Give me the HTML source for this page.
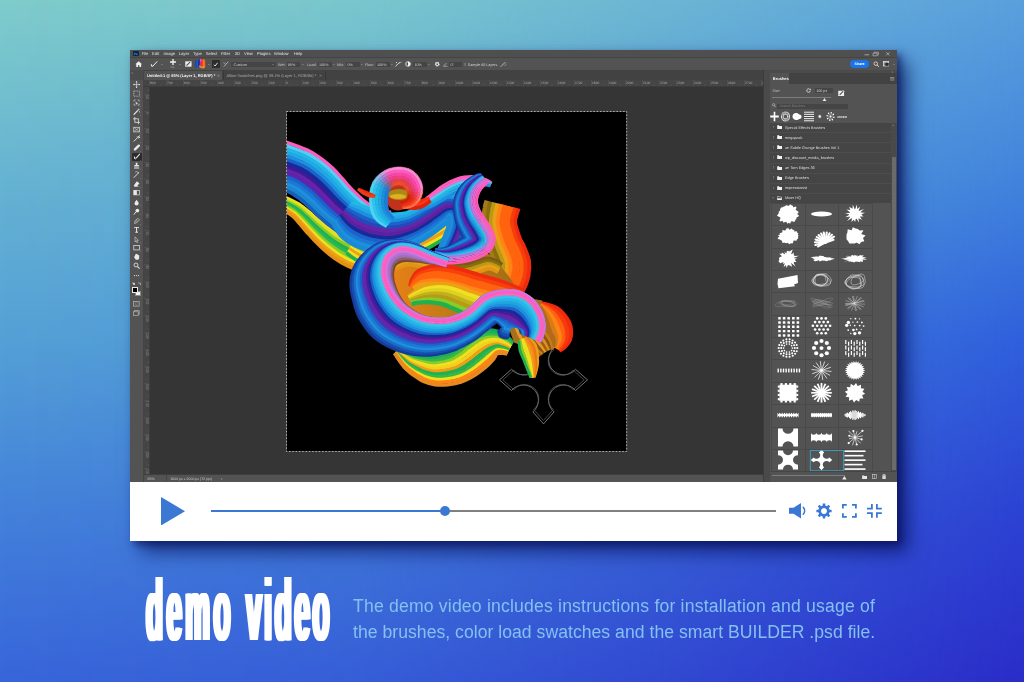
<!DOCTYPE html>
<html lang="en">
<head>
<meta charset="utf-8">
<title>demo video</title>
<style>
*{margin:0;padding:0;box-sizing:border-box}
html,body{width:1024px;height:682px;overflow:hidden;background:#3a6ad8}
body{font-family:"Liberation Sans",sans-serif;position:relative}
.a{position:absolute}
#bg{left:0;top:0;width:1024px;height:682px;
 background:linear-gradient(180deg,#7fcccb 0%,#67b4d2 25%,#54a0d6 50%,#4381da 75%,#3865da 100%);}
#bg2{left:0;top:0;width:1024px;height:682px;
 background:linear-gradient(180deg,#5a9fdc 0%,#4285dc 25%,#2f5fdc 50%,#2c42d2 75%,#2a2cc8 100%);
 -webkit-mask-image:linear-gradient(90deg,transparent 0%,rgba(0,0,0,.13) 35%,rgba(0,0,0,.5) 65%,#000 100%);mask-image:linear-gradient(90deg,transparent 0%,rgba(0,0,0,.13) 35%,rgba(0,0,0,.5) 65%,#000 100%);}
#win{left:130px;top:50px;width:767px;height:491px;background:#535353;
 box-shadow:11px 11px 18px rgba(4,10,78,.62),4px 4px 7px rgba(4,10,70,.5);}
#ps{left:0;top:0;width:767px;height:432px;background:#535353;overflow:hidden;font-size:4.6px;color:#ddd;line-height:1}
#player{left:0;top:432px;width:767px;height:59px;background:#fff}
.t{position:absolute;white-space:nowrap;line-height:1}
/* bottom text */
#title{left:146px;top:566px;font-weight:bold;font-size:88px;color:#fff;white-space:nowrap;line-height:1;
 transform-origin:0 0;transform:scaleX(.315);letter-spacing:11px;word-spacing:4px;
 text-shadow:2.8px 0 0 #fff,-2.8px 0 0 #fff,5.6px 0 0 #fff,-5.6px 0 0 #fff}
#desc{will-change:opacity;left:353px;top:593px;width:560px;font-size:17.6px;line-height:26.3px;color:#84c0f0;white-space:nowrap}
</style>
</head>
<body>
<div id="bg" class="a"></div>
<div id="bg2" class="a"></div>

<div id="win" class="a">
 <div id="ps" class="a">
<div class="a" style="left:-130px;top:-50px;width:0;height:0">
<div class="a" style="left:130px;top:50px;width:767px;height:7.5px;background:#4f4f4f;"></div>
<div class="a" style="left:130px;top:57.2px;width:767px;height:0.6px;background:#444;"></div>
<div class="a" style="left:133.2px;top:51.4px;width:5.4px;height:5px;background:#0b2747;border-radius:1px"></div>
<svg class="a" style="left:862px;top:51px;" width="30" height="6" viewBox="0 0 30 6"><path d="M2.500 3.800h4.500" stroke="#c4c4c4" stroke-width=".7"/><path d="M11 2.200h4.200v2.600H11z M12.200 2.200v-1h4.200v2.600h-1.200" fill="none" stroke="#c4c4c4" stroke-width=".6"/><path d="M24.300 1.300l3 3M27.300 1.300l-3 3" stroke="#c4c4c4" stroke-width=".7"/></svg>
<div class="a" style="left:130px;top:57.8px;width:767px;height:12.2px;background:#535353;"></div>
<svg class="a" style="left:135.4px;top:60.8px;" width="7.4" height="6.2" viewBox="0 0 14 12"><path d="M7 .5L.5 6.2h1.8V11.5h3.4V8h2.6v3.5h3.4V6.2h1.8z" fill="#f0f0f0"/></svg>
<svg class="a" style="left:149.5px;top:60.5px;" width="8" height="7" viewBox="0 0 16 14"><path d="M1.5 6.5c1.5-.6 2.6.3 3 2.2.3 1.5 1 2.3 2 2.3-1.6 1-3.6.6-4.3-1-.5-1.2-.2-2.6-.7-3.500z" fill="#f0f0f0"/><path d="M6.5 9.500L14 1.200" stroke="#f0f0f0" stroke-width="2" stroke-linecap="round"/></svg>
<svg class="a" style="left:160.5px;top:63.54px;" width="2.2" height="1.32" viewBox="0 0 10 6"><path d="M1 1L5 5L9 1" fill="none" stroke="#bdbdbd" stroke-width="2"/></svg>
<svg class="a" style="left:169.8px;top:59.2px;" width="6" height="6" viewBox="0 0 12 12"><path d="M6 0v12M0 6h12" stroke="#f4f4f4" stroke-width="2.600"/></svg>
<svg class="a" style="left:179.1px;top:63.54px;" width="2.2" height="1.32" viewBox="0 0 10 6"><path d="M1 1L5 5L9 1" fill="none" stroke="#bdbdbd" stroke-width="2"/></svg>
<svg class="a" style="left:185.4px;top:61.2px;" width="6.8" height="6" viewBox="0 0 14 12"><rect x=".5" y=".500" width="13" height="11" fill="#ededed"/><path d="M3 9.500L10.500 2" stroke="#535353" stroke-width="2.200"/></svg>
<svg class="a" style="left:195.4px;top:58.2px;" width="10.8" height="11" viewBox="0 0 22 22"><defs><linearGradient id="sw" x1="0" x2="1" y1="0" y2="0"><stop offset="0" stop-color="#0b3fa8"/><stop offset=".22" stop-color="#1a5fd8"/><stop offset=".36" stop-color="#0a1e78"/><stop offset=".5" stop-color="#d02fb0"/><stop offset=".66" stop-color="#e8281c"/><stop offset=".82" stop-color="#ff7a18"/><stop offset="1" stop-color="#e85a10"/></linearGradient></defs><path d="M1 5c2-3 5-3 6 0 1-4 5-5 7-1 2-3 6-2 7 1v13c-1 3-5 3-7 0-1 3-5 3-7 0-1 3-5 3-6 0z" fill="url(#sw)"/><path d="M8 14c3 2 6 3 12 2v4c-4 2-9 1-12-2z" fill="#e0a020" opacity=".75"/><circle cx="12" cy="4.500" r="2.200" fill="#ff4fc0"/></svg>
<svg class="a" style="left:207.5px;top:63.54px;" width="2.2" height="1.32" viewBox="0 0 10 6"><path d="M1 1L5 5L9 1" fill="none" stroke="#bdbdbd" stroke-width="2"/></svg>
<div class="a" style="left:212px;top:60.4px;width:7.5px;height:7.2px;background:#2d2d2d;border-radius:.8px"></div>
<svg class="a" style="left:213.2px;top:61.5px;" width="5.2" height="5" viewBox="0 0 10 10"><path d="M1.500 5.500L4 8l5-6.500" fill="none" stroke="#f2f2f2" stroke-width="1.800"/></svg>
<svg class="a" style="left:222.6px;top:61px;" width="6.4" height="6" viewBox="0 0 12 12"><path d="M2 10.500L9.500 2" stroke="#b5b5b5" stroke-width="1.800" stroke-linecap="round"/><path d="M1 3l3 3M4 3L1 6" stroke="#b5b5b5" stroke-width="1"/></svg>
<div class="a" style="left:231.4px;top:61.6px;width:44.4px;height:5.6px;background:#454545;border-radius:.6px"></div>
<svg class="a" style="left:271.8px;top:63.74px;" width="2.2" height="1.32" viewBox="0 0 10 6"><path d="M1 1L5 5L9 1" fill="none" stroke="#bdbdbd" stroke-width="2"/></svg>
<div class="a" style="left:286.6px;top:61.6px;width:13.6px;height:5.6px;background:#454545;border-radius:.6px"></div>
<svg class="a" style="left:301.7px;top:63.74px;" width="2.2" height="1.32" viewBox="0 0 10 6"><path d="M1 1L5 5L9 1" fill="none" stroke="#bdbdbd" stroke-width="2"/></svg>
<div class="a" style="left:317.8px;top:61.6px;width:13.8px;height:5.6px;background:#454545;border-radius:.6px"></div>
<svg class="a" style="left:332.9px;top:63.74px;" width="2.2" height="1.32" viewBox="0 0 10 6"><path d="M1 1L5 5L9 1" fill="none" stroke="#bdbdbd" stroke-width="2"/></svg>
<div class="a" style="left:346.2px;top:61.6px;width:13.4px;height:5.6px;background:#454545;border-radius:.6px"></div>
<svg class="a" style="left:360.5px;top:63.74px;" width="2.2" height="1.32" viewBox="0 0 10 6"><path d="M1 1L5 5L9 1" fill="none" stroke="#bdbdbd" stroke-width="2"/></svg>
<div class="a" style="left:375.8px;top:61.6px;width:13.8px;height:5.6px;background:#454545;border-radius:.6px"></div>
<svg class="a" style="left:390.5px;top:63.74px;" width="2.2" height="1.32" viewBox="0 0 10 6"><path d="M1 1L5 5L9 1" fill="none" stroke="#bdbdbd" stroke-width="2"/></svg>
<svg class="a" style="left:395px;top:61px;" width="7" height="6" viewBox="0 0 14 12"><path d="M1.500 10L9 3" stroke="#e6e6e6" stroke-width="1.800" stroke-linecap="round"/><path d="M9 5c2-3 4-3.500 4.500-2" fill="none" stroke="#e6e6e6" stroke-width="1"/><circle cx="3" cy="3" r="1.200" fill="#e6e6e6"/></svg>
<svg class="a" style="left:405px;top:61.2px;" width="6" height="6" viewBox="0 0 12 12"><circle cx="6" cy="6" r="4.600" fill="none" stroke="#efefef" stroke-width="1.700"/><path d="M6 1.400a4.600 4.600 0 0 1 0 9.200z" fill="#efefef"/></svg>
<div class="a" style="left:413px;top:61.6px;width:14px;height:5.6px;background:#454545;border-radius:.6px"></div>
<svg class="a" style="left:428.1px;top:63.74px;" width="2.2" height="1.32" viewBox="0 0 10 6"><path d="M1 1L5 5L9 1" fill="none" stroke="#bdbdbd" stroke-width="2"/></svg>
<svg class="a" style="left:434px;top:61px;" width="6.4" height="6.4" viewBox="0 0 12 12"><circle cx="6" cy="6" r="3.200" fill="none" stroke="#f0f0f0" stroke-width="2.400" stroke-dasharray="1.600 .9"/><circle cx="6" cy="6" r="2.600" fill="none" stroke="#f0f0f0" stroke-width="1.500"/></svg>
<svg class="a" style="left:442.6px;top:61.8px;" width="5" height="5" viewBox="0 0 10 10"><path d="M1 8.500h8M1 8.500L7 2" fill="none" stroke="#c9c9c9" stroke-width="1.200"/></svg>
<div class="a" style="left:449px;top:61.6px;width:13px;height:5.6px;background:#454545;border-radius:.6px"></div>
<div class="a" style="left:463.8px;top:62.6px;width:2.6px;height:3.2px;background:#454545;border:.4px solid #6d6d6d"></div>
<svg class="a" style="left:500.4px;top:60.8px;" width="7" height="6.4" viewBox="0 0 14 12"><path d="M2 10.500L10 2.500" stroke="#b9b9b9" stroke-width="2" stroke-linecap="round"/><path d="M8.500 8.500a3.500 3.500 0 0 0 4-4" fill="none" stroke="#b9b9b9" stroke-width="1"/></svg>
<div class="a" style="left:850px;top:59.9px;width:18.6px;height:8.200px;background:#1b74e8;border-radius:4.100px"></div>
<svg class="a" style="left:872.6px;top:61px;" width="6.6" height="6.4" viewBox="0 0 12 12"><circle cx="5" cy="5" r="3.300" fill="none" stroke="#ececec" stroke-width="1.400"/><path d="M7.500 7.500L11 11" stroke="#ececec" stroke-width="1.700"/></svg>
<svg class="a" style="left:882.8px;top:61.4px;" width="6.2" height="5.4" viewBox="0 0 12 10"><rect x=".7" y=".7" width="10.600" height="8.600" fill="none" stroke="#ececec" stroke-width="1.400"/><path d="M.7 3h10.600M4 3v6.500" stroke="#ececec" stroke-width="1.200"/><rect x="4.500" y="3.500" width="6.500" height="5.500" fill="#2a2a2a"/></svg>
<svg class="a" style="left:892.5px;top:63.74px;" width="2.2" height="1.32" viewBox="0 0 10 6"><path d="M1 1L5 5L9 1" fill="none" stroke="#bdbdbd" stroke-width="2"/></svg>
<div class="a" style="left:130px;top:70px;width:13.6px;height:10px;background:#4b4b4b;"></div>
<div class="a" style="left:143.6px;top:70px;width:619.8px;height:10px;background:#424242;"></div>
<div class="a" style="left:143.6px;top:70.6px;width:78.9px;height:9.4px;background:#535353;"></div>
<div class="a" style="left:222.5px;top:70.6px;width:0.5px;height:9.4px;background:#383838;"></div>
<div class="a" style="left:324.6px;top:70.6px;width:0.5px;height:9.4px;background:#383838;"></div>
<div class="a" style="left:143.6px;top:80px;width:619.8px;height:6.2px;background:#454545;"></div>
<div class="a" style="left:143.6px;top:86px;width:5.8px;height:388.5px;background:#454545;"></div>
<div class="a" style="left:149.4px;top:86.2px;width:614px;height:388.3px;background:#353535;"></div>
<div class="a" style="left:143.6px;top:85.8px;width:619.8px;height:0.5px;background:#3c3c3c;"></div>
<div class="a" style="left:149.2px;top:80px;width:0.5px;height:394.5px;background:#3c3c3c;"></div>
<div class="a" style="left:149.2px;top:80.4px;width:0.4px;height:5.6px;background:#4f4f4f;"></div>
<div class="a" style="left:166.2px;top:80.4px;width:0.4px;height:5.6px;background:#4f4f4f;"></div>
<div class="a" style="left:183.2px;top:80.4px;width:0.4px;height:5.6px;background:#4f4f4f;"></div>
<div class="a" style="left:200.2px;top:80.4px;width:0.4px;height:5.6px;background:#4f4f4f;"></div>
<div class="a" style="left:217.2px;top:80.4px;width:0.4px;height:5.6px;background:#4f4f4f;"></div>
<div class="a" style="left:234.2px;top:80.4px;width:0.4px;height:5.6px;background:#4f4f4f;"></div>
<div class="a" style="left:251.2px;top:80.4px;width:0.4px;height:5.6px;background:#4f4f4f;"></div>
<div class="a" style="left:268.2px;top:80.4px;width:0.4px;height:5.6px;background:#4f4f4f;"></div>
<div class="a" style="left:285.2px;top:80.4px;width:0.4px;height:5.6px;background:#4f4f4f;"></div>
<div class="a" style="left:302.2px;top:80.4px;width:0.4px;height:5.6px;background:#4f4f4f;"></div>
<div class="a" style="left:319.2px;top:80.4px;width:0.4px;height:5.6px;background:#4f4f4f;"></div>
<div class="a" style="left:336.2px;top:80.4px;width:0.4px;height:5.6px;background:#4f4f4f;"></div>
<div class="a" style="left:353.2px;top:80.4px;width:0.4px;height:5.6px;background:#4f4f4f;"></div>
<div class="a" style="left:370.2px;top:80.4px;width:0.4px;height:5.6px;background:#4f4f4f;"></div>
<div class="a" style="left:387.2px;top:80.4px;width:0.4px;height:5.6px;background:#4f4f4f;"></div>
<div class="a" style="left:404.2px;top:80.4px;width:0.4px;height:5.6px;background:#4f4f4f;"></div>
<div class="a" style="left:421.2px;top:80.4px;width:0.4px;height:5.6px;background:#4f4f4f;"></div>
<div class="a" style="left:438.2px;top:80.4px;width:0.4px;height:5.6px;background:#4f4f4f;"></div>
<div class="a" style="left:455.2px;top:80.4px;width:0.4px;height:5.6px;background:#4f4f4f;"></div>
<div class="a" style="left:472.2px;top:80.4px;width:0.4px;height:5.6px;background:#4f4f4f;"></div>
<div class="a" style="left:489.2px;top:80.4px;width:0.4px;height:5.6px;background:#4f4f4f;"></div>
<div class="a" style="left:506.2px;top:80.4px;width:0.4px;height:5.6px;background:#4f4f4f;"></div>
<div class="a" style="left:523.2px;top:80.4px;width:0.4px;height:5.6px;background:#4f4f4f;"></div>
<div class="a" style="left:540.2px;top:80.4px;width:0.4px;height:5.6px;background:#4f4f4f;"></div>
<div class="a" style="left:557.2px;top:80.4px;width:0.4px;height:5.6px;background:#4f4f4f;"></div>
<div class="a" style="left:574.2px;top:80.4px;width:0.4px;height:5.6px;background:#4f4f4f;"></div>
<div class="a" style="left:591.2px;top:80.4px;width:0.4px;height:5.6px;background:#4f4f4f;"></div>
<div class="a" style="left:608.2px;top:80.4px;width:0.4px;height:5.6px;background:#4f4f4f;"></div>
<div class="a" style="left:625.2px;top:80.4px;width:0.4px;height:5.6px;background:#4f4f4f;"></div>
<div class="a" style="left:642.2px;top:80.4px;width:0.4px;height:5.6px;background:#4f4f4f;"></div>
<div class="a" style="left:659.2px;top:80.4px;width:0.4px;height:5.6px;background:#4f4f4f;"></div>
<div class="a" style="left:676.2px;top:80.4px;width:0.4px;height:5.6px;background:#4f4f4f;"></div>
<div class="a" style="left:693.2px;top:80.4px;width:0.4px;height:5.6px;background:#4f4f4f;"></div>
<div class="a" style="left:710.2px;top:80.4px;width:0.4px;height:5.6px;background:#4f4f4f;"></div>
<div class="a" style="left:727.2px;top:80.4px;width:0.4px;height:5.6px;background:#4f4f4f;"></div>
<div class="a" style="left:744.2px;top:80.4px;width:0.4px;height:5.6px;background:#4f4f4f;"></div>
<div class="a" style="left:761.2px;top:80.4px;width:0.4px;height:5.6px;background:#4f4f4f;"></div>
<div class="a" style="left:143.8px;top:94.2px;width:5.4px;height:0.4px;background:#4f4f4f;"></div>
<span class="t" style="left:144.2px;top:95.2px;font-size:2.7px;color:#8c8c8c;writing-mode:vertical-rl;letter-spacing:-.2px">100</span>
<div class="a" style="left:143.8px;top:111.2px;width:5.4px;height:0.4px;background:#4f4f4f;"></div>
<span class="t" style="left:144.2px;top:112.2px;font-size:2.7px;color:#8c8c8c;writing-mode:vertical-rl;letter-spacing:-.2px">0</span>
<div class="a" style="left:143.8px;top:128.2px;width:5.4px;height:0.4px;background:#4f4f4f;"></div>
<span class="t" style="left:144.2px;top:129.2px;font-size:2.7px;color:#8c8c8c;writing-mode:vertical-rl;letter-spacing:-.2px">100</span>
<div class="a" style="left:143.8px;top:145.2px;width:5.4px;height:0.4px;background:#4f4f4f;"></div>
<span class="t" style="left:144.2px;top:146.2px;font-size:2.7px;color:#8c8c8c;writing-mode:vertical-rl;letter-spacing:-.2px">200</span>
<div class="a" style="left:143.8px;top:162.2px;width:5.4px;height:0.4px;background:#4f4f4f;"></div>
<span class="t" style="left:144.2px;top:163.2px;font-size:2.7px;color:#8c8c8c;writing-mode:vertical-rl;letter-spacing:-.2px">300</span>
<div class="a" style="left:143.8px;top:179.2px;width:5.4px;height:0.4px;background:#4f4f4f;"></div>
<span class="t" style="left:144.2px;top:180.2px;font-size:2.7px;color:#8c8c8c;writing-mode:vertical-rl;letter-spacing:-.2px">400</span>
<div class="a" style="left:143.8px;top:196.2px;width:5.4px;height:0.4px;background:#4f4f4f;"></div>
<span class="t" style="left:144.2px;top:197.2px;font-size:2.7px;color:#8c8c8c;writing-mode:vertical-rl;letter-spacing:-.2px">500</span>
<div class="a" style="left:143.8px;top:213.2px;width:5.4px;height:0.4px;background:#4f4f4f;"></div>
<span class="t" style="left:144.2px;top:214.2px;font-size:2.7px;color:#8c8c8c;writing-mode:vertical-rl;letter-spacing:-.2px">600</span>
<div class="a" style="left:143.8px;top:230.2px;width:5.4px;height:0.4px;background:#4f4f4f;"></div>
<span class="t" style="left:144.2px;top:231.2px;font-size:2.7px;color:#8c8c8c;writing-mode:vertical-rl;letter-spacing:-.2px">700</span>
<div class="a" style="left:143.8px;top:247.2px;width:5.4px;height:0.4px;background:#4f4f4f;"></div>
<span class="t" style="left:144.2px;top:248.2px;font-size:2.7px;color:#8c8c8c;writing-mode:vertical-rl;letter-spacing:-.2px">800</span>
<div class="a" style="left:143.8px;top:264.2px;width:5.4px;height:0.4px;background:#4f4f4f;"></div>
<span class="t" style="left:144.2px;top:265.2px;font-size:2.7px;color:#8c8c8c;writing-mode:vertical-rl;letter-spacing:-.2px">900</span>
<div class="a" style="left:143.8px;top:281.2px;width:5.4px;height:0.4px;background:#4f4f4f;"></div>
<span class="t" style="left:144.2px;top:282.2px;font-size:2.7px;color:#8c8c8c;writing-mode:vertical-rl;letter-spacing:-.2px">1000</span>
<div class="a" style="left:143.8px;top:298.2px;width:5.4px;height:0.4px;background:#4f4f4f;"></div>
<span class="t" style="left:144.2px;top:299.2px;font-size:2.7px;color:#8c8c8c;writing-mode:vertical-rl;letter-spacing:-.2px">1100</span>
<div class="a" style="left:143.8px;top:315.2px;width:5.4px;height:0.4px;background:#4f4f4f;"></div>
<span class="t" style="left:144.2px;top:316.2px;font-size:2.7px;color:#8c8c8c;writing-mode:vertical-rl;letter-spacing:-.2px">1200</span>
<div class="a" style="left:143.8px;top:332.2px;width:5.4px;height:0.4px;background:#4f4f4f;"></div>
<span class="t" style="left:144.2px;top:333.2px;font-size:2.7px;color:#8c8c8c;writing-mode:vertical-rl;letter-spacing:-.2px">1300</span>
<div class="a" style="left:143.8px;top:349.2px;width:5.4px;height:0.4px;background:#4f4f4f;"></div>
<span class="t" style="left:144.2px;top:350.2px;font-size:2.7px;color:#8c8c8c;writing-mode:vertical-rl;letter-spacing:-.2px">1400</span>
<div class="a" style="left:143.8px;top:366.2px;width:5.4px;height:0.4px;background:#4f4f4f;"></div>
<span class="t" style="left:144.2px;top:367.2px;font-size:2.7px;color:#8c8c8c;writing-mode:vertical-rl;letter-spacing:-.2px">1500</span>
<div class="a" style="left:143.8px;top:383.2px;width:5.4px;height:0.4px;background:#4f4f4f;"></div>
<span class="t" style="left:144.2px;top:384.2px;font-size:2.7px;color:#8c8c8c;writing-mode:vertical-rl;letter-spacing:-.2px">1600</span>
<div class="a" style="left:143.8px;top:400.2px;width:5.4px;height:0.4px;background:#4f4f4f;"></div>
<span class="t" style="left:144.2px;top:401.2px;font-size:2.7px;color:#8c8c8c;writing-mode:vertical-rl;letter-spacing:-.2px">1700</span>
<div class="a" style="left:143.8px;top:417.2px;width:5.4px;height:0.4px;background:#4f4f4f;"></div>
<span class="t" style="left:144.2px;top:418.2px;font-size:2.7px;color:#8c8c8c;writing-mode:vertical-rl;letter-spacing:-.2px">1800</span>
<div class="a" style="left:143.8px;top:434.2px;width:5.4px;height:0.4px;background:#4f4f4f;"></div>
<span class="t" style="left:144.2px;top:435.2px;font-size:2.7px;color:#8c8c8c;writing-mode:vertical-rl;letter-spacing:-.2px">1900</span>
<div class="a" style="left:143.8px;top:451.2px;width:5.4px;height:0.4px;background:#4f4f4f;"></div>
<span class="t" style="left:144.2px;top:452.2px;font-size:2.7px;color:#8c8c8c;writing-mode:vertical-rl;letter-spacing:-.2px">2000</span>
<div class="a" style="left:143.8px;top:468.2px;width:5.4px;height:0.4px;background:#4f4f4f;"></div>
<span class="t" style="left:144.2px;top:469.2px;font-size:2.7px;color:#8c8c8c;writing-mode:vertical-rl;letter-spacing:-.2px">2100</span>
<div class="a" style="left:149.4px;top:84.2px;width:614px;height:1.700px;background:repeating-linear-gradient(90deg,#4f4f4f 0,#4f4f4f .4px,transparent .4px,transparent 3.400px);background-position:1.400px 0"></div>
<div class="a" style="left:147.4px;top:86.2px;width:1.800px;height:388px;background:repeating-linear-gradient(180deg,#4f4f4f 0,#4f4f4f .4px,transparent .4px,transparent 3.400px);background-position:0 1.200px"></div>
<div class="a" style="left:143.6px;top:474.5px;width:619.8px;height:7.5px;background:#535353;"></div>
<div class="a" style="left:143.6px;top:474.3px;width:619.8px;height:0.5px;background:#3e3e3e;"></div>
<div class="a" style="left:166px;top:475.2px;width:0.4px;height:6.2px;background:#444;"></div>
<div class="a" style="left:130px;top:80px;width:13.6px;height:402px;background:#535353;"></div>
<div class="a" style="left:143.3px;top:70px;width:0.5px;height:412px;background:#444;"></div>
<svg class="a" style="left:130px;top:50px;will-change:opacity" width="767" height="432" viewBox="130 50 767 432" font-family="Liberation Sans, sans-serif" text-rendering="geometricPrecision"><text x="134.1" y="55" font-size="2.9" fill="#39a6ff" font-weight="bold">Ps</text><text x="141.8" y="55" font-size="4.1" fill="#e2e2e2">File</text><text x="152" y="55" font-size="4.1" fill="#e2e2e2">Edit</text><text x="163.6" y="55" font-size="4.1" fill="#e2e2e2">Image</text><text x="178.8" y="55" font-size="4.1" fill="#e2e2e2">Layer</text><text x="193" y="55" font-size="4.1" fill="#e2e2e2">Type</text><text x="205.8" y="55" font-size="4.1" fill="#e2e2e2">Select</text><text x="221" y="55" font-size="4.1" fill="#e2e2e2">Filter</text><text x="234.7" y="55" font-size="4.1" fill="#e2e2e2">3D</text><text x="244" y="55" font-size="4.1" fill="#e2e2e2">View</text><text x="257" y="55" font-size="4.1" fill="#e2e2e2">Plugins</text><text x="274" y="55" font-size="4.1" fill="#e2e2e2">Window</text><text x="293.8" y="55" font-size="4.1" fill="#e2e2e2">Help</text><text x="170.2" y="68" font-size="2.6" fill="#a8a8a8">100</text><text x="233.6" y="66" font-size="3.9" fill="#c8c8c8">Custom</text><text x="278" y="66" font-size="3.7" fill="#c4c4c4">Wet:</text><text x="287.8" y="66" font-size="3.7" fill="#d0d0d0">95%</text><text x="307.3" y="66" font-size="3.7" fill="#c4c4c4">Load:</text><text x="319" y="66" font-size="3.7" fill="#d0d0d0">100%</text><text x="337" y="66" font-size="3.7" fill="#c4c4c4">Mix:</text><text x="347.4" y="66" font-size="3.7" fill="#d0d0d0">0%</text><text x="365" y="66" font-size="3.7" fill="#c4c4c4">Flow:</text><text x="377" y="66" font-size="3.7" fill="#d0d0d0">100%</text><text x="414.4" y="66" font-size="3.7" fill="#d0d0d0">10%</text><text x="450.4" y="66" font-size="3.7" fill="#d0d0d0">0°</text><text x="467.8" y="66" font-size="3.7" fill="#d2d2d2">Sample All Layers</text><text x="854.6" y="65" font-size="3.6" fill="#fff" font-weight="bold">Share</text><text x="131.6" y="74" font-size="3.2" fill="#aaa">«</text><text x="147" y="77" font-size="4" fill="#f2f2f2" font-weight="bold" style="letter-spacing:-.02px">Untitled-1 @ 65% (Layer 1, RGB/8*) *</text><text x="217.2" y="77" font-size="4.2" fill="#c2c2c2">×</text><text x="226.4" y="77" font-size="4" fill="#a9a9a9">Allow-Swatches.png @ 39.1% (Layer 1, RGB/8#) *</text><text x="319.2" y="77" font-size="4.2" fill="#a0a0a0">×</text><text x="150" y="84" font-size="3.3" fill="#a6a6a6">800</text><text x="167" y="84" font-size="3.3" fill="#a6a6a6">700</text><text x="184" y="84" font-size="3.3" fill="#a6a6a6">600</text><text x="201" y="84" font-size="3.3" fill="#a6a6a6">500</text><text x="218" y="84" font-size="3.3" fill="#a6a6a6">400</text><text x="235" y="84" font-size="3.3" fill="#a6a6a6">300</text><text x="252" y="84" font-size="3.3" fill="#a6a6a6">200</text><text x="269" y="84" font-size="3.3" fill="#a6a6a6">100</text><text x="286" y="84" font-size="3.3" fill="#a6a6a6">0</text><text x="303" y="84" font-size="3.3" fill="#a6a6a6">100</text><text x="320" y="84" font-size="3.3" fill="#a6a6a6">200</text><text x="337" y="84" font-size="3.3" fill="#a6a6a6">300</text><text x="354" y="84" font-size="3.3" fill="#a6a6a6">400</text><text x="371" y="84" font-size="3.3" fill="#a6a6a6">500</text><text x="388" y="84" font-size="3.3" fill="#a6a6a6">600</text><text x="405" y="84" font-size="3.3" fill="#a6a6a6">700</text><text x="422" y="84" font-size="3.3" fill="#a6a6a6">800</text><text x="439" y="84" font-size="3.3" fill="#a6a6a6">900</text><text x="456" y="84" font-size="3.3" fill="#a6a6a6">1000</text><text x="473" y="84" font-size="3.3" fill="#a6a6a6">1100</text><text x="490" y="84" font-size="3.3" fill="#a6a6a6">1200</text><text x="507" y="84" font-size="3.3" fill="#a6a6a6">1300</text><text x="524" y="84" font-size="3.3" fill="#a6a6a6">1400</text><text x="541" y="84" font-size="3.3" fill="#a6a6a6">1500</text><text x="558" y="84" font-size="3.3" fill="#a6a6a6">1600</text><text x="575" y="84" font-size="3.3" fill="#a6a6a6">1700</text><text x="592" y="84" font-size="3.3" fill="#a6a6a6">1800</text><text x="609" y="84" font-size="3.3" fill="#a6a6a6">1900</text><text x="626" y="84" font-size="3.3" fill="#a6a6a6">2000</text><text x="643" y="84" font-size="3.3" fill="#a6a6a6">2100</text><text x="660" y="84" font-size="3.3" fill="#a6a6a6">2200</text><text x="677" y="84" font-size="3.3" fill="#a6a6a6">2300</text><text x="694" y="84" font-size="3.3" fill="#a6a6a6">2400</text><text x="711" y="84" font-size="3.3" fill="#a6a6a6">2500</text><text x="728" y="84" font-size="3.3" fill="#a6a6a6">2600</text><text x="745" y="84" font-size="3.3" fill="#a6a6a6">2700</text><text x="762" y="84" font-size="3.3" fill="#a6a6a6">2800</text><text x="147.6" y="480" font-size="3.6" fill="#d0d0d0">65%</text><text x="170.4" y="480" font-size="3.5" fill="#cfcfcf">2000 px x 2000 px (72 ppi)</text><text x="221" y="480" font-size="4.4" fill="#c0c0c0">›</text></svg>
<div class="a" style="left:286px;top:110.500px;width:341.200px;height:341px;background:#000"></div><svg class="a" style="left:287px;top:111.500px" width="340" height="340" viewBox="287 111.500 340 340"><defs><filter id="sm" x="-5%" y="-5%" width="110%" height="110%"><feGaussianBlur stdDeviation=".65"/></filter></defs><g transform="translate(543.500 379.400)" fill="none"><path d="M-44 0L-32-10.6A15.2 15.2 0 1 0-10.6-32L0-44 10.6-32A15.2 15.2 0 1 0 32-10.6L44 0 32 10.6A15.2 15.2 0 1 0 10.6 32L0 44-10.6 32A15.2 15.2 0 1 0-32 10.6z" stroke="#808080" stroke-width=".9"/><path d="M-44 0L-32-10.6A15.2 15.2 0 1 0-10.6-32L0-44 10.6-32A15.2 15.2 0 1 0 32-10.6L44 0 32 10.6A15.2 15.2 0 1 0 10.6 32L0 44-10.6 32A15.2 15.2 0 1 0-32 10.6z" stroke="#5a5a5a" stroke-width=".8" transform="scale(.925)"/></g><g filter="url(#sm)" fill="none" stroke-linejoin="round"><path d="M282.7 195.9c1.3 0.6 4.6 2 7.7 3.5c3.1 1.5 7.4 3.6 10.6 5.7c3.3 2.1 6 4.8 8.8 7.1c2.7 2.3 5 4.5 7.9 6.8c2.8 2.4 6 5 9.1 7.3c3.1 2.3 6 4.5 9.3 6.5c3.2 1.9 6.8 3.8 10.3 5.5c3.4 1.6 6.8 3.1 10.5 4.5c3.7 1.4 8 3 11.8 4.1c3.8 1.2 7.6 2.4 11.2 3c3.6 0.7 7 0.7 10.3 0.9c3.3 0.1 7.9 0 9.4 0" stroke="#f0e020" stroke-width="3.5"/><path d="M282 197.2c1.3 0.6 4.7 2 7.7 3.6c3 1.5 7.2 3.5 10.3 5.7c3.1 2.1 5.7 4.6 8.4 7c2.7 2.3 5 4.6 7.8 7c2.8 2.4 6 5.1 9 7.5c3.1 2.4 6.1 4.7 9.3 6.8c3.3 2.1 6.9 4.1 10.4 5.9c3.5 1.8 7 3.4 10.8 4.9c3.8 1.5 8.1 3.1 12.1 4.3c3.9 1.2 7.9 2.4 11.6 3c3.8 0.7 7.5 0.7 10.9 0.8c3.4 0.1 7.9-0.1 9.4-0.1" stroke="#d8e028" stroke-width="3.5"/><path d="M281.3 198.5c1.3 0.6 4.7 2.1 7.7 3.6c2.9 1.6 7 3.6 10 5.7c3 2.1 5.5 4.6 8.1 7c2.6 2.3 5 4.7 7.7 7.2c2.8 2.5 5.9 5.2 8.9 7.7c3 2.5 6 4.9 9.3 7.2c3.3 2.2 6.9 4.3 10.4 6.2c3.6 2 7.2 3.7 11.1 5.3c3.9 1.6 8.3 3.2 12.3 4.5c4.1 1.2 8.2 2.4 12.1 3.1c4 0.6 8 0.6 11.5 0.6c3.5 0.1 7.8-0.2 9.4-0.2" stroke="#88cc28" stroke-width="3.5"/><path d="M280.7 199.7c1.2 0.7 4.7 2.2 7.6 3.8c2.9 1.6 6.8 3.6 9.7 5.7c2.9 2 5.2 4.5 7.8 6.9c2.5 2.3 4.9 4.8 7.6 7.4c2.7 2.6 5.7 5.3 8.7 7.9c3 2.6 6.1 5.2 9.4 7.5c3.3 2.4 6.8 4.6 10.5 6.7c3.6 2 7.2 3.9 11.2 5.6c4 1.7 8.5 3.3 12.7 4.6c4.2 1.3 8.5 2.6 12.6 3.2c4.1 0.6 8.4 0.5 12 0.6c3.6 0 7.8-0.3 9.4-0.4" stroke="#22b050" stroke-width="3.5"/><path d="M280 201c1.3 0.6 4.7 2.3 7.6 3.8c2.8 1.6 6.6 3.6 9.4 5.7c2.8 2.1 4.9 4.4 7.4 6.8c2.5 2.5 4.9 5.1 7.6 7.7c2.7 2.6 5.6 5.4 8.6 8.1c3 2.7 6.1 5.4 9.4 7.9c3.3 2.5 6.8 4.8 10.5 7c3.7 2.2 7.4 4.2 11.5 6c4.1 1.8 8.7 3.5 13 4.8c4.3 1.3 8.7 2.6 13 3.2c4.3 0.6 9 0.5 12.6 0.5c3.7 0 7.8-0.4 9.4-0.5" stroke="#28b858" stroke-width="3.5"/><path d="M279.3 202.3c1.3 0.6 4.8 2.3 7.6 3.9c2.7 1.6 6.4 3.6 9.1 5.6c2.7 2.1 4.7 4.4 7.1 6.8c2.4 2.5 4.8 5.2 7.5 7.9c2.6 2.7 5.4 5.5 8.4 8.3c3 2.7 6.1 5.7 9.5 8.3c3.3 2.6 6.8 5 10.5 7.3c3.8 2.3 7.6 4.5 11.8 6.4c4.1 1.9 8.8 3.6 13.3 5c4.4 1.3 9 2.6 13.4 3.2c4.5 0.6 9.5 0.5 13.2 0.4c3.8 0 7.8-0.5 9.4-0.6" stroke="#88cc28" stroke-width="3.5"/><path d="M278.7 203.5c1.2 0.7 4.7 2.5 7.4 4.1c2.8 1.6 6.3 3.5 8.9 5.6c2.6 2.1 4.4 4.3 6.8 6.7c2.3 2.5 4.8 5.3 7.4 8.1c2.6 2.7 5.3 5.6 8.2 8.5c3 2.8 6.2 5.9 9.6 8.6c3.3 2.8 6.8 5.4 10.6 7.8c3.7 2.4 7.7 4.7 11.9 6.7c4.3 2 9.1 3.7 13.7 5.1c4.5 1.5 9.2 2.7 13.9 3.3c4.6 0.6 9.9 0.4 13.8 0.4c3.8-0.1 7.7-0.7 9.3-0.8" stroke="#f0e020" stroke-width="3.5"/><path d="M278 204.8c1.2 0.7 4.8 2.5 7.4 4.1c2.7 1.7 6.1 3.6 8.6 5.6c2.5 2.1 4.1 4.2 6.4 6.7c2.3 2.5 4.8 5.5 7.4 8.3c2.5 2.8 5.1 5.7 8.1 8.7c2.9 2.9 6.2 6.1 9.6 9c3.3 2.8 6.8 5.6 10.6 8.1c3.8 2.5 7.9 5 12.2 7.1c4.4 2.1 9.2 3.9 13.9 5.3c4.8 1.5 9.6 2.8 14.4 3.4c4.8 0.6 10.4 0.3 14.4 0.2c3.9-0.1 7.7-0.7 9.3-0.9" stroke="#eca018" stroke-width="3.5"/><path d="M277.3 206.1c1.3 0.7 4.8 2.6 7.4 4.2c2.6 1.6 5.9 3.6 8.3 5.6c2.4 2 3.9 4.1 6.1 6.6c2.2 2.5 4.7 5.6 7.2 8.5c2.6 2.9 5.1 5.8 8 8.9c2.9 3 6.3 6.4 9.6 9.3c3.4 3 6.9 5.9 10.7 8.5c3.9 2.7 8 5.3 12.5 7.5c4.4 2.2 9.4 4 14.2 5.5c4.9 1.5 9.9 2.8 14.8 3.4c5 0.6 10.9 0.3 15 0.1c4-0.1 7.7-0.8 9.3-1" stroke="#e89018" stroke-width="3.5"/><path d="M397.4 349.3c1.1 0.5 4.3 1.8 6.7 2.7c2.4 0.8 5.5 1.9 7.8 2.4c2.2 0.6 3.8 0.6 5.7 0.8c2 0.1 3.9 0.1 6 0.2c2.2 0.1 5 0.4 6.9 0.3c1.9-0.1 2.6-0.4 4.6-0.9c2-0.4 4.9-1.1 7.2-1.8c2.4-0.8 5.1-1.7 6.8-2.6c1.8-0.9 2-1.6 3.8-3c1.7-1.3 4.5-3.6 6.8-5.3c2.4-1.7 4.2-3.2 7.2-5.1c2.9-1.8 7-4.6 10.7-5.9c3.6-1.2 7.2-1.7 10.9-1.7c3.6 0.1 7.5 0.6 10.9 2c3.4 1.4 7.1 4.4 9.4 6.3c2.2 1.8 3.4 4 4.1 4.8" stroke="#18a070" stroke-width="3.6"/><path d="M397.1 349.6c1.1 0.5 4.1 2 6.5 3c2.3 1 5.3 2.3 7.6 2.9c2.2 0.7 3.8 0.9 5.7 1.2c2 0.3 3.9 0.4 6.1 0.6c2.1 0.3 4.8 0.7 6.8 0.7c2.1 0 3.1-0.1 5.3-0.5c2.1-0.4 5.2-1 7.7-1.7c2.5-0.7 5.4-1.6 7.4-2.6c2-0.9 2.6-1.7 4.5-3.2c1.9-1.4 4.5-3.5 6.9-5.3c2.4-1.7 4.3-3.4 7.2-5.2c2.9-1.8 6.7-4.5 10.1-5.8c3.4-1.2 6.8-1.7 10.2-1.8c3.3 0 6.9 0.3 10.1 1.5c3.1 1.2 6.7 3.9 8.9 5.6c2.2 1.7 3.5 3.8 4.3 4.5" stroke="#22b050" stroke-width="3.6"/><path d="M396.9 349.9c1 0.6 3.9 2.2 6.1 3.3c2.3 1.2 5.3 2.6 7.5 3.4c2.2 0.9 3.8 1.2 5.7 1.6c2 0.5 3.9 0.7 6.1 1.1c2.2 0.3 4.8 0.9 6.9 1c2.1 0.2 3.5 0.1 5.9-0.1c2.3-0.3 5.5-0.9 8.2-1.6c2.7-0.7 5.8-1.5 8-2.5c2.2-1 3.2-2 5.2-3.5c2-1.4 4.6-3.5 7-5.3c2.4-1.7 4.5-3.5 7.3-5.3c2.8-1.9 6.3-4.4 9.5-5.6c3.1-1.3 6.2-1.9 9.3-2c3.2-0.2 6.3 0 9.3 1c2.9 1 6.3 3.5 8.4 5c2.2 1.5 3.8 3.4 4.5 4.1" stroke="#30b850" stroke-width="3.6"/><path d="M396.6 350.2c1 0.6 3.7 2.4 5.9 3.7c2.2 1.2 5.1 2.9 7.3 3.8c2.1 1 3.8 1.5 5.7 2.1c2 0.6 4 0.9 6.1 1.4c2.2 0.5 4.8 1.1 7 1.4c2.2 0.3 3.9 0.4 6.4 0.2c2.6-0.2 5.9-0.7 8.8-1.3c2.9-0.7 6.1-1.6 8.5-2.6c2.4-1 3.8-2.2 6-3.7c2.2-1.5 4.6-3.4 7-5.2c2.4-1.8 4.7-3.7 7.4-5.6c2.7-1.8 6-4.2 8.9-5.4c2.9-1.3 5.8-1.9 8.6-2.2c2.9-0.2 5.7-0.2 8.4 0.7c2.8 0.8 5.9 2.9 8 4.2c2.1 1.4 3.9 3.2 4.7 3.8" stroke="#88cc28" stroke-width="3.6"/><path d="M396.4 350.5c0.9 0.7 3.5 2.6 5.6 4c2.1 1.4 4.9 3.2 7.1 4.3c2.1 1.2 3.8 1.8 5.8 2.5c1.9 0.7 3.9 1.2 6.1 1.8c2.2 0.6 4.6 1.4 6.9 1.8c2.4 0.4 4.4 0.7 7.1 0.6c2.7-0.1 6.2-0.6 9.3-1.2c3-0.6 6.5-1.5 9.1-2.6c2.6-1 4.4-2.3 6.7-3.9c2.3-1.5 4.7-3.4 7.1-5.2c2.4-1.8 4.9-3.9 7.5-5.7c2.6-1.8 5.6-4 8.3-5.3c2.7-1.3 5.2-2 7.8-2.3c2.6-0.4 5.1-0.5 7.6 0.2c2.5 0.6 5.4 2.4 7.5 3.6c2.1 1.1 4.1 2.8 4.9 3.4" stroke="#f0e020" stroke-width="3.6"/><path d="M396.1 350.8c0.9 0.8 3.4 2.8 5.4 4.3c2 1.5 4.7 3.6 6.9 4.8c2.1 1.3 3.8 2.1 5.8 3c2 0.8 3.9 1.4 6.1 2.1c2.2 0.8 4.6 1.6 7 2.2c2.5 0.5 4.8 1 7.7 1c2.9 0 6.5-0.5 9.8-1.1c3.2-0.6 6.8-1.4 9.7-2.5c2.8-1.1 5-2.6 7.4-4.2c2.4-1.5 4.7-3.4 7.2-5.2c2.4-1.9 5-4 7.5-5.8c2.6-1.9 5.3-3.9 7.7-5.2c2.5-1.3 4.8-2 7.1-2.5c2.3-0.4 4.4-0.7 6.7-0.2c2.3 0.4 5.1 1.9 7.1 2.9c2 1 4.2 2.6 5.1 3.1" stroke="#f4d020" stroke-width="3.6"/><path d="M395.9 351.2c0.8 0.7 3.1 2.9 5.1 4.5c2 1.7 4.6 3.9 6.6 5.4c2.1 1.4 3.9 2.3 5.9 3.3c2 1 4 1.7 6.2 2.6c2.2 0.8 4.4 1.8 7 2.5c2.5 0.6 5.2 1.2 8.3 1.3c3.1 0.1 6.8-0.2 10.2-0.8c3.5-0.6 7.3-1.4 10.3-2.6c3.1-1.1 5.6-2.8 8.2-4.4c2.6-1.6 4.8-3.3 7.2-5.2c2.5-1.9 5.2-4.1 7.7-6c2.5-1.8 4.8-3.7 7.1-5c2.2-1.3 4.2-2.1 6.3-2.6c2-0.6 3.8-0.9 5.9-0.7c2.1 0.3 4.6 1.4 6.6 2.2c1.9 0.9 4.4 2.3 5.2 2.8" stroke="#eca018" stroke-width="3.6"/><path d="M395.6 351.5c0.8 0.8 3 3.1 4.9 4.8c1.9 1.8 4.4 4.3 6.4 5.9c2.1 1.5 3.9 2.6 5.9 3.7c2 1.2 4 2 6.2 3c2.2 1 4.4 2.1 7.1 2.8c2.6 0.8 5.6 1.6 8.9 1.8c3.3 0.2 7.1-0.1 10.7-0.7c3.6-0.5 7.6-1.3 10.9-2.5c3.3-1.2 6.2-3 8.9-4.7c2.7-1.6 4.8-3.3 7.3-5.2c2.5-1.9 5.4-4.3 7.8-6.1c2.3-1.8 4.4-3.6 6.4-4.9c2-1.3 3.8-2.1 5.6-2.7c1.7-0.7 3.2-1.2 5-1.2c1.9 0.1 4.2 0.9 6.1 1.6c2 0.6 4.6 2 5.5 2.4" stroke="#22b050" stroke-width="3.6"/><path d="M395.4 351.8c0.7 0.8 2.8 3.2 4.6 5.2c1.8 1.9 4.2 4.5 6.2 6.3c2.1 1.7 3.9 2.9 5.9 4.2c2 1.2 4 2.2 6.3 3.3c2.2 1.1 4.2 2.3 7 3.2c2.8 0.9 6.1 1.9 9.6 2.2c3.4 0.2 7.4 0 11.2-0.5c3.8-0.6 8-1.4 11.5-2.6c3.5-1.2 6.8-3.2 9.6-4.9c2.9-1.7 4.8-3.2 7.4-5.2c2.5-1.9 5.5-4.4 7.8-6.2c2.3-1.9 4.1-3.5 5.9-4.8c1.8-1.2 3.3-2.1 4.7-2.9c1.5-0.7 2.6-1.4 4.3-1.6c1.6-0.1 3.7 0.4 5.6 0.9c1.9 0.5 4.7 1.7 5.7 2.1" stroke="#38b848" stroke-width="3.6"/><path d="M395.1 352.1c0.7 0.9 2.6 3.4 4.4 5.5c1.7 2 4.1 4.8 6 6.8c2 1.9 3.9 3.2 5.9 4.6c2 1.4 4.1 2.5 6.3 3.7c2.2 1.2 4.2 2.6 7.1 3.6c2.9 1 6.5 2.2 10.1 2.5c3.7 0.4 7.8 0.2 11.8-0.3c4-0.5 8.3-1.3 12-2.6c3.8-1.2 7.5-3.4 10.4-5.1c3-1.7 4.9-3.2 7.4-5.1c2.6-2 5.8-4.6 8-6.5c2.2-1.8 3.7-3.3 5.2-4.6c1.6-1.2 2.8-2.2 4-3c1.3-0.9 2-1.7 3.4-2c1.4-0.3 3.3-0.2 5.2 0.2c1.8 0.3 4.9 1.4 5.9 1.7" stroke="#f0e020" stroke-width="3.6"/><path d="M394.9 352.4c0.6 0.9 2.4 3.6 4 5.8c1.7 2.2 4 5.2 5.9 7.3c2 2 3.9 3.5 5.9 5c2 1.6 4.1 2.8 6.3 4.2c2.3 1.3 4.2 2.8 7.2 3.9c2.9 1.1 6.9 2.5 10.7 2.9c3.9 0.5 8.1 0.3 12.3-0.2c4.1-0.4 8.7-1.2 12.6-2.5c4-1.4 8-3.6 11.1-5.4c3.1-1.7 4.9-3.2 7.5-5.1c2.6-2 5.9-4.8 8-6.6c2.2-1.9 3.4-3.2 4.7-4.4c1.3-1.3 2.3-2.3 3.2-3.3c1-0.9 1.3-1.9 2.5-2.4c1.3-0.5 3-0.7 4.8-0.5c1.8 0.1 5 1.1 6 1.4" stroke="#ff8418" stroke-width="3.6"/><path d="M394.6 352.7c0.7 1 2.2 3.8 3.8 6.1c1.6 2.3 3.8 5.5 5.7 7.8c2 2.2 3.9 3.8 5.9 5.5c2 1.6 4.1 3 6.4 4.5c2.2 1.4 4 3 7.1 4.3c3.1 1.3 7.4 2.7 11.4 3.3c4 0.5 8.4 0.4 12.8 0c4.3-0.5 9-1.2 13.2-2.6c4.2-1.4 8.6-3.8 11.8-5.6c3.3-1.8 5-3.1 7.6-5.1c2.6-2 6.1-4.9 8.1-6.8c2-1.8 3-3 4-4.2c1.1-1.3 1.8-2.4 2.5-3.4c0.7-1.1 0.7-2.2 1.7-2.9c1-0.7 2.5-1.1 4.3-1.2c1.7 0 5.2 0.9 6.2 1.1" stroke="#e88a20" stroke-width="3.6"/><path d="M518.4 207.9c-0.4 1.3-1.8 5.5-2.4 7.7c-0.6 2.2-1.2 3.4-1.2 5.5c0.1 2.2 0.8 4.4 1.6 7.3c0.9 2.9 2.3 7.4 3.6 10.3c1.2 3 2.4 3.7 3.8 7.3c1.5 3.6 4.2 9.5 5 14.3c0.7 4.9 0.6 9.7-0.5 14.9c-1.1 5.1-3.1 11.2-6.1 15.9c-2.9 4.6-7.2 8.5-11.6 11.8c-4.4 3.3-9.5 6-14.9 7.9c-5.3 1.9-11.5 3.1-17.3 3.7c-5.7 0.7-11.6 0.9-17.1 0.3c-5.4-0.5-10.9-2-15.6-3.5c-4.7-1.5-8.4-3.3-12.5-5.4c-4-2.1-8.6-5.1-11.7-7.2c-3.2-2.1-5.9-4.5-7-5.4" stroke="#f02a10" stroke-width="4.3"/><path d="M514.9 207c-0.4 1.3-1.8 5.3-2.4 7.7c-0.6 2.4-1.3 4.2-1.2 6.6c0.1 2.5 0.9 5 1.8 8.1c0.9 3.1 2.3 7.5 3.5 10.5c1.3 3 2.6 4.2 4 7.7c1.4 3.4 3.8 8.6 4.4 13.1c0.7 4.5 0.6 9.1-0.4 13.8c-1 4.7-2.8 10.3-5.5 14.5c-2.7 4.3-6.6 8-10.7 11.1c-4.1 3-8.9 5.6-13.9 7.4c-5.1 1.8-11 3-16.5 3.6c-5.5 0.7-11.3 0.9-16.5 0.4c-5.3-0.4-10.5-1.8-15-3.2c-4.5-1.4-8.3-3-12.2-5c-4-2-8.4-4.8-11.5-6.8c-3.1-2.1-5.9-4.4-7.1-5.2" stroke="#f83c10" stroke-width="4.3"/><path d="M511.3 206.2c-0.4 1.2-1.7 5.1-2.3 7.6c-0.5 2.6-1.3 5-1.2 7.7c0.1 2.8 1 5.7 1.9 8.9c0.9 3.3 2.3 7.6 3.6 10.7c1.3 3.1 2.7 4.7 4 8.1c1.3 3.3 3.4 7.7 4 11.9c0.6 4.1 0.5 8.4-0.4 12.8c-0.9 4.3-2.5 9.2-5 13.1c-2.5 3.9-6 7.3-9.8 10.2c-3.8 2.8-8.1 5.3-12.9 7c-4.8 1.8-10.4 2.9-15.7 3.5c-5.2 0.7-10.8 0.9-15.9 0.5c-5-0.4-9.9-1.6-14.3-2.9c-4.4-1.2-8.1-2.8-12-4.7c-3.8-1.8-8.1-4.5-11.2-6.4c-3-1.9-6-4.2-7.2-5" stroke="#ff6410" stroke-width="4.3"/><path d="M507.8 205.3c-0.4 1.3-1.6 4.9-2.2 7.7c-0.6 2.7-1.5 5.6-1.3 8.7c0.1 3.1 1.1 6.3 2.1 9.8c0.9 3.4 2.3 7.5 3.6 10.7c1.3 3.3 2.8 5.3 4 8.5c1.3 3.2 3.1 7 3.6 10.7c0.5 3.8 0.3 7.9-0.5 11.8c-0.8 4-2.1 8.3-4.4 11.8c-2.2 3.5-5.4 6.7-8.8 9.3c-3.5 2.7-7.5 5-12 6.6c-4.5 1.7-9.8 2.8-14.8 3.4c-5.1 0.7-10.5 1-15.3 0.6c-4.8-0.3-9.4-1.4-13.7-2.6c-4.2-1.1-7.9-2.6-11.7-4.3c-3.8-1.7-7.9-4.2-10.9-6c-3.1-1.8-6.1-4.1-7.3-4.9" stroke="#ff6410" stroke-width="4.3"/><path d="M504.3 204.4c-0.4 1.3-1.6 4.8-2.2 7.7c-0.6 2.9-1.5 6.4-1.3 9.8c0.1 3.4 1.2 7 2.2 10.6c1 3.6 2.4 7.6 3.7 10.9c1.3 3.3 2.9 5.9 4.1 8.9c1.2 3.1 2.6 6.1 3.1 9.5c0.4 3.4 0.2 7.2-0.5 10.8c-0.7 3.5-1.9 7.3-3.8 10.4c-2 3.1-4.8 6-8 8.4c-3.1 2.5-6.8 4.7-11 6.2c-4.1 1.6-9.2 2.7-14 3.3c-4.8 0.7-10.1 1-14.7 0.7c-4.6-0.2-8.9-1.2-12.9-2.2c-4.1-1.1-7.8-2.5-11.5-4.1c-3.7-1.6-7.7-3.8-10.7-5.6c-3-1.7-6.2-3.9-7.4-4.7" stroke="#ff6410" stroke-width="4.3"/><path d="M500.7 203.6c-0.3 1.2-1.5 4.5-2.1 7.6c-0.5 3.1-1.5 7.2-1.4 10.9c0.2 3.7 1.5 7.7 2.5 11.4c1 3.8 2.3 7.7 3.6 11.1c1.3 3.4 3.1 6.4 4.2 9.3c1.1 3 2.3 5.3 2.6 8.3c0.4 3 0.2 6.6-0.4 9.7c-0.6 3.2-1.6 6.3-3.3 9.1c-1.7 2.8-4.2 5.3-7 7.6c-2.9 2.2-6.2 4.3-10 5.8c-3.9 1.5-8.7 2.5-13.3 3.2c-4.5 0.6-9.6 0.9-14 0.8c-4.4-0.2-8.4-1.1-12.3-2c-3.9-1-7.7-2.2-11.3-3.7c-3.6-1.5-7.3-3.6-10.3-5.2c-3-1.6-6.3-3.8-7.6-4.5" stroke="#ff8418" stroke-width="4.3"/><path d="M497.2 202.7c-0.3 1.3-1.4 4.3-2 7.6c-0.6 3.3-1.7 7.9-1.5 12c0.2 4 1.6 8.3 2.6 12.2c1.1 3.9 2.4 7.8 3.7 11.3c1.3 3.5 3.2 6.9 4.2 9.7c1.1 2.8 1.9 4.4 2.2 7.1c0.3 2.6 0.1 5.9-0.4 8.7c-0.5 2.7-1.3 5.3-2.7 7.7c-1.5 2.4-3.6 4.7-6.2 6.7c-2.5 2-5.4 4-9 5.4c-3.6 1.4-8.1 2.4-12.4 3.1c-4.3 0.6-9.3 1-13.5 0.9c-4.2-0.2-7.8-0.9-11.6-1.7c-3.8-0.8-7.5-2-11-3.4c-3.5-1.3-7.1-3.2-10.1-4.7c-2.9-1.6-6.4-3.7-7.7-4.4" stroke="#eca018" stroke-width="4.3"/><path d="M493.7 201.8c-0.4 1.3-1.4 4.2-2 7.6c-0.6 3.4-1.7 8.7-1.5 13.1c0.2 4.3 1.7 9 2.8 13.1c1 4 2.4 7.7 3.7 11.3c1.3 3.6 3.3 7.5 4.3 10.2c0.9 2.7 1.5 3.6 1.7 5.8c0.2 2.3 0 5.4-0.4 7.7c-0.5 2.4-1 4.3-2.2 6.4c-1.2 2-3 4-5.2 5.8c-2.2 1.8-4.8 3.7-8.1 5c-3.3 1.3-7.5 2.3-11.6 3c-4 0.6-8.9 1-12.8 1c-4-0.1-7.3-0.6-11-1.4c-3.6-0.7-7.3-1.8-10.7-3c-3.5-1.3-6.9-2.9-9.8-4.4c-3-1.4-6.5-3.5-7.8-4.2" stroke="#b89a18" stroke-width="4.3"/><path d="M490.1 201c-0.3 1.2-1.3 3.9-1.9 7.5c-0.5 3.6-1.7 9.5-1.5 14.2c0.2 4.6 1.8 9.6 2.9 13.9c1.1 4.2 2.4 7.8 3.8 11.5c1.3 3.7 3.4 8.1 4.3 10.6c0.9 2.5 1.1 2.7 1.3 4.6c0.1 1.9-0.1 4.7-0.5 6.7c-0.3 1.9-0.6 3.3-1.6 5c-0.9 1.6-2.4 3.4-4.3 4.9c-1.9 1.6-4.1 3.4-7.1 4.6c-2.9 1.2-6.9 2.2-10.7 2.9c-3.9 0.6-8.5 1-12.3 1.1c-3.7 0-6.8-0.4-10.2-1.1c-3.5-0.6-7.2-1.6-10.6-2.7c-3.3-1.1-6.6-2.6-9.5-3.9c-2.9-1.3-6.6-3.4-7.9-4.1" stroke="#8a6c10" stroke-width="4.3"/><path d="M486.6 200.1c-0.3 1.2-1.3 3.7-1.8 7.5c-0.6 3.8-1.9 10.3-1.6 15.3c0.2 5 1.9 10.3 3.1 14.7c1.1 4.4 2.4 7.9 3.7 11.7c1.4 3.7 3.5 8.6 4.4 11c0.9 2.4 0.8 1.9 0.8 3.4c0.1 1.5-0.1 4.1-0.4 5.6c-0.2 1.6-0.3 2.4-1 3.6c-0.8 1.3-1.8 2.8-3.4 4.2c-1.6 1.4-3.5 3-6.1 4.1c-2.7 1.2-6.4 2.1-10 2.8c-3.6 0.6-8.1 1.1-11.6 1.2c-3.6 0-6.3-0.2-9.6-0.7c-3.3-0.6-7.1-1.5-10.3-2.4c-3.3-1-6.4-2.3-9.3-3.5c-2.8-1.3-6.6-3.3-8-3.9" stroke="#a07c14" stroke-width="4.3"/><path d="M353.5 239.7c1.6 0.7 6.2 3.2 9.2 4.4c3 1.2 6.2 2.4 8.9 2.8c2.8 0.4 4.8 0 7.8-0.5c3-0.4 6.9-1.4 10.1-2.3c3.3-0.9 6-2 9.2-3.2c3.1-1.3 6.4-2.9 9.5-4.3c3-1.4 5.8-2.8 8.7-4.3c2.9-1.4 5.6-2.9 8.8-4.4c3.1-1.6 7.1-3.6 10.2-5.1c3-1.5 6.7-3.3 8.1-4" stroke="#18a8a0" stroke-width="3.6"/><path d="M352.4 241.8c1.5 0.8 5.8 3.3 9 4.6c3.1 1.4 6.6 3 9.7 3.6c3.1 0.5 5.6 0 8.8-0.5c3.2-0.5 7.1-1.5 10.5-2.4c3.3-1 6.3-2.1 9.5-3.4c3.1-1.3 6.5-2.9 9.6-4.3c3-1.4 5.9-2.8 8.8-4.3c3-1.5 5.7-2.9 8.8-4.5c3.2-1.7 7.1-3.7 10.2-5.2c3-1.6 6.7-3.5 8-4.2" stroke="#22b050" stroke-width="3.6"/><path d="M351.2 243.9c1.4 0.8 5.6 3.4 8.8 4.9c3.2 1.5 7.1 3.6 10.5 4.2c3.5 0.6 6.5 0 10-0.4c3.4-0.5 7.3-1.6 10.7-2.6c3.4-1 6.6-2.1 9.9-3.5c3.2-1.3 6.5-2.9 9.6-4.3c3.1-1.4 6.1-2.8 9-4.3c3-1.5 5.7-3 8.9-4.6c3.1-1.7 7.1-3.8 10.1-5.4c3-1.6 6.6-3.6 8-4.3" stroke="#88cc28" stroke-width="3.6"/><path d="M350 246c1.4 0.9 5.3 3.5 8.6 5.2c3.4 1.7 7.7 4.1 11.4 4.8c3.7 0.7 7.3 0.1 11-0.4c3.7-0.5 7.5-1.6 11-2.6c3.5-1 6.9-2.3 10.2-3.6c3.4-1.4 6.7-2.9 9.8-4.4c3.1-1.5 6.1-2.9 9.1-4.4c3-1.5 5.7-2.9 8.9-4.6c3.2-1.7 7.1-3.9 10.1-5.6c3-1.6 6.6-3.7 7.9-4.4" stroke="#f0e020" stroke-width="3.6"/><path d="M348.8 248.1c1.4 0.9 5 3.6 8.5 5.5c3.4 1.8 8.1 4.6 12.2 5.4c4 0.9 8.1 0.2 12-0.3c3.9-0.5 7.7-1.7 11.3-2.7c3.7-1.1 7.2-2.4 10.6-3.8c3.5-1.4 6.7-2.9 9.9-4.4c3.2-1.5 6.2-2.9 9.2-4.4c3.1-1.5 5.8-3 8.9-4.7c3.2-1.7 7.2-4 10.1-5.7c3-1.7 6.5-3.8 7.8-4.6" stroke="#eca018" stroke-width="3.6"/><path d="M347.6 250.2c1.4 1 4.8 3.8 8.3 5.7c3.5 2 8.6 5.2 13 6.1c4.4 1 9.1 0.3 13.2-0.2c4.1-0.6 7.8-1.8 11.5-2.9c3.8-1.1 7.6-2.5 11-3.9c3.5-1.4 6.7-2.9 9.9-4.4c3.3-1.5 6.4-2.9 9.4-4.5c3.1-1.5 5.8-2.9 9-4.7c3.2-1.7 7.1-4.1 10.1-5.9c2.9-1.8 6.4-3.9 7.7-4.7" stroke="#f0e020" stroke-width="3.6"/><path d="M346.5 252.3c1.3 1 4.4 3.9 8 6c3.7 2.1 9.2 5.7 13.9 6.8c4.6 1.1 9.9 0.3 14.2-0.3c4.4-0.5 8-1.8 11.9-2.9c3.8-1.2 7.8-2.6 11.3-4c3.6-1.5 6.8-3 10-4.5c3.3-1.5 6.4-3 9.5-4.5c3.1-1.5 5.8-2.9 9-4.8c3.2-1.8 7.1-4.2 10.1-6.1c2.9-1.8 6.3-4 7.6-4.8" stroke="#22b050" stroke-width="3.6"/><linearGradient id="cg" x1="392" x2="520" y1="0" y2="0" gradientUnits="userSpaceOnUse"><stop offset="0" stop-color="#e8801a"/><stop offset=".35" stop-color="#c87c16"/><stop offset="1" stop-color="#a06c14"/></linearGradient><path d="M386 262L398 248 412 250 428 258 445 263 467 260 487 252 498 262 512 280 520 297 500 302 470 312 450 319 425 318 402 305 389 287 385 275z" fill="url(#cg)" stroke="none"/><path d="M392.3 263.1c0.9-0.7 2.9-2.9 5.4-4.5c2.5-1.5 6.2-4.1 9.6-4.9c3.3-0.7 7.1-0.1 10.5 0.4c3.4 0.4 6.4 1.3 9.7 2.3c3.4 1 7.1 2.5 10.3 3.5c3.3 1.1 6 2.3 9.2 2.9c3.2 0.6 6.8 0.8 10.1 0.9c3.4 0.1 6.8 0.1 10-0.4c3.3-0.6 6-1.9 9.5-2.8c3.4-1 7.7-2.9 11.2-2.8c3.5 0.1 7.4 2.2 9.8 3.2c2.3 1.1 3.7 2.7 4.4 3.3" stroke="#7a5a12" stroke-width="3.4"/><path d="M393.2 264.6c0.9-0.7 3.2-2.8 5.6-4.1c2.4-1.4 5.8-3.5 8.8-4.1c3.1-0.6 6.4 0 9.6 0.5c3.2 0.4 6.3 1.3 9.6 2.3c3.2 1 6.7 2.4 10 3.5c3.3 1 6.3 2.3 9.7 2.9c3.4 0.7 7.1 0.9 10.6 1c3.5 0.1 7 0.1 10.5-0.5c3.4-0.6 6.6-2 10-3c3.4-1 7.2-2.7 10.3-2.8c3.1 0 6.3 1.8 8.5 2.7c2.2 1 3.8 2.6 4.6 3.1" stroke="#8a6c10" stroke-width="3.4"/><path d="M394 266c1-0.6 3.5-2.5 5.9-3.7c2.3-1.2 5.3-2.9 8.1-3.3c2.8-0.4 5.6 0.2 8.6 0.7c3 0.5 6.2 1.3 9.4 2.3c3.2 1 6.4 2.3 9.8 3.4c3.3 1.1 6.7 2.4 10.2 3.1c3.5 0.7 7.3 0.9 11 1c3.7 0.1 7.4 0.1 11-0.5c3.6-0.6 7.3-2.3 10.6-3.3c3.4-1 6.6-2.6 9.4-2.7c2.8-0.1 5.2 1.3 7.2 2.1c2.1 0.9 4 2.4 4.8 2.9" stroke="#b89a18" stroke-width="3.4"/><path d="M394.8 267.4c1.1-0.5 3.9-2.3 6.2-3.2c2.2-1 4.9-2.3 7.4-2.6c2.5-0.3 4.8 0.3 7.7 0.8c2.8 0.6 6 1.5 9.1 2.4c3.1 1 6.1 2.2 9.5 3.3c3.4 1.1 7.1 2.5 10.8 3.3c3.7 0.7 7.6 1 11.4 1.1c3.9 0 7.7 0.1 11.5-0.6c3.8-0.7 8-2.5 11.2-3.6c3.3-1 6.1-2.5 8.5-2.6c2.4-0.2 4.2 0.8 6 1.5c1.8 0.7 4.1 2.3 4.9 2.7" stroke="#eca018" stroke-width="3.4"/><path d="M395.7 268.9c1-0.5 4.2-2.1 6.4-2.9c2.1-0.8 4.4-1.6 6.6-1.7c2.3-0.2 4.2 0.4 6.8 0.9c2.6 0.6 5.9 1.5 9 2.4c3 0.9 5.8 2.2 9.2 3.3c3.4 1.1 7.4 2.6 11.3 3.3c3.8 0.8 7.9 1.1 11.9 1.2c3.9 0.1 8 0.1 12-0.7c3.9-0.7 8.5-2.7 11.8-3.7c3.2-1.1 5.4-2.4 7.5-2.7c2-0.3 3.1 0.4 4.7 1c1.7 0.6 4.2 2.1 5.1 2.5" stroke="#e09418" stroke-width="3.4"/><path d="M410.5 285.9c0.2-1 0.1-3.4 1.1-5.7c1.1-2.3 2.8-6.1 5.1-8.2c2.4-2.1 5.8-3.4 9-4.4c3.2-1.1 6.7-1.7 10.1-1.9c3.4-0.3 6.8-0.1 10.2 0.3c3.4 0.4 6.6 1.1 10.1 1.9c3.6 0.8 7.6 2 11.3 3.1c3.8 1.1 7.3 2.4 11.2 3.5c3.8 1.2 7.9 2.2 11.9 3.4c4 1.1 8 2.3 11.9 3.6c3.9 1.3 8.1 3.1 11.4 4.4c3.2 1.4 6.8 3 8.2 3.6" stroke="#f02a10" stroke-width="4.3"/><path d="M411.1 286.3c0.3-0.8 0.7-3.1 1.9-5.1c1.1-2 2.8-5.1 5-6.8c2.3-1.7 5.4-2.8 8.4-3.6c2.9-0.9 6.3-1.4 9.5-1.6c3.1-0.2 6.3 0.1 9.6 0.5c3.2 0.4 6.3 1 9.8 1.8c3.4 0.9 7.3 2 11 3.1c3.7 1.1 7.4 2.4 11.2 3.5c3.9 1.1 8.1 2.2 12 3.3c4 1.2 8.1 2.2 11.9 3.5c3.9 1.2 8.2 2.8 11.5 4c3.3 1.2 6.9 2.6 8.3 3.2" stroke="#f84010" stroke-width="4.3"/><path d="M411.7 286.8c0.4-0.8 1.4-2.9 2.6-4.6c1.3-1.6 2.9-4 5-5.4c2.2-1.4 5-2.2 7.7-2.9c2.8-0.6 6-1.1 9-1.2c2.9-0.1 5.8 0.2 8.9 0.6c3.1 0.4 6.1 1.1 9.5 1.9c3.4 0.8 7.1 1.9 10.8 3c3.7 1.1 7.4 2.4 11.3 3.5c3.9 1.1 8.1 2.2 12.1 3.3c4 1.1 8 2.1 11.9 3.3c3.9 1.2 8.1 2.5 11.5 3.6c3.3 1.1 7 2.3 8.4 2.8" stroke="#ff6410" stroke-width="4.3"/><path d="M412.3 287.2c0.6-0.6 2-2.6 3.4-4c1.4-1.3 3-3 5-4c2-1 4.4-1.6 7-2.1c2.6-0.5 5.6-0.8 8.3-0.8c2.8-0.1 5.4 0.2 8.3 0.6c3 0.5 6 1.1 9.3 1.9c3.3 0.8 6.8 1.9 10.5 3c3.6 1.1 7.5 2.4 11.4 3.5c3.9 1.1 8.1 2.2 12.2 3.3c4 1 7.9 2 11.8 3.1c3.9 1.1 8.2 2.3 11.5 3.2c3.4 0.9 7.2 2 8.6 2.4" stroke="#ff6410" stroke-width="4.3"/><path d="M412.9 287.7c0.7-0.6 2.6-2.5 4.1-3.5c1.5-1 3.1-1.9 5-2.6c1.9-0.7 4-1 6.4-1.3c2.4-0.3 5.2-0.5 7.7-0.5c2.6 0.1 4.9 0.3 7.7 0.8c2.7 0.4 5.7 1.1 8.9 1.9c3.2 0.8 6.6 1.8 10.2 2.9c3.7 1.1 7.6 2.4 11.6 3.5c3.9 1.1 8.2 2.2 12.2 3.2c4 1.1 7.9 2 11.9 3c3.9 1 8.2 2 11.5 2.8c3.4 0.8 7.3 1.7 8.7 2" stroke="#ff8418" stroke-width="4.3"/><path d="M413.5 288.1c0.8-0.5 3.2-2.2 4.9-2.9c1.6-0.6 3.1-0.9 4.9-1.2c1.8-0.3 3.6-0.4 5.8-0.5c2.1-0.1 4.8-0.3 7.1-0.2c2.4 0.2 4.4 0.5 7 0.9c2.6 0.5 5.6 1.1 8.7 1.9c3.1 0.8 6.3 1.8 9.9 2.9c3.6 1 7.6 2.4 11.6 3.5c4 1.1 8.3 2.2 12.4 3.2c4 1 7.9 1.9 11.8 2.8c3.9 0.9 8.2 1.7 11.6 2.4c3.4 0.7 7.4 1.4 8.8 1.6" stroke="#eca018" stroke-width="4.3"/><path d="M408.5 296.5c1-0.8 3.3-3 6-4.7c2.7-1.7 6.6-4.2 10.1-5.5c3.5-1.3 7-2 10.9-2.5c3.9-0.4 8.3-0.5 12.5 0.1c4.3 0.5 9.1 2.2 13 3.4c4 1.3 7.1 2.7 10.7 4c3.7 1.3 7.4 2.5 11 3.8c3.6 1.3 7.2 2.6 10.4 4c3.2 1.5 6.3 3.3 8.8 4.7c2.5 1.4 5.1 3.1 6.1 3.7" stroke="#eca018" stroke-width="4.3"/><path d="M409 297.6c1.1-0.6 3.6-2.6 6.3-4.1c2.6-1.4 6.4-3.5 9.8-4.6c3.3-1.1 6.7-1.7 10.5-2c3.7-0.2 7.7-0.3 11.7 0.3c4.1 0.7 8.5 2.3 12.4 3.5c3.8 1.3 7.1 2.9 10.8 4.2c3.7 1.3 7.5 2.5 11.1 3.7c3.6 1.3 7.2 2.5 10.5 3.8c3.2 1.3 6.4 2.9 9 4.1c2.5 1.2 5.2 2.6 6.3 3.1" stroke="#f0e020" stroke-width="4.3"/><path d="M409.5 298.8c1.1-0.6 3.8-2.3 6.5-3.5c2.7-1.3 6.3-3 9.5-3.9c3.3-0.8 6.6-1.2 10.1-1.4c3.5-0.1 7.3-0.1 11.1 0.6c3.8 0.7 7.8 2.2 11.6 3.5c3.7 1.4 7.2 3 10.9 4.3c3.8 1.4 7.7 2.5 11.3 3.8c3.6 1.2 7.2 2.3 10.5 3.5c3.3 1.2 6.6 2.5 9.2 3.5c2.6 1 5.4 2.2 6.5 2.6" stroke="#e0d020" stroke-width="4.3"/><path d="M410 300c1.1-0.5 4.1-2 6.8-3c2.6-1 6.1-2.4 9.2-3c3.1-0.6 6.3-0.9 9.6-0.9c3.4 0 6.9 0.2 10.4 0.9c3.5 0.7 7.2 2.2 10.9 3.6c3.6 1.3 7.4 3 11.1 4.4c3.8 1.4 7.7 2.5 11.4 3.7c3.6 1.2 7.3 2.3 10.6 3.3c3.3 1 6.7 2.1 9.4 2.9c2.6 0.9 5.5 1.8 6.6 2.1" stroke="#c0b01c" stroke-width="4.3"/><path d="M410.5 301.2c1.2-0.4 4.3-1.7 7-2.5c2.7-0.7 5.9-1.7 9-2.1c3-0.5 6-0.5 9.2-0.4c3.1 0.2 6.3 0.4 9.6 1.2c3.3 0.8 6.6 2.2 10.2 3.6c3.6 1.3 7.5 3.2 11.3 4.6c3.7 1.3 7.8 2.5 11.5 3.6c3.7 1.1 7.3 2.2 10.7 3.1c3.3 0.9 6.8 1.7 9.5 2.4c2.8 0.6 5.7 1.2 6.8 1.5" stroke="#b89a18" stroke-width="4.3"/><path d="M411 302.4c1.2-0.4 4.6-1.4 7.2-1.9c2.7-0.6 5.8-1.2 8.7-1.4c3-0.2 5.8-0.1 8.8 0.2c2.9 0.3 5.9 0.6 9 1.5c3 0.8 5.9 2.2 9.4 3.6c3.5 1.4 7.6 3.3 11.4 4.7c3.8 1.4 7.9 2.6 11.7 3.7c3.7 1 7.3 2 10.7 2.8c3.5 0.7 7 1.3 9.8 1.8c2.8 0.4 5.8 0.8 6.9 1" stroke="#88cc28" stroke-width="4.3"/><path d="M411.5 303.5c1.2-0.2 4.8-1 7.5-1.3c2.6-0.3 5.6-0.5 8.4-0.5c2.8 0 5.6 0.3 8.3 0.7c2.8 0.4 5.5 0.8 8.3 1.7c2.8 0.9 5.3 2.3 8.7 3.7c3.4 1.4 7.7 3.5 11.6 4.9c3.8 1.4 8 2.6 11.7 3.6c3.8 1 7.4 1.9 10.9 2.6c3.5 0.6 7.1 0.9 9.9 1.2c2.9 0.3 6 0.4 7.2 0.4" stroke="#22b050" stroke-width="4.3"/><path d="M285.4 141.6c1.6 0.5 5.6 1.7 9.7 3.3c4.2 1.7 10.7 4.1 15.3 6.5c4.6 2.4 8.6 5.3 12.3 8.1c3.7 2.7 6.7 5.3 10 8.4c3.2 3.1 6.7 7.2 9.4 10.2c2.7 2.9 4.4 5.3 6.6 7.7c2.3 2.5 4.7 5 6.9 7.1c2.2 2.2 4.1 4 6.4 6c2.3 1.9 5.2 4.1 7.3 5.7c2.1 1.5 3.4 2.6 5.6 3.5c2.1 1 4.5 1.6 7.2 2.3c2.7 0.6 7.4 1.4 8.9 1.7" stroke="#ff5cc0" stroke-width="3.7"/><path d="M284.4 144.7c1.6 0.6 5.6 1.8 9.7 3.4c4.1 1.5 10.3 3.8 14.8 6.1c4.4 2.4 8.3 5.2 11.9 7.8c3.6 2.7 6.6 5.3 9.8 8.3c3.1 3 6.5 6.9 9.2 9.8c2.7 3 4.5 5.4 6.8 7.9c2.3 2.5 4.8 5 7 7.1c2.3 2.2 4.4 4.1 6.7 6.1c2.4 1.9 5.2 4.1 7.5 5.7c2.3 1.6 3.8 2.8 6.1 3.8c2.3 1 5 1.6 7.8 2.3c2.7 0.6 7.4 1.4 8.9 1.7" stroke="#58ccf2" stroke-width="3.7"/><path d="M283.3 147.8c1.6 0.6 5.7 1.8 9.8 3.4c4 1.5 10 3.7 14.3 5.9c4.3 2.3 8 4.9 11.5 7.5c3.5 2.6 6.5 5.1 9.6 8.1c3.1 2.9 6.4 6.6 9 9.5c2.7 2.9 4.7 5.5 7 8c2.4 2.5 4.8 4.9 7.2 7.1c2.3 2.3 4.5 4.2 6.9 6.2c2.4 2 5.3 4.2 7.7 5.8c2.4 1.6 4.1 2.9 6.6 3.9c2.5 1.1 5.5 1.7 8.3 2.4c2.9 0.7 7.5 1.4 8.9 1.6" stroke="#20b8e8" stroke-width="3.7"/><path d="M282.2 151c1.7 0.5 5.9 1.8 9.8 3.3c4 1.5 9.8 3.5 13.9 5.7c4.2 2.2 7.7 4.7 11.1 7.2c3.4 2.5 6.3 5 9.4 7.8c3 2.9 6.2 6.4 8.9 9.3c2.6 2.9 4.7 5.5 7.1 8c2.4 2.6 4.9 5 7.3 7.2c2.4 2.3 4.7 4.3 7.2 6.3c2.5 2 5.4 4.2 7.9 5.9c2.5 1.6 4.4 3 7.1 4.1c2.7 1.1 6 1.7 8.9 2.4c3 0.7 7.4 1.3 8.9 1.6" stroke="#22a8e4" stroke-width="3.7"/><path d="M281.2 154.1c1.6 0.6 5.9 1.8 9.8 3.3c3.9 1.4 9.4 3.4 13.4 5.5c4.1 2 7.4 4.4 10.7 6.9c3.3 2.4 6.2 4.8 9.2 7.6c3 2.8 6 6.2 8.7 9c2.6 2.9 4.8 5.5 7.3 8.1c2.5 2.6 5 5 7.5 7.2c2.4 2.3 4.8 4.3 7.4 6.4c2.5 2 5.4 4.2 8.1 5.9c2.6 1.7 4.8 3.2 7.6 4.3c2.9 1.2 6.4 1.9 9.5 2.5c3.1 0.7 7.4 1.3 8.9 1.5" stroke="#1c90dc" stroke-width="3.7"/><path d="M280.1 157.2c1.7 0.6 6 1.9 9.8 3.3c3.9 1.4 9.2 3.3 13.1 5.2c3.8 2 7 4.3 10.2 6.6c3.2 2.4 6.1 4.8 9 7.5c2.9 2.7 5.8 5.9 8.5 8.7c2.7 2.8 5 5.6 7.5 8.2c2.5 2.5 5.1 5 7.6 7.2c2.5 2.3 5 4.4 7.6 6.5c2.7 2.1 5.6 4.2 8.4 6c2.7 1.7 5.1 3.3 8.2 4.5c3 1.2 6.8 1.9 10 2.5c3.1 0.7 7.4 1.3 8.9 1.5" stroke="#1a62cc" stroke-width="3.7"/><path d="M279.1 160.4c1.6 0.5 6.1 1.8 9.8 3.2c3.7 1.4 8.9 3.1 12.6 5c3.7 1.9 6.7 4 9.8 6.3c3.1 2.2 5.9 4.6 8.8 7.2c2.9 2.6 5.6 5.7 8.3 8.5c2.7 2.8 5.1 5.6 7.7 8.2c2.6 2.6 5.1 5 7.7 7.3c2.6 2.4 5.2 4.5 7.9 6.6c2.8 2.1 5.7 4.3 8.6 6.1c2.8 1.8 5.5 3.4 8.7 4.6c3.2 1.3 7.3 2 10.5 2.7c3.3 0.6 7.4 1.1 8.9 1.3" stroke="#162c98" stroke-width="3.7"/><path d="M278 163.5c1.6 0.5 6.2 1.9 9.9 3.2c3.6 1.3 8.5 3 12.1 4.8c3.6 1.8 6.4 3.8 9.4 6c3 2.1 5.8 4.5 8.6 7c2.8 2.5 5.5 5.4 8.1 8.2c2.7 2.7 5.3 5.7 7.9 8.3c2.6 2.6 5.2 5 7.9 7.3c2.6 2.4 5.3 4.6 8.1 6.7c2.8 2.1 5.8 4.3 8.8 6.1c2.9 1.9 5.8 3.6 9.2 4.9c3.4 1.3 7.8 2 11.1 2.7c3.4 0.7 7.4 1.1 8.9 1.3" stroke="#3a1a98" stroke-width="3.7"/><path d="M276.9 166.6c1.7 0.6 6.3 1.9 9.9 3.2c3.6 1.3 8.3 2.9 11.7 4.6c3.5 1.7 6.1 3.6 9 5.6c2.9 2.1 5.7 4.4 8.4 6.9c2.7 2.4 5.3 5.2 7.9 7.9c2.7 2.7 5.4 5.7 8.1 8.4c2.7 2.6 5.3 5 8 7.3c2.7 2.4 5.5 4.6 8.4 6.8c2.9 2.2 5.8 4.3 8.9 6.2c3.2 1.9 6.2 3.7 9.8 5.1c3.6 1.3 8.3 2 11.7 2.7c3.4 0.7 7.4 1 8.9 1.3" stroke="#6a22a8" stroke-width="3.7"/><path d="M275.9 169.8c1.6 0.5 6.4 1.9 9.9 3.1c3.5 1.2 7.9 2.7 11.2 4.4c3.3 1.6 5.8 3.3 8.6 5.3c2.8 2 5.5 4.3 8.2 6.6c2.7 2.4 5.1 5 7.8 7.7c2.6 2.7 5.5 5.8 8.2 8.4c2.7 2.7 5.4 5.1 8.2 7.4c2.7 2.4 5.6 4.7 8.6 6.9c2.9 2.2 5.9 4.3 9.1 6.3c3.3 1.9 6.6 3.9 10.3 5.2c3.8 1.3 8.8 2.2 12.3 2.8c3.5 0.7 7.4 1 8.8 1.2" stroke="#5a28b0" stroke-width="3.7"/><path d="M274.8 172.9c1.7 0.5 6.5 1.9 10 3.1c3.4 1.2 7.6 2.6 10.8 4.1c3.1 1.6 5.4 3.2 8.1 5.1c2.6 1.9 5.4 4.1 8 6.4c2.6 2.3 4.9 4.7 7.6 7.4c2.6 2.6 5.6 5.8 8.4 8.5c2.8 2.7 5.4 5 8.3 7.4c2.8 2.4 5.8 4.8 8.8 7c3.1 2.2 6.1 4.4 9.4 6.3c3.4 2 6.9 4.1 10.9 5.5c3.9 1.3 9.1 2.2 12.8 2.8c3.6 0.7 7.3 1 8.8 1.2" stroke="#1a62cc" stroke-width="3.7"/><path d="M273.8 176c1.6 0.5 6.5 1.9 9.9 3.1c3.4 1.2 7.4 2.5 10.4 3.9c3 1.4 5.1 2.9 7.6 4.8c2.6 1.8 5.4 4 7.9 6.2c2.6 2.2 4.7 4.4 7.4 7.1c2.7 2.6 5.7 5.9 8.6 8.6c2.8 2.6 5.5 5 8.4 7.4c3 2.5 6 4.9 9.1 7.1c3.1 2.3 6.1 4.4 9.6 6.4c3.5 2 7.3 4.2 11.4 5.6c4.1 1.4 9.6 2.3 13.3 3c3.7 0.6 7.4 0.8 8.9 1" stroke="#1c78d4" stroke-width="3.7"/><path d="M272.7 179.2c1.7 0.5 6.7 1.9 10 3c3.3 1.1 7 2.3 9.9 3.7c2.9 1.3 4.8 2.7 7.2 4.4c2.5 1.8 5.2 3.9 7.7 6c2.5 2.2 4.6 4.3 7.2 6.8c2.7 2.6 5.9 6 8.8 8.7c2.9 2.7 5.6 5.1 8.6 7.5c3 2.5 6.1 5 9.3 7.2c3.2 2.3 6.2 4.4 9.8 6.5c3.6 2 7.6 4.3 11.9 5.8c4.3 1.4 10.1 2.3 13.9 3c3.8 0.7 7.4 0.8 8.9 1" stroke="#1c90dc" stroke-width="3.7"/><path d="M271.6 182.3c1.7 0.5 6.8 1.9 10.1 3c3.2 1.1 6.7 2.2 9.4 3.5c2.7 1.2 4.4 2.4 6.8 4.1c2.4 1.7 5.1 3.7 7.5 5.8c2.4 2.1 4.4 4 7 6.5c2.7 2.6 6 6.1 9 8.8c2.9 2.7 5.7 5.1 8.7 7.5c3.1 2.5 6.3 5 9.6 7.3c3.3 2.3 6.3 4.4 10 6.5c3.7 2.1 7.9 4.5 12.4 6c4.5 1.5 10.6 2.4 14.5 3.1c3.9 0.7 7.4 0.8 8.8 0.9" stroke="#1c84d0" stroke-width="3.7"/><path d="M270.6 185.4c1.7 0.5 6.9 2 10 3c3.2 1.1 6.5 2.1 9 3.2c2.6 1.2 4.1 2.3 6.4 3.9c2.3 1.5 5 3.6 7.3 5.6c2.4 1.9 4.2 3.7 6.9 6.2c2.6 2.5 6.1 6.1 9.1 8.9c3 2.7 5.7 5 8.8 7.5c3.2 2.5 6.5 5.1 9.9 7.4c3.3 2.4 6.3 4.5 10.2 6.6c3.9 2.1 8.3 4.6 12.9 6.2c4.7 1.5 11.1 2.5 15.1 3.1c3.9 0.7 7.3 0.7 8.8 0.9" stroke="#1660b8" stroke-width="3.7"/><path d="M350.9 202.6c0.9 0.3 3.5 1.4 5.2 1.8c1.8 0.5 3.2 0.3 5.1 0.8c1.8 0.5 4.1 1.5 6 2.2c1.9 0.7 3.1 1 5.4 1.8c2.3 0.7 5.7 1.9 8.3 2.6c2.5 0.7 4.4 1.4 7 1.8c2.5 0.3 5.3 0.5 8.3 0.3c3-0.1 6.6-0.5 9.6-1.2c3-0.8 5.3-2 8.3-3.5c3-1.5 6.8-3.8 9.5-5.4c2.8-1.5 4.3-2.6 7.1-4.1c2.8-1.5 6.3-3.8 9.7-4.8c3.4-1 7.1-1.6 10.7-1c3.6 0.6 8.1 2.2 10.9 4.5c2.8 2.3 4.8 6.2 6.1 9.3c1.3 3.2 1.7 6.3 1.8 9.5c0.2 3.2-0.3 6.5-0.9 9.5c-0.6 3-1.5 5.7-2.6 8.6c-1.1 2.8-2.6 5.8-4.1 8.4c-1.5 2.6-2.9 5-4.7 7c-1.8 2.1-4.2 4-5.8 5.4c-1.7 1.3-3.5 2.2-4.2 2.7" stroke="#20b8e8" stroke-width="4.1"/><path d="M349.3 204.3c0.8 0.4 3.2 1.5 4.9 2.1c1.7 0.6 3.3 0.8 5.1 1.5c1.9 0.7 4.2 1.8 6.2 2.6c2 0.7 3.4 1.3 5.9 2.1c2.4 0.8 5.9 2 8.7 2.7c2.7 0.7 5 1.4 7.8 1.7c2.8 0.3 5.8 0.3 9 0c3.1-0.2 6.8-0.7 9.9-1.6c3.2-1 5.7-2.3 8.8-3.9c3-1.5 6.7-3.8 9.4-5.5c2.8-1.6 4.5-2.8 7.2-4.3c2.7-1.5 5.9-3.7 9.1-4.6c3.1-0.9 6.5-1.5 9.7-1c3.2 0.5 7.2 1.9 9.7 4c2.6 2.1 4.3 5.5 5.6 8.4c1.2 2.9 1.6 5.9 1.7 8.8c0.2 3-0.3 6.2-0.8 9.1c-0.6 2.9-1.4 5.5-2.5 8.3c-1.1 2.7-2.5 5.7-3.9 8.2c-1.4 2.5-2.9 4.9-4.6 7c-1.7 2-3.9 4-5.5 5.3c-1.6 1.4-3.3 2.4-3.9 2.9" stroke="#22a8e4" stroke-width="4.1"/><path d="M347.7 206c0.7 0.4 3 1.7 4.6 2.5c1.6 0.7 3.3 1.3 5.2 2.1c1.9 0.8 4.1 2 6.2 2.9c2.2 0.9 3.9 1.6 6.5 2.5c2.6 0.9 6.1 2.1 9.1 2.8c2.9 0.7 5.6 1.4 8.6 1.6c3.1 0.3 6.3 0.1 9.6-0.3c3.4-0.4 7.2-1 10.4-2c3.2-1.1 6-2.6 9.1-4.2c3.1-1.7 6.7-4 9.4-5.6c2.8-1.7 4.6-3.1 7.2-4.6c2.6-1.5 5.6-3.5 8.5-4.4c2.9-0.9 5.9-1.4 8.8-1c2.9 0.4 6.3 1.6 8.5 3.4c2.3 1.9 3.9 4.9 5 7.6c1.1 2.6 1.6 5.4 1.7 8.2c0.2 2.8-0.2 5.8-0.8 8.5c-0.5 2.8-1.3 5.4-2.3 8.1c-1 2.7-2.4 5.5-3.8 8c-1.3 2.5-2.8 4.9-4.4 6.9c-1.6 2.1-3.6 4-5.1 5.4c-1.5 1.4-3.1 2.5-3.8 3" stroke="#1c90dc" stroke-width="4.1"/><path d="M346 207.7c0.8 0.5 2.8 1.8 4.4 2.8c1.6 0.9 3.3 1.8 5.2 2.8c2 1 4.2 2.2 6.4 3.3c2.2 1 4.2 1.9 7 2.8c2.7 1 6.3 2.2 9.5 2.9c3.1 0.8 6.1 1.4 9.4 1.6c3.3 0.1 6.8-0.1 10.3-0.7c3.5-0.5 7.4-1.3 10.8-2.4c3.3-1.2 6.3-2.9 9.5-4.6c3.1-1.7 6.6-4 9.4-5.7c2.7-1.8 4.7-3.3 7.2-4.8c2.5-1.5 5.2-3.3 7.8-4.2c2.6-0.9 5.4-1.3 7.9-1c2.6 0.3 5.4 1.3 7.4 2.9c1.9 1.6 3.4 4.2 4.4 6.6c1 2.4 1.5 5 1.6 7.6c0.2 2.6-0.2 5.4-0.7 8.1c-0.5 2.6-1.3 5.2-2.2 7.8c-1 2.6-2.3 5.4-3.6 7.8c-1.3 2.5-2.7 4.8-4.2 6.8c-1.5 2.1-3.5 4-4.8 5.4c-1.4 1.4-3 2.7-3.6 3.2" stroke="#1a62cc" stroke-width="4.1"/><path d="M344.4 209.4c0.7 0.5 2.5 2 4 3.1c1.6 1.1 3.4 2.3 5.4 3.5c2 1.2 4.1 2.5 6.5 3.6c2.3 1.2 4.6 2.2 7.5 3.3c2.9 1 6.5 2.2 9.9 2.9c3.3 0.8 6.7 1.4 10.3 1.5c3.5 0.1 7.2-0.3 10.9-1c3.7-0.6 7.6-1.5 11.1-2.8c3.5-1.4 6.7-3.2 9.9-5c3.3-1.8 6.6-4 9.4-5.8c2.8-1.8 4.9-3.5 7.3-5c2.4-1.5 4.8-3.2 7.2-4c2.3-0.8 4.7-1.2 6.9-1c2.2 0.2 4.5 1 6.2 2.3c1.7 1.4 3 3.6 3.9 5.8c0.9 2.1 1.4 4.6 1.5 7c0.2 2.4-0.1 5-0.6 7.5c-0.5 2.5-1.2 5.1-2.1 7.6c-1 2.5-2.2 5.2-3.5 7.6c-1.2 2.4-2.6 4.8-4 6.8c-1.4 2-3.2 3.9-4.5 5.4c-1.3 1.4-2.8 2.8-3.3 3.3" stroke="#2848b8" stroke-width="4.1"/><path d="M342.8 211.1c0.6 0.6 2.2 2.1 3.7 3.4c1.5 1.2 3.4 2.8 5.4 4.2c2 1.3 4.2 2.7 6.7 4c2.4 1.3 4.9 2.5 8 3.6c3.1 1.1 6.7 2.3 10.3 3c3.5 0.8 7.3 1.5 11.1 1.5c3.8 0 7.7-0.6 11.6-1.4c3.8-0.7 7.8-1.8 11.5-3.2c3.6-1.5 7-3.5 10.3-5.4c3.3-1.8 6.5-4.1 9.3-5.9c2.8-1.9 5.1-3.7 7.4-5.2c2.3-1.5 4.4-3 6.5-3.8c2.1-0.8 4.2-1.1 6-1c1.9 0.2 3.6 0.7 5 1.8c1.4 1.1 2.5 3 3.3 4.8c0.8 1.9 1.4 4.2 1.5 6.4c0.2 2.3-0.1 4.7-0.5 7.1c-0.5 2.4-1.2 4.8-2 7.3c-0.9 2.5-2.1 5.1-3.3 7.4c-1.2 2.4-2.6 4.7-3.9 6.7c-1.3 2-2.9 3.9-4.1 5.4c-1.2 1.5-2.7 3-3.2 3.5" stroke="#6a22a8" stroke-width="4.1"/><path d="M341.2 212.9c0.6 0.6 1.9 2.2 3.4 3.6c1.5 1.4 3.4 3.3 5.5 4.8c2 1.6 4.2 3.1 6.7 4.4c2.6 1.4 5.4 2.8 8.6 4c3.2 1.2 6.9 2.4 10.7 3.1c3.7 0.8 7.9 1.5 11.9 1.4c4 0 8.3-0.8 12.3-1.6c4-0.9 8.1-2.2 11.8-3.8c3.8-1.5 7.4-3.7 10.8-5.6c3.3-2 6.4-4.2 9.2-6.1c2.8-1.9 5.2-3.8 7.5-5.3c2.2-1.5 4-2.9 5.8-3.7c1.8-0.8 3.6-1 5.1-1c1.5 0.1 2.8 0.4 3.9 1.2c1.1 0.9 2 2.4 2.7 4c0.7 1.6 1.3 3.7 1.5 5.8c0.1 2-0.1 4.2-0.5 6.5c-0.4 2.3-1.1 4.7-2 7.1c-0.8 2.4-2 4.9-3.1 7.2c-1.1 2.3-2.4 4.7-3.7 6.7c-1.2 2-2.6 3.8-3.8 5.3c-1.1 1.6-2.4 3.1-2.9 3.8" stroke="#5a20a0" stroke-width="4.1"/><path d="M339.6 214.6c0.5 0.6 1.6 2.3 3.1 3.9c1.4 1.6 3.5 3.8 5.5 5.5c2.1 1.7 4.2 3.3 6.9 4.8c2.7 1.5 5.7 3.1 9.1 4.3c3.4 1.3 7.1 2.5 11.1 3.2c3.9 0.8 8.5 1.5 12.7 1.4c4.3-0.1 8.8-1 13-2c4.2-1.1 8.3-2.5 12.2-4.2c3.9-1.6 7.7-4 11.1-6c3.4-2 6.4-4.2 9.2-6.2c2.8-1.9 5.4-4 7.5-5.5c2.2-1.5 3.7-2.8 5.2-3.5c1.6-0.7 3.1-0.9 4.2-1c1.2 0 1.9 0.1 2.7 0.7c0.8 0.6 1.6 1.7 2.2 3c0.6 1.4 1.2 3.4 1.4 5.2c0.1 1.9-0.1 3.9-0.5 6.1c-0.3 2.1-1 4.5-1.8 6.8c-0.8 2.3-1.9 4.7-2.9 7c-1.1 2.3-2.4 4.6-3.6 6.6c-1.1 2-2.4 3.8-3.4 5.4c-1 1.5-2.3 3.2-2.8 3.9" stroke="#162c98" stroke-width="4.1"/><path d="M338 216.3c0.4 0.7 1.3 2.5 2.8 4.2c1.4 1.8 3.5 4.3 5.6 6.2c2.1 1.9 4.2 3.5 7 5.2c2.7 1.6 6.1 3.3 9.6 4.7c3.5 1.3 7.3 2.5 11.5 3.2c4.1 0.8 9 1.5 13.6 1.3c4.5-0.2 9.2-1.2 13.6-2.3c4.3-1.2 8.5-2.7 12.5-4.6c4.1-1.8 8.1-4.3 11.6-6.4c3.4-2.1 6.3-4.3 9.1-6.3c2.8-2 5.6-4.2 7.6-5.7c2-1.5 3.3-2.6 4.6-3.3c1.3-0.7 2.4-0.8 3.2-0.9c0.8-0.2 1-0.4 1.5 0c0.5 0.4 1.2 1.1 1.7 2.2c0.5 1.1 1.1 2.9 1.3 4.6c0.1 1.7 0 3.5-0.4 5.5c-0.3 2-0.9 4.4-1.7 6.6c-0.7 2.3-1.8 4.6-2.8 6.8c-1 2.2-2.3 4.6-3.4 6.6c-1 1.9-2.1 3.8-3 5.3c-1 1.6-2.2 3.4-2.6 4.1" stroke="#1a62cc" stroke-width="4.1"/><path d="M336.3 218c0.5 0.7 1.2 2.6 2.5 4.5c1.4 2 3.6 4.8 5.7 6.9c2.2 2.1 4.3 3.8 7.1 5.5c2.9 1.8 6.5 3.7 10.2 5.1c3.7 1.4 7.5 2.6 11.8 3.3c4.4 0.8 9.7 1.5 14.5 1.3c4.8-0.3 9.7-1.5 14.2-2.7c4.6-1.3 8.9-3 13-5c4.1-1.9 8.4-4.5 11.9-6.8c3.5-2.2 6.4-4.3 9.2-6.4c2.8-2 5.7-4.4 7.6-5.9c1.9-1.5 2.9-2.4 3.9-3.1c1.1-0.7 1.9-0.7 2.3-0.9c0.5-0.3 0.1-0.7 0.4-0.5c0.2 0.1 0.6 0.4 1 1.3c0.4 0.8 1.1 2.4 1.3 3.9c0.1 1.5 0 3.1-0.3 5c-0.3 1.9-0.9 4.3-1.6 6.4c-0.7 2.2-1.7 4.4-2.6 6.6c-1 2.2-2.2 4.5-3.2 6.5c-1 2-1.9 3.8-2.8 5.4c-0.8 1.6-1.9 3.5-2.3 4.2" stroke="#1c78d4" stroke-width="4.1"/><path d="M334.7 219.7c0.4 0.8 0.9 2.8 2.2 4.9c1.3 2 3.6 5.3 5.8 7.5c2.1 2.2 4.2 4 7.2 5.9c3 1.9 6.9 3.9 10.7 5.4c3.8 1.5 7.7 2.7 12.2 3.4c4.6 0.8 10.3 1.5 15.3 1.2c5-0.3 10.2-1.6 14.9-3c4.7-1.4 9.1-3.3 13.4-5.4c4.2-2 8.7-4.8 12.3-7.1c3.5-2.3 6.3-4.4 9.1-6.5c2.8-2.2 5.8-4.7 7.7-6.2c1.8-1.5 2.5-2.3 3.2-2.9c0.8-0.6 1.4-0.6 1.4-0.9c0.1-0.4-0.8-1-0.8-1.1c-0.1-0.1 0.2-0.2 0.5 0.4c0.3 0.6 1 2 1.2 3.4c0.1 1.3 0.1 2.7-0.2 4.5c-0.3 1.8-0.8 4-1.5 6.1c-0.7 2.1-1.6 4.3-2.5 6.4c-0.9 2.1-2.1 4.5-3 6.4c-0.9 2-1.6 3.8-2.4 5.4c-0.8 1.7-1.8 3.7-2.2 4.4" stroke="#1c90dc" stroke-width="4.1"/><path d="M333.1 221.4c0.3 0.9 0.6 2.9 1.9 5.2c1.3 2.2 3.6 5.8 5.8 8.2c2.2 2.4 4.3 4.2 7.4 6.2c3.1 2 7.2 4.3 11.2 5.8c4 1.6 7.8 2.7 12.6 3.5c4.8 0.8 10.9 1.5 16.1 1.1c5.3-0.3 10.7-1.8 15.6-3.3c4.9-1.5 9.3-3.5 13.7-5.8c4.4-2.2 9.1-5.1 12.7-7.5c3.7-2.4 6.3-4.5 9.1-6.6c2.8-2.2 6-4.9 7.8-6.4c1.7-1.5 2.1-2.1 2.6-2.7c0.5-0.6 0.7-0.5 0.4-0.9c-0.2-0.4-1.6-1.3-2-1.6c-0.3-0.4-0.2-0.9 0-0.5c0.2 0.4 0.9 1.6 1.1 2.7c0.1 1.1 0.1 2.4-0.1 4c-0.3 1.7-0.8 3.9-1.4 5.9c-0.6 2-1.5 4.1-2.4 6.2c-0.8 2.1-2 4.4-2.8 6.4c-0.8 1.9-1.4 3.7-2 5.4c-0.7 1.6-1.7 3.8-2 4.5" stroke="#1c88d8" stroke-width="4.1"/><path d="M416.7 205.8c1-0.8 3.5-2.8 5.6-4.5c2.1-1.7 4.8-3.8 7-5.6c2.2-1.8 4.2-3.5 6.4-5.2c2.3-1.8 4.8-3.7 7.2-5.2c2.3-1.5 4.5-2.8 6.8-4c2.4-1.1 4.8-2.2 7.2-3c2.4-0.8 5-1.4 7.4-1.8c2.4-0.4 4.8-0.6 7.2-0.6c2.4 0.1 4.9 0.5 7.1 0.9c2.2 0.4 4.2 1 5.9 1.7c1.8 0.6 3.4 1.6 4.6 2.3c1.2 0.6 2.1 1.4 2.5 1.7" stroke="#ff5cc0" stroke-width="2.8"/><path d="M417.2 206.7c1-0.7 3.6-2.5 5.8-4.1c2.2-1.5 5-3.5 7.4-5.2c2.3-1.7 4.4-3.4 6.7-5c2.3-1.7 4.7-3.6 7-5c2.3-1.5 4.5-2.7 6.8-3.9c2.2-1.1 4.5-2.1 6.8-2.9c2.4-0.8 4.8-1.4 7.1-1.9c2.3-0.4 4.6-0.7 6.9-0.7c2.3-0.1 4.7 0.2 6.8 0.4c2.1 0.3 4.1 0.8 5.8 1.3c1.7 0.5 3.3 1.3 4.5 1.9c1.1 0.5 2.1 1.3 2.6 1.5" stroke="#f868c8" stroke-width="2.8"/><path d="M417.7 207.6c1-0.7 3.8-2.3 6.1-3.7c2.2-1.4 5.2-3.1 7.7-4.8c2.4-1.6 4.6-3.3 6.9-4.9c2.3-1.6 4.7-3.3 7-4.7c2.2-1.5 4.4-2.7 6.6-3.8c2.2-1.1 4.4-2 6.6-2.8c2.2-0.8 4.5-1.5 6.7-1.9c2.2-0.5 4.4-0.9 6.6-1c2.2-0.2 4.5-0.1 6.5 0.1c2.1 0.1 4 0.4 5.7 0.8c1.7 0.4 3.2 1 4.3 1.5c1.2 0.4 2.3 1.1 2.7 1.3" stroke="#58c8ec" stroke-width="2.8"/><path d="M418.3 208.4c1-0.5 3.8-1.9 6.2-3.1c2.4-1.3 5.5-2.9 8-4.4c2.6-1.6 4.9-3.3 7.2-4.8c2.4-1.6 4.7-3.2 6.9-4.6c2.3-1.3 4.4-2.5 6.5-3.6c2.2-1 4.2-2 6.3-2.8c2.1-0.8 4.3-1.4 6.4-1.9c2.1-0.5 4.2-0.9 6.3-1.2c2.1-0.2 4.3-0.3 6.2-0.3c2 0 4 0.2 5.6 0.4c1.6 0.2 3 0.7 4.2 1.1c1.1 0.4 2.3 0.9 2.8 1.1" stroke="#20b8e8" stroke-width="2.8"/><path d="M418.8 209.3c1-0.4 4-1.6 6.4-2.7c2.5-1.2 5.8-2.6 8.4-4c2.7-1.5 5.1-3.1 7.5-4.6c2.3-1.5 4.6-3.1 6.8-4.4c2.2-1.3 4.3-2.4 6.4-3.4c2-1.1 3.9-2 6-2.8c2-0.8 4-1.4 6-2c2-0.6 4-1 6-1.4c2-0.3 4-0.5 5.9-0.6c1.9-0.2 3.9-0.2 5.5-0.1c1.6 0.1 2.9 0.4 4 0.7c1.2 0.3 2.5 0.7 2.9 0.9" stroke="#22a8e4" stroke-width="2.8"/><path d="M419.3 210.2c1.1-0.3 4.1-1.3 6.7-2.3c2.5-1 6-2.3 8.7-3.6c2.7-1.3 5.3-3 7.7-4.5c2.4-1.4 4.6-2.9 6.7-4.1c2.2-1.2 4.3-2.3 6.3-3.3c2-1 3.8-1.9 5.7-2.7c1.9-0.8 3.8-1.5 5.7-2.1c1.9-0.6 3.8-1.1 5.7-1.5c1.9-0.5 3.8-0.8 5.7-1.1c1.8-0.2 3.7-0.4 5.3-0.5c1.5 0 2.7 0.2 3.9 0.3c1.2 0.2 2.5 0.6 3 0.7" stroke="#1c90dc" stroke-width="2.8"/><ellipse cx="398" cy="197" rx="12" ry="13" fill="#c0301c"/><ellipse cx="399" cy="194" rx="11" ry="5.500" fill="#a88a14"/><ellipse cx="398" cy="196" rx="8" ry="2.500" fill="#e0b020"/><path d="M402.5 200.8c0.8 0.1 2.9 0.6 4.5 0.9c1.6 0.2 3.4 0.5 5 0.5c1.6 0 3-0.3 4.5-0.7c1.5-0.3 3.1-0.7 4.6-1.1c1.5-0.4 3.2-0.9 4.6-1.3c1.3-0.4 3.1-1 3.7-1.2" stroke="#f02a10" stroke-width="3.5"/><path d="M402 203c0.7 0.2 2.7 0.8 4.4 1.1c1.6 0.4 3.8 0.9 5.6 0.9c1.8 0 3.5-0.3 5.1-0.6c1.7-0.4 3.3-0.8 4.9-1.4c1.6-0.6 3.3-1.5 4.6-2.1c1.4-0.7 2.8-1.6 3.4-1.9" stroke="#f83818" stroke-width="3.5"/><path d="M401.5 205.2c0.7 0.2 2.5 1 4.3 1.4c1.7 0.4 4.2 1.1 6.2 1.2c2 0.1 3.9-0.2 5.7-0.6c1.9-0.4 3.6-0.8 5.2-1.6c1.7-0.7 3.4-2 4.7-2.9c1.3-1 2.5-2.2 3-2.6" stroke="#e02010" stroke-width="3.5"/><path d="M385.7 226.9L384.6 226.2L382.9 225.3L384.4 223.5L386.1 224.5L387.1 225.3z" fill="#50d4f2" stroke="#50d4f2" stroke-width=".6"/><path d="M387.1 225.3L386.1 224.5L384.4 223.5L385.9 221.7L387.5 222.8L388.6 223.6z" fill="#30c4ec" stroke="#30c4ec" stroke-width=".6"/><path d="M388.6 223.6L387.5 222.8L385.9 221.7L387.4 219.9L388.9 221.1L390 222z" fill="#20b8e8" stroke="#20b8e8" stroke-width=".6"/><path d="M390 222L388.9 221.1L387.4 219.9L388.9 218L390.4 219.4L391.4 220.4z" fill="#20a8e4" stroke="#20a8e4" stroke-width=".6"/><path d="M391.4 220.4L390.4 219.4L388.9 218L390.4 216.2L391.8 217.6L392.9 218.7z" fill="#1c90dc" stroke="#1c90dc" stroke-width=".6"/><path d="M392.9 218.7L391.8 217.6L390.4 216.2L391.9 214.4L393.3 215.9L394.3 217.1z" fill="#1c7cd8" stroke="#1c7cd8" stroke-width=".6"/><path d="M382.9 225.3L380.7 224L378.3 222.2L380.1 220.4L382.4 222.1L384.4 223.5z" fill="#50d4f2" stroke="#50d4f2" stroke-width=".6"/><path d="M384.4 223.5L382.4 222.1L380.1 220.4L382 218.5L384 220.2L385.9 221.7z" fill="#30c4ec" stroke="#30c4ec" stroke-width=".6"/><path d="M385.9 221.7L384 220.2L382 218.5L383.9 216.7L385.7 218.4L387.4 219.9z" fill="#20b8e8" stroke="#20b8e8" stroke-width=".6"/><path d="M387.4 219.9L385.7 218.4L383.9 216.7L385.7 214.9L387.3 216.5L388.9 218z" fill="#20a8e4" stroke="#20a8e4" stroke-width=".6"/><path d="M388.9 218L387.3 216.5L385.7 214.9L387.6 213L388.9 214.6L390.4 216.2z" fill="#1c90dc" stroke="#1c90dc" stroke-width=".6"/><path d="M390.4 216.2L388.9 214.6L387.6 213L389.4 211.2L390.6 212.8L391.9 214.4z" fill="#1c7cd8" stroke="#1c7cd8" stroke-width=".6"/><path d="M378.3 222.2L375.7 219.9L373.5 217L376 215.6L377.9 218.2L380.1 220.4z" fill="#50d4f2" stroke="#50d4f2" stroke-width=".6"/><path d="M380.1 220.4L377.9 218.2L376 215.6L378.5 214.3L380.1 216.6L382 218.5z" fill="#30c4ec" stroke="#30c4ec" stroke-width=".6"/><path d="M382 218.5L380.1 216.6L378.5 214.3L381 213L382.2 214.9L383.9 216.7z" fill="#20b8e8" stroke="#20b8e8" stroke-width=".6"/><path d="M383.9 216.7L382.2 214.9L381 213L383.5 211.7L384.4 213.2L385.7 214.9z" fill="#20a8e4" stroke="#20a8e4" stroke-width=".6"/><path d="M385.7 214.9L384.4 213.2L383.5 211.7L386 210.4L386.6 211.6L387.6 213z" fill="#1c90dc" stroke="#1c90dc" stroke-width=".6"/><path d="M387.6 213L386.6 211.6L386 210.4L388.5 209L388.7 209.9L389.4 211.2z" fill="#1c7cd8" stroke="#1c7cd8" stroke-width=".6"/><path d="M373.5 217L371.9 213.8L370.9 210.7L373.7 210L374.7 212.8L376 215.6z" fill="#50d4f2" stroke="#50d4f2" stroke-width=".6"/><path d="M376 215.6L374.7 212.8L373.7 210L376.6 209.4L377.4 211.9L378.5 214.3z" fill="#30c4ec" stroke="#30c4ec" stroke-width=".6"/><path d="M378.5 214.3L377.4 211.9L376.6 209.4L379.5 208.7L380.1 210.9L381 213z" fill="#20b8e8" stroke="#20b8e8" stroke-width=".6"/><path d="M381 213L380.1 210.9L379.5 208.7L382.4 208L382.9 210L383.5 211.7z" fill="#20a8e4" stroke="#20a8e4" stroke-width=".6"/><path d="M383.5 211.7L382.9 210L382.4 208L385.3 207.3L385.6 209L386 210.4z" fill="#1c90dc" stroke="#1c90dc" stroke-width=".6"/><path d="M386 210.4L385.6 209L385.3 207.3L388.1 206.6L388.4 208.1L388.5 209z" fill="#1c7cd8" stroke="#1c7cd8" stroke-width=".6"/><path d="M370.9 210.7L370.1 207.7L369.7 204.7L372.7 204.4L373.1 207.2L373.7 210z" fill="#50d4f2" stroke="#50d4f2" stroke-width=".6"/><path d="M373.7 210L373.1 207.2L372.7 204.4L375.7 204.1L376.1 206.7L376.6 209.4z" fill="#30c4ec" stroke="#30c4ec" stroke-width=".6"/><path d="M376.6 209.4L376.1 206.7L375.7 204.1L378.7 203.8L379 206.2L379.5 208.7z" fill="#20b8e8" stroke="#20b8e8" stroke-width=".6"/><path d="M379.5 208.7L379 206.2L378.7 203.8L381.7 203.5L382 205.8L382.4 208z" fill="#20a8e4" stroke="#20a8e4" stroke-width=".6"/><path d="M382.4 208L382 205.8L381.7 203.5L384.8 203.2L385 205.3L385.3 207.3z" fill="#1c90dc" stroke="#1c90dc" stroke-width=".6"/><path d="M385.3 207.3L385 205.3L384.8 203.2L387.8 202.9L387.9 204.8L388.1 206.6z" fill="#1c7cd8" stroke="#1c7cd8" stroke-width=".6"/><path d="M369.7 204.7L369.4 201.8L369.3 199L372.3 199L372.4 201.6L372.7 204.4z" fill="#50d4f2" stroke="#50d4f2" stroke-width=".6"/><path d="M372.7 204.4L372.4 201.6L372.3 199L375.4 199L375.5 201.5L375.7 204.1z" fill="#30c4ec" stroke="#30c4ec" stroke-width=".6"/><path d="M375.7 204.1L375.5 201.5L375.4 199L378.5 199L378.6 201.3L378.7 203.8z" fill="#20b8e8" stroke="#20b8e8" stroke-width=".6"/><path d="M378.7 203.8L378.6 201.3L378.5 199L381.6 199L381.6 201.2L381.7 203.5z" fill="#20a8e4" stroke="#20a8e4" stroke-width=".6"/><path d="M381.7 203.5L381.6 201.2L381.6 199L384.7 199L384.7 201L384.8 203.2z" fill="#1c90dc" stroke="#1c90dc" stroke-width=".6"/><path d="M384.8 203.2L384.7 201L384.7 199L387.7 199L387.7 200.9L387.8 202.9z" fill="#1c7cd8" stroke="#1c7cd8" stroke-width=".6"/><path d="M369.3 199L369.3 196.2L369.5 193.3L372.6 193.7L372.4 196.4L372.3 199z" fill="#50d4f2" stroke="#50d4f2" stroke-width=".6"/><path d="M372.3 199L372.4 196.4L372.6 193.7L375.7 194.1L375.5 196.5L375.4 199z" fill="#30c4ec" stroke="#30c4ec" stroke-width=".6"/><path d="M375.4 199L375.5 196.5L375.7 194.1L378.8 194.4L378.6 196.7L378.5 199z" fill="#20b8e8" stroke="#20b8e8" stroke-width=".6"/><path d="M378.5 199L378.6 196.7L378.8 194.4L381.8 194.8L381.7 196.9L381.6 199z" fill="#20a8e4" stroke="#20a8e4" stroke-width=".6"/><path d="M381.6 199L381.7 196.9L381.8 194.8L384.9 195.1L384.8 197.1L384.7 199z" fill="#1c90dc" stroke="#1c90dc" stroke-width=".6"/><path d="M384.7 199L384.8 197.1L384.9 195.1L388 195.5L387.8 197.2L387.7 199z" fill="#1c7cd8" stroke="#1c7cd8" stroke-width=".6"/><path d="M369.5 193.3L369.9 190.5L370.6 187.6L373.6 188.4L373 191L372.6 193.7z" fill="#50d4f2" stroke="#50d4f2" stroke-width=".6"/><path d="M372.6 193.7L373 191L373.6 188.4L376.6 189.1L376 191.6L375.7 194.1z" fill="#30c4ec" stroke="#30c4ec" stroke-width=".6"/><path d="M375.7 194.1L376 191.6L376.6 189.1L379.6 189.9L379.1 192.1L378.8 194.4z" fill="#20b8e8" stroke="#20b8e8" stroke-width=".6"/><path d="M378.8 194.4L379.1 192.1L379.6 189.9L382.6 190.7L382.1 192.7L381.8 194.8z" fill="#20a8e4" stroke="#20a8e4" stroke-width=".6"/><path d="M381.8 194.8L382.1 192.7L382.6 190.7L385.6 191.5L385.2 193.2L384.9 195.1z" fill="#1c90dc" stroke="#1c90dc" stroke-width=".6"/><path d="M384.9 195.1L385.2 193.2L385.6 191.5L388.6 192.3L388.3 193.8L388 195.5z" fill="#1c7cd8" stroke="#1c7cd8" stroke-width=".6"/><path d="M370.6 187.6L371.5 184.7L372.7 181.8L375.5 183.2L374.4 185.8L373.6 188.4z" fill="#50d4f2" stroke="#50d4f2" stroke-width=".6"/><path d="M373.6 188.4L374.4 185.8L375.5 183.2L378.2 184.6L377.3 186.8L376.6 189.1z" fill="#30c4ec" stroke="#30c4ec" stroke-width=".6"/><path d="M376.6 189.1L377.3 186.8L378.2 184.6L381 186L380.2 187.9L379.6 189.9z" fill="#20b8e8" stroke="#20b8e8" stroke-width=".6"/><path d="M379.6 189.9L380.2 187.9L381 186L383.8 187.4L383.1 188.9L382.6 190.7z" fill="#20a8e4" stroke="#20a8e4" stroke-width=".6"/><path d="M382.6 190.7L383.1 188.9L383.8 187.4L386.5 188.8L386 190L385.6 191.5z" fill="#1c90dc" stroke="#1c90dc" stroke-width=".6"/><path d="M385.6 191.5L386 190L386.5 188.8L389.3 190.2L388.9 191L388.6 192.3z" fill="#1c7cd8" stroke="#1c7cd8" stroke-width=".6"/><path d="M372.7 181.8L374.3 179.2L376.2 176.8L378.5 178.8L376.9 180.9L375.5 183.2z" fill="#68caee" stroke="#68caee" stroke-width=".6"/><path d="M375.5 183.2L376.9 180.9L378.5 178.8L380.9 180.8L379.4 182.6L378.2 184.6z" fill="#4db6e6" stroke="#4db6e6" stroke-width=".6"/><path d="M378.2 184.6L379.4 182.6L380.9 180.8L383.2 182.8L382 184.3L381 186z" fill="#3ea8df" stroke="#3ea8df" stroke-width=".6"/><path d="M381 186L382 184.3L383.2 182.8L385.5 184.7L384.5 186L383.8 187.4z" fill="#3d9ad7" stroke="#3d9ad7" stroke-width=".6"/><path d="M383.8 187.4L384.5 186L385.5 184.7L387.8 186.7L387.1 187.8L386.5 188.8z" fill="#3985c9" stroke="#3985c9" stroke-width=".6"/><path d="M386.5 188.8L387.1 187.8L387.8 186.7L390.2 188.7L389.6 189.5L389.3 190.2z" fill="#3976c1" stroke="#3976c1" stroke-width=".6"/><path d="M376.2 176.8L378.2 174.8L380.3 173L382.2 175.4L380.3 177L378.5 178.8z" fill="#99b5e6" stroke="#99b5e6" stroke-width=".6"/><path d="M378.5 178.8L380.3 177L382.2 175.4L384.1 177.7L382.4 179.1L380.9 180.8z" fill="#8699da" stroke="#8699da" stroke-width=".6"/><path d="M380.9 180.8L382.4 179.1L384.1 177.7L386 180.1L384.5 181.3L383.2 182.8z" fill="#7a89cd" stroke="#7a89cd" stroke-width=".6"/><path d="M383.2 182.8L384.5 181.3L386 180.1L387.9 182.4L386.6 183.5L385.5 184.7z" fill="#777dbe" stroke="#777dbe" stroke-width=".6"/><path d="M385.5 184.7L386.6 183.5L387.9 182.4L389.8 184.8L388.7 185.7L387.8 186.7z" fill="#736fa2" stroke="#736fa2" stroke-width=".6"/><path d="M387.8 186.7L388.7 185.7L389.8 184.8L391.7 187.1L390.9 187.9L390.2 188.7z" fill="#746a92" stroke="#746a92" stroke-width=".6"/><path d="M380.3 173L382.4 171.5L384.5 170.2L386 172.8L384.1 174L382.2 175.4z" fill="#caa1dd" stroke="#caa1dd" stroke-width=".6"/><path d="M382.2 175.4L384.1 174L386 172.8L387.5 175.4L385.8 176.5L384.1 177.7z" fill="#c07ccd" stroke="#c07ccd" stroke-width=".6"/><path d="M384.1 177.7L385.8 176.5L387.5 175.4L389 178L387.5 179L386 180.1z" fill="#b66abc" stroke="#b66abc" stroke-width=".6"/><path d="M386 180.1L387.5 179L389 178L390.5 180.6L389.2 181.4L387.9 182.4z" fill="#b060a4" stroke="#b060a4" stroke-width=".6"/><path d="M387.9 182.4L389.2 181.4L390.5 180.6L392 183.2L390.9 183.9L389.8 184.8z" fill="#ac587b" stroke="#ac587b" stroke-width=".6"/><path d="M389.8 184.8L390.9 183.9L392 183.2L393.5 185.8L392.6 186.4L391.7 187.1z" fill="#af5d63" stroke="#af5d63" stroke-width=".6"/><path d="M384.5 170.2L386.9 169L389.4 168L390.3 170.9L388.1 171.7L386 172.8z" fill="#fa8cd5" stroke="#fa8cd5" stroke-width=".6"/><path d="M386 172.8L388.1 171.7L390.3 170.9L391.3 173.7L389.4 174.5L387.5 175.4z" fill="#f95fc1" stroke="#f95fc1" stroke-width=".6"/><path d="M387.5 175.4L389.4 174.5L391.3 173.7L392.2 176.6L390.6 177.2L389 178z" fill="#f24baa" stroke="#f24baa" stroke-width=".6"/><path d="M389 178L390.6 177.2L392.2 176.6L393.2 179.4L391.8 179.9L390.5 180.6z" fill="#ea438b" stroke="#ea438b" stroke-width=".6"/><path d="M390.5 180.6L391.8 179.9L393.2 179.4L394.1 182.3L393 182.7L392 183.2z" fill="#e64254" stroke="#e64254" stroke-width=".6"/><path d="M392 183.2L393 182.7L394.1 182.3L395 185.1L394.2 185.4L393.5 185.8z" fill="#ea5135" stroke="#ea5135" stroke-width=".6"/><path d="M389.4 168L391.9 167.4L394.3 166.9L394.8 169.8L392.6 170.3L390.3 170.9z" fill="#ff8ad4" stroke="#ff8ad4" stroke-width=".6"/><path d="M390.3 170.9L392.6 170.3L394.8 169.8L395.2 172.8L393.2 173.2L391.3 173.7z" fill="#ff5cc0" stroke="#ff5cc0" stroke-width=".6"/><path d="M391.3 173.7L393.2 173.2L395.2 172.8L395.7 175.8L393.9 176.1L392.2 176.6z" fill="#f848a8" stroke="#f848a8" stroke-width=".6"/><path d="M392.2 176.6L393.9 176.1L395.7 175.8L396.1 178.7L394.6 179L393.2 179.4z" fill="#f04088" stroke="#f04088" stroke-width=".6"/><path d="M393.2 179.4L394.6 179L396.1 178.7L396.6 181.7L395.3 181.9L394.1 182.3z" fill="#ec4050" stroke="#ec4050" stroke-width=".6"/><path d="M394.1 182.3L395.3 181.9L396.6 181.7L397 184.6L396 184.8L395 185.1z" fill="#f05030" stroke="#f05030" stroke-width=".6"/><path d="M394.3 166.9L396.7 166.6L399 166.5L399 169.5L396.9 169.6L394.8 169.8z" fill="#ff8ad4" stroke="#ff8ad4" stroke-width=".6"/><path d="M394.8 169.8L396.9 169.6L399 169.5L399 172.5L397.1 172.6L395.2 172.8z" fill="#ff5cc0" stroke="#ff5cc0" stroke-width=".6"/><path d="M395.2 172.8L397.1 172.6L399 172.5L399 175.5L397.4 175.6L395.7 175.8z" fill="#f848a8" stroke="#f848a8" stroke-width=".6"/><path d="M395.7 175.8L397.4 175.6L399 175.5L399 178.5L397.6 178.6L396.1 178.7z" fill="#f04088" stroke="#f04088" stroke-width=".6"/><path d="M396.1 178.7L397.6 178.6L399 178.5L399 181.5L397.8 181.5L396.6 181.7z" fill="#ec4050" stroke="#ec4050" stroke-width=".6"/><path d="M396.6 181.7L397.8 181.5L399 181.5L399 184.5L398.1 184.5L397 184.6z" fill="#f05030" stroke="#f05030" stroke-width=".6"/><path d="M399 166.5L401.3 166.6L403.7 166.9L403.2 169.8L401.1 169.6L399 169.5z" fill="#ff8ad4" stroke="#ff8ad4" stroke-width=".6"/><path d="M399 169.5L401.1 169.6L403.2 169.8L402.7 172.8L400.8 172.6L399 172.5z" fill="#ff5cc0" stroke="#ff5cc0" stroke-width=".6"/><path d="M399 172.5L400.8 172.6L402.7 172.8L402.2 175.8L400.6 175.6L399 175.5z" fill="#f848a8" stroke="#f848a8" stroke-width=".6"/><path d="M399 175.5L400.6 175.6L402.2 175.8L401.7 178.7L400.3 178.6L399 178.5z" fill="#f04088" stroke="#f04088" stroke-width=".6"/><path d="M399 178.5L400.3 178.6L401.7 178.7L401.2 181.7L400.1 181.5L399 181.5z" fill="#ec4050" stroke="#ec4050" stroke-width=".6"/><path d="M399 181.5L400.1 181.5L401.2 181.7L400.7 184.7L399.9 184.5L399 184.5z" fill="#f05030" stroke="#f05030" stroke-width=".6"/><path d="M403.7 166.9L406.1 167.4L408.5 168.1L407.4 170.9L405.3 170.3L403.2 169.8z" fill="#ff8ad4" stroke="#ff8ad4" stroke-width=".6"/><path d="M403.2 169.8L405.3 170.3L407.4 170.9L406.3 173.8L404.5 173.2L402.7 172.8z" fill="#ff5cc0" stroke="#ff5cc0" stroke-width=".6"/><path d="M402.7 172.8L404.5 173.2L406.3 173.8L405.3 176.6L403.8 176.1L402.2 175.8z" fill="#f848a8" stroke="#f848a8" stroke-width=".6"/><path d="M402.2 175.8L403.8 176.1L405.3 176.6L404.2 179.4L403 179L401.7 178.7z" fill="#f04088" stroke="#f04088" stroke-width=".6"/><path d="M401.7 178.7L403 179L404.2 179.4L403.1 182.2L402.2 181.9L401.2 181.7z" fill="#ec4050" stroke="#ec4050" stroke-width=".6"/><path d="M401.2 181.7L402.2 181.9L403.1 182.2L402.1 185L401.4 184.8L400.7 184.7z" fill="#f05030" stroke="#f05030" stroke-width=".6"/><path d="M408.5 168.1L410.9 169.2L413.2 170.6L411.5 173.1L409.5 171.9L407.4 170.9z" fill="#ff8ad4" stroke="#ff8ad4" stroke-width=".6"/><path d="M407.4 170.9L409.5 171.9L411.5 173.1L409.7 175.5L408.1 174.5L406.3 173.8z" fill="#ff5cc0" stroke="#ff5cc0" stroke-width=".6"/><path d="M406.3 173.8L408.1 174.5L409.7 175.5L408 178L406.7 177.2L405.3 176.6z" fill="#f848a8" stroke="#f848a8" stroke-width=".6"/><path d="M405.3 176.6L406.7 177.2L408 178L406.3 180.5L405.3 179.9L404.2 179.4z" fill="#f04088" stroke="#f04088" stroke-width=".6"/><path d="M404.2 179.4L405.3 179.9L406.3 180.5L404.5 182.9L403.9 182.5L403.1 182.2z" fill="#ec4050" stroke="#ec4050" stroke-width=".6"/><path d="M403.1 182.2L403.9 182.5L404.5 182.9L402.8 185.4L402.5 185.2L402.1 185z" fill="#f05030" stroke="#f05030" stroke-width=".6"/><path d="M413.2 170.6L415.3 172.4L417.1 174.3L414.9 176.3L413.3 174.6L411.5 173.1z" fill="#ff8ad4" stroke="#ff8ad4" stroke-width=".6"/><path d="M411.5 173.1L413.3 174.6L414.9 176.3L412.6 178.3L411.3 176.8L409.7 175.5z" fill="#ff5cc0" stroke="#ff5cc0" stroke-width=".6"/><path d="M409.7 175.5L411.3 176.8L412.6 178.3L410.4 180.2L409.2 179L408 178z" fill="#f848a8" stroke="#f848a8" stroke-width=".6"/><path d="M408 178L409.2 179L410.4 180.2L408.2 182.2L407.2 181.2L406.3 180.5z" fill="#f04088" stroke="#f04088" stroke-width=".6"/><path d="M406.3 180.5L407.2 181.2L408.2 182.2L406 184.2L405.2 183.4L404.5 182.9z" fill="#ec4050" stroke="#ec4050" stroke-width=".6"/><path d="M404.5 182.9L405.2 183.4L406 184.2L403.8 186.1L403.2 185.6L402.8 185.4z" fill="#f05030" stroke="#f05030" stroke-width=".6"/><path d="M417.1 174.3L418.6 176.3L420 178.5L417.5 180L416.3 178.1L414.9 176.3z" fill="#ff8ad4" stroke="#ff8ad4" stroke-width=".6"/><path d="M414.9 176.3L416.3 178.1L417.5 180L415 181.5L413.9 179.8L412.6 178.3z" fill="#ff5cc0" stroke="#ff5cc0" stroke-width=".6"/><path d="M412.6 178.3L413.9 179.8L415 181.5L412.5 183.1L411.5 181.6L410.4 180.2z" fill="#f848a8" stroke="#f848a8" stroke-width=".6"/><path d="M410.4 180.2L411.5 181.6L412.5 183.1L410 184.6L409.2 183.3L408.2 182.2z" fill="#f04088" stroke="#f04088" stroke-width=".6"/><path d="M408.2 182.2L409.2 183.3L410 184.6L407.5 186.1L406.8 185.1L406 184.2z" fill="#ec4050" stroke="#ec4050" stroke-width=".6"/><path d="M406 184.2L406.8 185.1L407.5 186.1L405.1 187.7L404.4 186.8L403.8 186.1z" fill="#f05030" stroke="#f05030" stroke-width=".6"/><path d="M420 178.5L421.1 180.7L421.9 183L419.3 184L418.5 182L417.5 180z" fill="#ff8ad4" stroke="#ff8ad4" stroke-width=".6"/><path d="M417.5 180L418.5 182L419.3 184L416.6 185L415.9 183.2L415 181.5z" fill="#ff5cc0" stroke="#ff5cc0" stroke-width=".6"/><path d="M415 181.5L415.9 183.2L416.6 185L414 186L413.4 184.5L412.5 183.1z" fill="#f848a8" stroke="#f848a8" stroke-width=".6"/><path d="M412.5 183.1L413.4 184.5L414 186L411.4 187L410.8 185.8L410 184.6z" fill="#f04088" stroke="#f04088" stroke-width=".6"/><path d="M410 184.6L410.8 185.8L411.4 187L408.7 188L408.2 187.1L407.5 186.1z" fill="#ec4050" stroke="#ec4050" stroke-width=".6"/><path d="M407.5 186.1L408.2 187.1L408.7 188L406.1 189L405.6 188.4L405.1 187.7z" fill="#f05030" stroke="#f05030" stroke-width=".6"/><path d="M421.9 183L422.5 185.4L422.8 187.8L420.1 188.2L419.8 186.1L419.3 184z" fill="#ff8ad4" stroke="#ff8ad4" stroke-width=".6"/><path d="M419.3 184L419.8 186.1L420.1 188.2L417.4 188.6L417.1 186.8L416.6 185z" fill="#ff5cc0" stroke="#ff5cc0" stroke-width=".6"/><path d="M416.6 185L417.1 186.8L417.4 188.6L414.8 189L414.5 187.5L414 186z" fill="#f848a8" stroke="#f848a8" stroke-width=".6"/><path d="M414 186L414.5 187.5L414.8 189L412.1 189.4L411.8 188.1L411.4 187z" fill="#f04088" stroke="#f04088" stroke-width=".6"/><path d="M411.4 187L411.8 188.1L412.1 189.4L409.4 189.8L409.1 188.8L408.7 188z" fill="#ec4050" stroke="#ec4050" stroke-width=".6"/><path d="M408.7 188L409.1 188.8L409.4 189.8L406.7 190.2L406.4 189.5L406.1 189z" fill="#f05030" stroke="#f05030" stroke-width=".6"/><path d="M422.8 187.8L422.7 190.2L422.5 192.5L420 192.3L420.1 190.3L420.1 188.2z" fill="#ff87b8" stroke="#ff87b8" stroke-width=".6"/><path d="M420.1 188.2L420.1 190.3L420 192.3L417.4 192.2L417.5 190.4L417.4 188.6z" fill="#fe59a1" stroke="#fe59a1" stroke-width=".6"/><path d="M417.4 188.6L417.5 190.4L417.4 192.2L414.9 192.1L414.9 190.6L414.8 189z" fill="#f64589" stroke="#f64589" stroke-width=".6"/><path d="M414.8 189L414.9 190.6L414.9 192.1L412.4 192L412.3 190.7L412.1 189.4z" fill="#ee3d6e" stroke="#ee3d6e" stroke-width=".6"/><path d="M412.1 189.4L412.3 190.7L412.4 192L409.9 191.9L409.7 190.8L409.4 189.8z" fill="#e93b42" stroke="#e93b42" stroke-width=".6"/><path d="M409.4 189.8L409.7 190.8L409.9 191.9L407.3 191.8L407.1 190.9L406.7 190.2z" fill="#e74627" stroke="#e74627" stroke-width=".6"/><path d="M422.5 192.5L422 194.6L421.3 196.7L419 196.1L419.6 194.3L420 192.3z" fill="#ff8398" stroke="#ff8398" stroke-width=".6"/><path d="M420 192.3L419.6 194.3L419 196.1L416.8 195.6L417.2 193.9L417.4 192.2z" fill="#fc577f" stroke="#fc577f" stroke-width=".6"/><path d="M417.4 192.2L417.2 193.9L416.8 195.6L414.5 195L414.8 193.6L414.9 192.1z" fill="#f44167" stroke="#f44167" stroke-width=".6"/><path d="M414.9 192.1L414.8 193.6L414.5 195L412.2 194.4L412.4 193.3L412.4 192z" fill="#ec3952" stroke="#ec3952" stroke-width=".6"/><path d="M412.4 192L412.4 193.3L412.2 194.4L410 193.9L410 192.9L409.9 191.9z" fill="#e73533" stroke="#e73533" stroke-width=".6"/><path d="M409.9 191.9L410 192.9L410 193.9L407.7 193.3L407.6 192.6L407.3 191.8z" fill="#de3a1e" stroke="#de3a1e" stroke-width=".6"/><path d="M421.3 196.7L420.3 198.7L419.2 200.5L417.3 199.6L418.2 197.9L419 196.1z" fill="#ff7f79" stroke="#ff7f79" stroke-width=".6"/><path d="M419 196.1L418.2 197.9L417.3 199.6L415.4 198.6L416.2 197.1L416.8 195.6z" fill="#fa545d" stroke="#fa545d" stroke-width=".6"/><path d="M416.8 195.6L416.2 197.1L415.4 198.6L413.5 197.6L414.1 196.3L414.5 195z" fill="#f23d45" stroke="#f23d45" stroke-width=".6"/><path d="M414.5 195L414.1 196.3L413.5 197.6L411.6 196.7L412 195.5L412.2 194.4z" fill="#ea3535" stroke="#ea3535" stroke-width=".6"/><path d="M412.2 194.4L412 195.5L411.6 196.7L409.7 195.7L409.9 194.7L410 193.9z" fill="#e42f24" stroke="#e42f24" stroke-width=".6"/><path d="M410 193.9L409.9 194.7L409.7 195.7L407.8 194.7L407.8 194L407.7 193.3z" fill="#d42f14" stroke="#d42f14" stroke-width=".6"/><path d="M419.2 200.5L417.8 202.1L416.4 203.6L414.9 202.4L416.1 201L417.3 199.6z" fill="#ff7b59" stroke="#ff7b59" stroke-width=".6"/><path d="M417.3 199.6L416.1 201L414.9 202.4L413.4 201.2L414.5 200L415.4 198.6z" fill="#f8513a" stroke="#f8513a" stroke-width=".6"/><path d="M415.4 198.6L414.5 200L413.4 201.2L411.9 200L412.8 198.9L413.5 197.6z" fill="#f13922" stroke="#f13922" stroke-width=".6"/><path d="M413.5 197.6L412.8 198.9L411.9 200L410.5 198.9L411.1 197.8L411.6 196.7z" fill="#e93119" stroke="#e93119" stroke-width=".6"/><path d="M411.6 196.7L411.1 197.8L410.5 198.9L409 197.7L409.4 196.7L409.7 195.7z" fill="#e12a15" stroke="#e12a15" stroke-width=".6"/><path d="M409.7 195.7L409.4 196.7L409 197.7L407.5 196.5L407.7 195.6L407.8 194.7z" fill="#cb230b" stroke="#cb230b" stroke-width=".6"/><path d="M416.4 203.6L414.8 204.8L413 206L412 204.7L413.5 203.6L414.9 202.4z" fill="#ff7a50" stroke="#ff7a50" stroke-width=".6"/><path d="M414.9 202.4L413.5 203.6L412 204.7L411 203.3L412.3 202.3L413.4 201.2z" fill="#f85030" stroke="#f85030" stroke-width=".6"/><path d="M413.4 201.2L412.3 202.3L411 203.3L410 202L411 201.1L411.9 200z" fill="#f03818" stroke="#f03818" stroke-width=".6"/><path d="M411.9 200L411 201.1L410 202L409 200.7L409.8 199.8L410.5 198.9z" fill="#e83010" stroke="#e83010" stroke-width=".6"/><path d="M410.5 198.9L409.8 199.8L409 200.7L408 199.3L408.5 198.6L409 197.7z" fill="#e02810" stroke="#e02810" stroke-width=".6"/><path d="M409 197.7L408.5 198.6L408 199.3L407 198L407.2 197.4L407.5 196.5z" fill="#c82008" stroke="#c82008" stroke-width=".6"/><path d="M413 206L410.9 206.9L408.9 207.5L408.3 206.2L410.2 205.5L412 204.7z" fill="#ff7a50" stroke="#ff7a50" stroke-width=".6"/><path d="M412 204.7L410.2 205.5L408.3 206.2L407.8 204.8L409.5 204.2L411 203.3z" fill="#f85030" stroke="#f85030" stroke-width=".6"/><path d="M411 203.3L409.5 204.2L407.8 204.8L407.3 203.4L408.8 202.8L410 202z" fill="#f03818" stroke="#f03818" stroke-width=".6"/><path d="M410 202L408.8 202.8L407.3 203.4L406.8 202L408.1 201.4L409 200.7z" fill="#e83010" stroke="#e83010" stroke-width=".6"/><path d="M409 200.7L408.1 201.4L406.8 202L406.2 200.7L407.3 200L408 199.3z" fill="#e02810" stroke="#e02810" stroke-width=".6"/><path d="M408 199.3L407.3 200L406.2 200.7L405.7 199.3L406.6 198.6L407 198z" fill="#c82008" stroke="#c82008" stroke-width=".6"/><path d="M408.9 207.5L406.9 207.9L405.2 208.1L404.9 206.9L406.5 206.6L408.3 206.2z" fill="#ff7a50" stroke="#ff7a50" stroke-width=".6"/><path d="M408.3 206.2L406.5 206.6L404.9 206.9L404.6 205.6L406.1 205.3L407.8 204.8z" fill="#f85030" stroke="#f85030" stroke-width=".6"/><path d="M407.8 204.8L406.1 205.3L404.6 205.6L404.2 204.4L405.7 203.9L407.3 203.4z" fill="#f03818" stroke="#f03818" stroke-width=".6"/><path d="M407.3 203.4L405.7 203.9L404.2 204.4L403.9 203.1L405.3 202.6L406.8 202z" fill="#e83010" stroke="#e83010" stroke-width=".6"/><path d="M406.8 202L405.3 202.6L403.9 203.1L403.5 201.9L404.9 201.3L406.2 200.7z" fill="#e02810" stroke="#e02810" stroke-width=".6"/><path d="M406.2 200.7L404.9 201.3L403.5 201.9L403.2 200.6L404.5 200L405.7 199.3z" fill="#c82008" stroke="#c82008" stroke-width=".6"/><path d="M405.2 208.1L403.9 208.2L403 208.3L402.7 207.2L403.6 207.1L404.9 206.9z" fill="#ff7a50" stroke="#ff7a50" stroke-width=".6"/><path d="M404.9 206.9L403.6 207.1L402.7 207.2L402.3 206.1L403.2 205.9L404.6 205.6z" fill="#f85030" stroke="#f85030" stroke-width=".6"/><path d="M404.6 205.6L403.2 205.9L402.3 206.1L402 205L402.9 204.7L404.2 204.4z" fill="#f03818" stroke="#f03818" stroke-width=".6"/><path d="M404.2 204.4L402.9 204.7L402 205L401.7 203.9L402.6 203.5L403.9 203.1z" fill="#e83010" stroke="#e83010" stroke-width=".6"/><path d="M403.9 203.1L402.6 203.5L401.7 203.9L401.3 202.8L402.2 202.4L403.5 201.9z" fill="#e02810" stroke="#e02810" stroke-width=".6"/><path d="M403.5 201.9L402.2 202.4L401.3 202.8L401 201.7L401.9 201.2L403.2 200.6z" fill="#c82008" stroke="#c82008" stroke-width=".6"/><path d="M506 320L520 296 542 300 557 322 554 349 541 351 529 348 514 342z" fill="#a8701a"/><path d="M358 188.5c0.5 0.2 1.8 0.7 2.9 1.1c1.1 0.5 2.5 1 3.6 1.5c1.1 0.4 2 0.8 3 1.2c1 0.4 1.9 0.8 2.8 1.2c1 0.5 1.9 1 2.7 1.4c0.8 0.4 1.7 0.9 2 1.1" stroke="#f02a10" stroke-width="2.9"/><path d="M358 188.5c0.4 0.4 1.4 1.3 2.4 2c0.9 0.8 2.1 1.8 3.1 2.4c1.1 0.7 2.1 1.1 3.1 1.5c1 0.5 2 0.8 3.1 1.1c1 0.2 2.1 0.3 3 0.4c0.9 0.1 1.9 0.1 2.3 0.1" stroke="#e84018" stroke-width="2.9"/><path d="M540.9 303.7c1.1 0.1 3.9 0.1 6.5 0.8c2.6 0.7 6.4 1.7 9.2 3.4c2.7 1.6 5.1 4 7.1 6.4c2.1 2.3 3.9 5.1 5.1 7.8c1.2 2.6 1.8 5.5 1.9 8.4c0.1 2.8-0.1 6.1-1.2 8.9c-1.2 2.7-4 5.6-5.7 7.4c-1.8 1.7-3.9 2.5-4.7 3" stroke="#f02a10" stroke-width="4.9"/><path d="M540.5 304.2c1 0.3 3.6 0.8 6 1.8c2.3 0.9 5.5 2.2 7.8 3.9c2.4 1.7 4.4 4.1 6.2 6.4c1.7 2.2 3.3 4.8 4.4 7.3c1 2.5 1.7 5 1.9 7.5c0.2 2.6 0.1 5.3-0.7 7.7c-0.9 2.4-3 5-4.4 6.8c-1.4 1.7-3.2 2.9-3.8 3.5" stroke="#f83810" stroke-width="4.9"/><path d="M540.2 304.7c0.9 0.5 3.3 1.6 5.3 2.8c2 1.2 4.7 2.7 6.6 4.5c2 1.8 3.6 4 5.1 6.3c1.5 2.2 2.8 4.6 3.8 6.9c0.9 2.3 1.5 4.5 1.8 6.6c0.3 2.2 0.4 4.4-0.1 6.5c-0.5 2.1-2 4.4-3 6.1c-1.1 1.6-2.6 3.3-3.1 4" stroke="#ff6410" stroke-width="4.9"/><path d="M539.8 305.3c0.8 0.6 3 2.2 4.7 3.6c1.7 1.5 3.8 3.2 5.4 5.1c1.6 1.9 2.8 4.1 4 6.2c1.2 2.2 2.3 4.5 3.1 6.6c0.9 2 1.4 3.9 1.8 5.7c0.4 1.9 0.7 3.5 0.5 5.2c-0.2 1.8-1 3.8-1.7 5.4c-0.7 1.7-1.9 3.8-2.2 4.5" stroke="#ff8418" stroke-width="4.9"/><path d="M539.5 305.8c0.7 0.8 2.7 2.9 4 4.6c1.4 1.7 3 3.7 4.2 5.7c1.2 2 2 4.1 3 6.1c0.9 2.1 1.7 4.3 2.4 6.2c0.7 1.8 1.3 3.4 1.8 4.8c0.4 1.5 0.9 2.5 1 4c0.1 1.4-0.1 3.1-0.4 4.7c-0.3 1.7-1.1 4.2-1.4 5" stroke="#d87a18" stroke-width="4.9"/><path d="M539.1 306.3c0.6 0.9 2.4 3.6 3.5 5.5c1 2 2 4.3 2.8 6.3c0.8 2.1 1.4 4.2 2 6.1c0.6 2 1.2 4.1 1.8 5.7c0.6 1.7 1.1 2.9 1.7 4c0.5 1.1 1.2 1.6 1.6 2.7c0.5 1.2 0.9 2.5 1 4.1c0.1 1.6-0.5 4.6-0.6 5.5" stroke="#b06a1c" stroke-width="4.9"/><path d="M531.8 316.8c0.8 0.8 2.8 2.9 4.4 4.7c1.5 1.8 3.5 3.9 5.1 5.9c1.6 2 3 4.1 4.3 6.2c1.4 2.1 2.9 4.4 3.8 6.3c0.9 1.9 1.3 3.7 1.6 5.1c0.3 1.3 0.2 2.5 0.2 3" stroke="#c87c18" stroke-width="3.2"/><path d="M529.9 318.1c0.7 0.8 2.6 3 4.1 4.8c1.5 1.9 3.4 4.1 5 6.2c1.5 2 3 4.1 4.4 6.2c1.4 2 3 4.3 3.9 6.1c1 1.8 1.4 3.5 1.8 4.8c0.4 1.2 0.5 2.3 0.5 2.8" stroke="#8a5414" stroke-width="3.2"/><path d="M527.9 319.4c0.7 0.8 2.4 3.1 3.9 5c1.5 1.9 3.3 4.2 4.8 6.3c1.6 2.1 3.2 4.2 4.6 6.3c1.4 2 3 4.2 4 6c1 1.7 1.6 3.2 2.1 4.4c0.4 1.1 0.7 2.1 0.8 2.6" stroke="#e09020" stroke-width="3.2"/><path d="M526 320.7c0.6 0.9 2.2 3.2 3.6 5.1c1.4 2 3.2 4.4 4.7 6.6c1.6 2.1 3.2 4.3 4.7 6.3c1.4 2 3 4.1 4.1 5.8c1.1 1.6 1.7 3 2.3 4.1c0.6 1 1 2 1.1 2.4" stroke="#9a6018" stroke-width="3.2"/><path d="M524 322c0.6 0.9 2.1 3.2 3.4 5.2c1.4 2.1 3 4.6 4.6 6.8c1.6 2.2 3.2 4.4 4.8 6.4c1.5 2 3.1 4 4.2 5.6c1.1 1.6 1.9 2.8 2.6 3.8c0.6 0.9 1.2 1.8 1.4 2.2" stroke="#e8981c" stroke-width="3.2"/><path d="M522 323.3c0.6 0.9 2 3.3 3.3 5.4c1.2 2 2.8 4.7 4.4 6.9c1.5 2.3 3.3 4.5 4.8 6.5c1.6 2 3.2 3.9 4.4 5.4c1.2 1.5 2.1 2.5 2.8 3.4c0.8 1 1.5 1.8 1.8 2.1" stroke="#8a5414" stroke-width="3.2"/><path d="M520.1 324.6c0.5 0.9 1.8 3.4 3 5.5c1.2 2.1 2.7 4.9 4.3 7.2c1.5 2.3 3.3 4.5 4.9 6.5c1.6 1.9 3.2 3.8 4.5 5.2c1.3 1.4 2.2 2.3 3.1 3.1c0.8 0.9 1.7 1.6 2 1.9" stroke="#d08018" stroke-width="3.2"/><path d="M518.1 325.9c0.5 0.9 1.6 3.5 2.8 5.7c1.1 2.1 2.6 5 4.1 7.3c1.6 2.4 3.5 4.6 5.1 6.6c1.6 1.9 3.3 3.8 4.6 5.1c1.3 1.3 2.4 2 3.3 2.7c1 0.8 2 1.4 2.4 1.7" stroke="#a86818" stroke-width="3.2"/><path d="M516.2 327.2c0.4 0.9 1.4 3.6 2.5 5.8c1.1 2.2 2.5 5.2 4 7.6c1.5 2.3 3.5 4.7 5.2 6.6c1.6 1.9 3.3 3.7 4.7 4.9c1.4 1.2 2.5 1.8 3.6 2.4c1 0.7 2.2 1.3 2.6 1.5" stroke="#e89a20" stroke-width="3.2"/><path d="M527.1 335.8c0.7 0.5 2.4 1.7 3.7 3.1c1.3 1.3 3.3 3.3 4.3 5.1c1 1.8 1.4 3.7 1.8 5.7c0.4 1.9 0.5 3.8 0.6 5.7c0.1 1.9 0.2 3.9 0.2 5.7c-0.1 1.8-0.2 3.5-0.6 5.4c-0.3 1.9-1 4.3-1.5 6c-0.5 1.7-1.2 3.7-1.4 4.4" stroke="#eca018" stroke-width="2.7"/><path d="M526 336.5c0.5 0.5 2 1.8 3.2 3.2c1.1 1.4 2.8 3.4 3.7 5.1c0.9 1.8 1.3 3.7 1.8 5.5c0.4 1.9 0.6 3.7 0.8 5.6c0.2 1.8 0.3 3.7 0.4 5.5c0 1.7 0 3.4-0.2 5.3c-0.2 1.8-0.7 4.1-1 5.8c-0.3 1.7-0.8 3.7-1 4.5" stroke="#e87818" stroke-width="2.7"/><path d="M524.8 337.1c0.4 0.6 1.7 2 2.7 3.5c1 1.4 2.4 3.4 3.2 5.1c0.9 1.7 1.3 3.5 1.8 5.3c0.4 1.7 0.7 3.6 1 5.3c0.3 1.8 0.5 3.6 0.6 5.3c0.1 1.8 0.2 3.4 0.1 5.2c0 1.8-0.3 4.1-0.4 5.8c-0.2 1.7-0.5 3.6-0.6 4.4" stroke="#ff8418" stroke-width="2.7"/><path d="M523.6 337.7c0.4 0.6 1.5 2.3 2.3 3.7c0.8 1.5 1.9 3.5 2.7 5.2c0.7 1.7 1.2 3.3 1.7 5c0.5 1.7 0.9 3.5 1.2 5.2c0.3 1.7 0.6 3.4 0.8 5.1c0.2 1.7 0.3 3.2 0.4 5c0.1 1.8 0.1 4 0.1 5.7c0 1.7 0 3.7-0.1 4.4" stroke="#eca018" stroke-width="2.7"/><path d="M522.4 338.3c0.3 0.7 1.2 2.5 1.8 4c0.7 1.5 1.6 3.5 2.2 5.1c0.7 1.7 1.2 3.2 1.7 4.9c0.5 1.6 1 3.3 1.4 4.9c0.4 1.7 0.7 3.3 1 4.9c0.3 1.7 0.5 3.2 0.8 5c0.2 1.7 0.4 3.9 0.6 5.5c0.1 1.7 0.3 3.7 0.4 4.4" stroke="#f0e020" stroke-width="2.7"/><path d="M521.2 338.9c0.3 0.7 0.9 2.7 1.4 4.3c0.5 1.5 1.1 3.5 1.7 5.1c0.5 1.6 1.1 3.1 1.6 4.6c0.5 1.6 1.1 3.2 1.6 4.8c0.5 1.5 0.8 3.1 1.2 4.7c0.4 1.6 0.7 3.1 1.1 4.8c0.4 1.7 0.8 3.8 1.1 5.5c0.4 1.6 0.7 3.6 0.9 4.3" stroke="#f0e020" stroke-width="2.7"/><path d="M520 339.5c0.2 0.8 0.6 2.9 1 4.5c0.3 1.6 0.6 3.6 1.1 5.2c0.4 1.6 1 2.9 1.6 4.4c0.6 1.5 1.3 3 1.8 4.5c0.5 1.5 1 3 1.4 4.5c0.5 1.6 0.9 3.1 1.4 4.7c0.5 1.7 1.2 3.8 1.7 5.4c0.5 1.6 1.1 3.6 1.3 4.3" stroke="#88cc28" stroke-width="2.7"/><path d="M518.9 340.2c0 0.7 0.2 3 0.4 4.7c0.2 1.6 0.3 3.6 0.6 5.1c0.4 1.6 1 2.8 1.6 4.2c0.6 1.4 1.4 2.9 2 4.4c0.6 1.4 1.1 2.8 1.6 4.3c0.6 1.5 1.1 2.9 1.8 4.6c0.6 1.6 1.5 3.7 2.2 5.3c0.6 1.6 1.4 3.5 1.7 4.3" stroke="#22b050" stroke-width="2.7"/><path d="M480.8 173.6c-0.9 0.1-2.7-0.1-5.2 1c-2.4 1.1-6.7 3.5-9.5 5.8c-2.7 2.3-5.1 4.5-7.2 8c-2 3.5-4.3 8.5-5 13.1c-0.7 4.7 0.4 10.9 0.9 14.8c0.6 4 1.3 6 2.5 9.2c1.2 3.1 3.7 7.3 4.9 9.6c1.1 2.3 1.2 2.7 1.8 4.2c0.7 1.5 1.9 4.5 2 4.7c0.1 0.2-1.1-2.4-1.3-3.8c-0.3-1.3-0.5-2.6-0.2-4.1c0.4-1.5 1.4-3.8 2.3-4.9c0.9-1.1 2.5-1.7 2.9-1.6c0.4 0.1 0.1 1.5-0.5 2.4c-0.6 0.9-1.7 2-3.2 3.1c-1.5 1.2-3.7 2.5-5.7 3.8c-2 1.2-4.4 2.6-6.3 3.8c-2 1.2-3.6 2.4-5.4 3.3c-1.9 0.8-3.7 1.6-5.8 2c-2.2 0.4-6.1 0.3-7.3 0.4" stroke="#123a98" stroke-width="1.8"/><path d="M481 173.8c-0.8 0.2-2.7 0-5.1 1.1c-2.4 1.2-6.5 3.6-9.2 5.9c-2.7 2.2-5 4.4-6.9 7.9c-2 3.4-4.2 8.3-4.8 12.8c-0.7 4.6 0.4 10.5 1 14.4c0.6 3.9 1.3 5.9 2.5 8.9c1.2 3.1 3.7 7.2 4.8 9.5c1.2 2.3 1.3 2.7 2 4.2c0.7 1.5 2 4.6 2.1 4.8c0.1 0.3-1-2.1-1.2-3.3c-0.2-1.1-0.5-2.3-0.2-3.6c0.4-1.3 1.4-3.4 2.1-4.4c0.8-0.9 2.3-1.4 2.5-1.2c0.3 0.1-0.1 1.5-0.8 2.4c-0.7 0.9-1.9 2-3.4 3.1c-1.6 1.1-3.9 2.4-5.9 3.6c-2.1 1.2-4.5 2.6-6.5 3.7c-2 1.1-3.6 2.2-5.5 3c-1.9 0.8-3.7 1.5-5.9 1.9c-2.2 0.3-6 0.1-7.2 0.2" stroke="#1650b0" stroke-width="1.8"/><path d="M481.2 174c-0.8 0.2-2.7 0.1-5 1.3c-2.3 1.2-6.3 3.5-8.9 5.8c-2.6 2.3-4.8 4.5-6.7 7.9c-1.9 3.4-4 8.1-4.5 12.5c-0.6 4.4 0.4 10.1 1 13.9c0.6 3.8 1.4 5.8 2.6 8.8c1.2 3 3.6 7 4.8 9.2c1.1 2.3 1.4 2.8 2.1 4.4c0.7 1.5 2 4.5 2.2 4.8c0.1 0.4-0.9-1.8-1.1-2.8c-0.2-1-0.4-1.9-0.1-3.1c0.3-1.1 1.2-3 1.8-3.8c0.7-0.8 2-1.3 2.2-1c0.1 0.2-0.4 1.5-1.2 2.5c-0.8 0.9-2 2-3.6 3.1c-1.7 1.1-4 2.3-6.1 3.5c-2.1 1.1-4.5 2.4-6.6 3.5c-2 1-3.7 2.1-5.7 2.8c-1.9 0.7-3.7 1.3-5.9 1.6c-2.2 0.3-5.9 0-7.1 0" stroke="#1a6cc8" stroke-width="1.8"/><path d="M481.4 174.2c-0.8 0.2-2.6 0.2-4.9 1.4c-2.2 1.2-6.1 3.6-8.6 5.9c-2.5 2.3-4.6 4.4-6.4 7.8c-1.8 3.3-3.8 7.9-4.4 12.2c-0.5 4.3 0.5 9.8 1.2 13.5c0.6 3.6 1.3 5.6 2.6 8.5c1.2 3 3.6 6.8 4.7 9.1c1.2 2.2 1.5 2.9 2.3 4.4c0.7 1.6 2 4.5 2.2 4.9c0.2 0.5-0.7-1.5-0.8-2.3c-0.2-0.8-0.4-1.6-0.2-2.6c0.3-1 1.1-2.6 1.6-3.3c0.6-0.7 1.7-1 1.8-0.7c0 0.4-0.6 1.6-1.5 2.6c-0.9 0.9-2.2 2-3.9 3.1c-1.7 1-4 2.2-6.2 3.3c-2.2 1.2-4.6 2.4-6.7 3.3c-2.1 1-3.8 2-5.8 2.7c-2 0.7-3.9 1.1-6 1.3c-2.2 0.2-5.9-0.1-7.1-0.1" stroke="#1c90dc" stroke-width="1.8"/><path d="M481.6 174.4c-0.8 0.3-2.6 0.3-4.8 1.6c-2.2 1.2-5.9 3.6-8.3 5.8c-2.5 2.3-4.5 4.5-6.2 7.7c-1.7 3.3-3.6 7.8-4.1 11.9c-0.5 4.2 0.6 9.5 1.2 13.1c0.7 3.6 1.4 5.5 2.7 8.4c1.2 2.9 3.5 6.6 4.7 8.9c1.2 2.2 1.6 2.9 2.4 4.5c0.7 1.5 2 4.4 2.3 4.9c0.2 0.6-0.6-1.1-0.7-1.8c-0.1-0.7-0.3-1.3-0.1-2.1c0.2-0.8 0.9-2.2 1.3-2.8c0.5-0.5 1.5-0.7 1.4-0.3c-0.1 0.4-0.8 1.6-1.8 2.6c-0.9 0.9-2.4 2-4.1 3c-1.8 1.1-4.2 2.2-6.4 3.3c-2.2 1.1-4.7 2.2-6.8 3.1c-2.2 1-4 1.9-6 2.5c-2 0.6-3.9 0.9-6.1 1.1c-2.2 0.1-5.8-0.3-7-0.3" stroke="#1c78d4" stroke-width="1.8"/><path d="M481.8 174.6c-0.8 0.3-2.5 0.4-4.7 1.7c-2.1 1.3-5.7 3.7-8.1 5.9c-2.3 2.3-4.2 4.4-5.9 7.6c-1.6 3.2-3.4 7.6-3.8 11.6c-0.4 4.1 0.6 9.2 1.3 12.6c0.6 3.5 1.4 5.4 2.6 8.2c1.3 2.9 3.5 6.5 4.7 8.7c1.2 2.2 1.7 3 2.5 4.6c0.8 1.6 2.1 4.4 2.4 5c0.3 0.7-0.3-0.8-0.5-1.3c-0.1-0.5-0.3-0.9-0.1-1.6c0.2-0.6 0.8-1.8 1.1-2.2c0.4-0.4 1.2-0.5 1-0.1c-0.2 0.5-1 1.7-2 2.7c-1.1 0.9-2.6 2-4.4 3c-1.9 1-4.3 2.1-6.6 3.2c-2.2 1-4.8 2.1-6.9 2.9c-2.2 0.9-4.1 1.7-6.1 2.2c-2.1 0.6-4 0.8-6.2 0.9c-2.2 0.1-5.8-0.4-7-0.4" stroke="#1a62cc" stroke-width="1.8"/><path d="M482 174.8c-0.8 0.3-2.5 0.6-4.6 1.8c-2 1.3-5.6 3.7-7.8 6c-2.2 2.2-4.1 4.4-5.6 7.5c-1.5 3.2-3.2 7.4-3.6 11.3c-0.4 3.9 0.6 8.8 1.3 12.2c0.7 3.3 1.5 5.2 2.7 8c1.3 2.7 3.5 6.3 4.7 8.5c1.2 2.2 1.8 3 2.6 4.7c0.9 1.6 2.1 4.3 2.5 5c0.3 0.7-0.2-0.5-0.3-0.8c-0.1-0.3-0.3-0.6-0.2-1.1c0.2-0.4 0.7-1.4 0.9-1.7c0.3-0.2 0.9-0.2 0.6 0.3c-0.3 0.5-1.2 1.7-2.3 2.7c-1.2 0.9-2.8 2-4.7 3c-1.9 1-4.4 2-6.7 3c-2.3 1-4.8 2-7.1 2.8c-2.2 0.8-4.1 1.6-6.2 2c-2.1 0.5-4.1 0.6-6.3 0.6c-2.2 0-5.7-0.5-6.9-0.6" stroke="#5030b0" stroke-width="1.8"/><path d="M482.2 175c-0.8 0.3-2.5 0.7-4.5 2c-1.9 1.3-5.4 3.7-7.5 5.9c-2.2 2.3-3.9 4.4-5.4 7.5c-1.4 3.1-3 7.2-3.3 11c-0.4 3.8 0.6 8.4 1.3 11.7c0.7 3.3 1.6 5.2 2.8 7.8c1.2 2.7 3.4 6.2 4.7 8.4c1.2 2.1 1.8 3.1 2.7 4.7c0.9 1.7 2.1 4.4 2.5 5.1c0.4 0.8 0-0.2-0.1-0.3c0-0.2-0.2-0.3-0.1-0.6c0-0.3 0.5-1.1 0.6-1.2c0.2-0.1 0.6 0.1 0.2 0.6c-0.4 0.6-1.4 1.8-2.6 2.8c-1.3 0.9-2.9 2-4.9 2.9c-2 1-4.5 2.1-6.8 3c-2.4 0.9-5 1.9-7.3 2.6c-2.2 0.7-4.2 1.4-6.3 1.8c-2.2 0.4-4.2 0.4-6.4 0.4c-2.2-0.1-5.7-0.7-6.8-0.8" stroke="#6a22a8" stroke-width="1.8"/><path d="M482.3 175.2c-0.7 0.4-2.3 0.8-4.2 2.1c-2 1.4-5.3 3.8-7.3 6c-2.1 2.2-3.8 4.4-5.1 7.4c-1.4 3-2.9 7-3.2 10.6c-0.2 3.7 0.8 8.2 1.5 11.3c0.7 3.2 1.6 5.1 2.8 7.7c1.2 2.6 3.4 6 4.6 8.1c1.3 2.2 2 3.2 2.9 4.9c0.9 1.6 2.1 4.3 2.6 5.2c0.4 0.8 0.1 0 0 0.1c0 0-0.2 0-0.1-0.1c0-0.1 0.4-0.7 0.4-0.6c0.1 0 0.4 0.2-0.1 0.9c-0.6 0.6-1.7 1.8-3 2.8c-1.3 0.9-3.1 1.9-5.1 2.9c-2.1 1-4.6 2-7 2.8c-2.4 0.9-5.1 1.8-7.4 2.5c-2.3 0.7-4.4 1.3-6.5 1.6c-2.2 0.3-4.2 0.2-6.4 0.1c-2.2-0.1-5.7-0.8-6.8-0.9" stroke="#4a1c9c" stroke-width="1.8"/><path d="M482.5 175.4c-0.7 0.4-2.3 0.9-4.1 2.3c-1.9 1.3-5.1 3.7-7.1 6c-1.9 2.2-3.5 4.3-4.8 7.3c-1.3 2.9-2.6 6.8-2.9 10.3c-0.2 3.6 0.8 7.8 1.5 10.9c0.7 3 1.6 4.9 2.9 7.5c1.2 2.5 3.3 5.7 4.6 7.9c1.2 2.1 2 3.2 2.9 4.9c1 1.7 2.3 4.3 2.8 5.3c0.4 0.9 0.2 0.4 0.2 0.5c0 0.2-0.2 0.5-0.2 0.5c0 0.1 0.3-0.3 0.2-0.1c0 0.2 0.1 0.5-0.5 1.2c-0.7 0.7-1.8 1.9-3.3 2.9c-1.4 0.9-3.3 1.9-5.4 2.9c-2 0.9-4.7 1.9-7.1 2.7c-2.5 0.8-5.2 1.7-7.5 2.3c-2.4 0.6-4.5 1.2-6.7 1.4c-2.2 0.2-4.3 0.1-6.5-0.2c-2.2-0.2-5.6-0.9-6.7-1.1" stroke="#162c98" stroke-width="1.8"/><path d="M482.7 175.6c-0.7 0.4-2.2 1-4 2.4c-1.8 1.4-4.9 3.8-6.8 6c-1.9 2.2-3.3 4.4-4.5 7.3c-1.2 2.9-2.5 6.6-2.7 10c-0.2 3.4 0.8 7.5 1.6 10.4c0.7 3 1.6 4.8 2.9 7.3c1.2 2.5 3.3 5.6 4.5 7.7c1.3 2.2 2.1 3.3 3.1 5.1c1 1.7 2.3 4.2 2.8 5.3c0.5 1 0.4 0.7 0.4 1c0.1 0.4-0.1 0.8-0.1 1c-0.1 0.3 0.1 0.1 0 0.5c-0.2 0.3-0.3 0.7-1 1.4c-0.8 0.8-2 2-3.6 3c-1.5 0.9-3.4 1.9-5.6 2.8c-2.1 1-4.8 1.9-7.3 2.7c-2.5 0.7-5.2 1.5-7.6 2.1c-2.4 0.5-4.6 1-6.8 1.1c-2.3 0.2-4.4 0-6.6-0.3c-2.2-0.3-5.6-1.1-6.7-1.3" stroke="#1a62cc" stroke-width="1.8"/><path d="M482.9 175.9c-0.6 0.4-2.2 1-3.9 2.4c-1.8 1.5-4.7 3.9-6.5 6.1c-1.8 2.2-3.2 4.4-4.3 7.2c-1.1 2.8-2.3 6.4-2.4 9.7c-0.1 3.3 0.8 7.1 1.6 9.9c0.8 2.9 1.7 4.7 2.9 7.2c1.3 2.4 3.3 5.4 4.6 7.5c1.3 2.1 2.2 3.4 3.2 5.1c1 1.8 2.3 4.2 2.9 5.4c0.5 1.1 0.5 1 0.6 1.5c0 0.5-0.1 1.1-0.2 1.5c-0.1 0.5 0 0.5-0.2 1c-0.3 0.4-0.5 1-1.4 1.8c-0.9 0.8-2.2 2-3.9 3c-1.6 1-3.6 1.9-5.8 2.8c-2.2 0.9-5 1.8-7.5 2.5c-2.5 0.8-5.3 1.5-7.8 1.9c-2.4 0.5-4.6 1-6.9 1c-2.2 0.1-4.4-0.2-6.6-0.6c-2.3-0.3-5.6-1.2-6.7-1.4" stroke="#1c90dc" stroke-width="1.8"/><path d="M483.1 176.1c-0.6 0.4-2.2 1.1-3.8 2.6c-1.7 1.4-4.5 3.8-6.2 6c-1.7 2.2-3 4.4-4.1 7.2c-1 2.7-2 6.2-2.1 9.4c-0.1 3.1 0.9 6.7 1.6 9.5c0.8 2.7 1.8 4.5 3 6.9c1.3 2.4 3.2 5.3 4.5 7.4c1.4 2.1 2.3 3.4 3.4 5.2c1 1.7 2.3 4.1 2.9 5.4c0.6 1.2 0.7 1.3 0.8 2c0.1 0.7-0.1 1.5-0.2 2c-0.1 0.6-0.1 0.9-0.4 1.5c-0.4 0.6-0.8 1.3-1.8 2.1c-1 0.9-2.4 2.1-4.1 3.1c-1.8 1-3.9 1.9-6.1 2.8c-2.3 0.9-5.1 1.7-7.7 2.4c-2.6 0.7-5.4 1.3-7.9 1.7c-2.5 0.5-4.7 0.8-7 0.8c-2.3 0-4.6-0.4-6.8-0.8c-2.2-0.5-5.5-1.4-6.6-1.7" stroke="#22a4e2" stroke-width="1.8"/><path d="M483.3 176.3c-0.6 0.4-2.1 1.3-3.7 2.7c-1.6 1.5-4.3 3.9-5.9 6.1c-1.7 2.2-2.9 4.4-3.8 7c-1 2.7-1.9 6.1-1.9 9.1c-0.1 3.1 0.9 6.5 1.7 9.1c0.8 2.7 1.8 4.4 3 6.8c1.3 2.3 3.2 5.1 4.5 7.1c1.3 2.1 2.4 3.5 3.5 5.3c1 1.8 2.3 4.1 3 5.5c0.6 1.3 0.8 1.7 0.9 2.5c0.2 0.8 0 1.8-0.1 2.6c-0.2 0.7-0.3 1.2-0.7 2c-0.5 0.7-1.1 1.5-2.2 2.4c-1.1 0.9-2.6 2.1-4.4 3.1c-1.8 1-4 1.9-6.4 2.8c-2.3 0.8-5.1 1.6-7.8 2.2c-2.6 0.7-5.5 1.3-8 1.6c-2.5 0.4-4.9 0.7-7.2 0.6c-2.3-0.1-4.6-0.6-6.8-1.1c-2.2-0.5-5.5-1.5-6.5-1.8" stroke="#20b8e8" stroke-width="1.8"/><path d="M483.5 176.5c-0.6 0.5-2.1 1.4-3.6 2.9c-1.6 1.5-4.1 3.9-5.7 6.1c-1.5 2.1-2.6 4.3-3.5 6.9c-0.8 2.7-1.7 5.9-1.7 8.8c0.1 2.9 1 6.1 1.8 8.7c0.8 2.5 1.8 4.3 3.1 6.5c1.2 2.3 3.1 4.9 4.5 7c1.3 2 2.4 3.5 3.5 5.4c1.1 1.8 2.4 4.1 3.1 5.5c0.7 1.4 1 2 1.2 3c0.1 1 0 2.1-0.2 3.1c-0.2 0.9-0.4 1.6-0.9 2.5c-0.6 0.9-1.3 1.7-2.5 2.7c-1.3 1-2.9 2.2-4.8 3.2c-1.9 1-4.2 1.9-6.6 2.7c-2.4 0.9-5.3 1.6-8 2.2c-2.6 0.6-5.5 1.1-8.1 1.4c-2.6 0.3-5 0.5-7.4 0.4c-2.3-0.2-4.6-0.8-6.8-1.4c-2.3-0.5-5.4-1.6-6.5-1.9" stroke="#40c0e8" stroke-width="1.8"/><path d="M483.7 176.7c-0.6 0.5-2 1.5-3.5 3c-1.5 1.5-3.9 4-5.4 6.1c-1.4 2.2-2.4 4.4-3.2 6.9c-0.8 2.6-1.5 5.7-1.5 8.5c0.1 2.8 1 5.8 1.9 8.2c0.8 2.4 1.8 4.2 3.1 6.4c1.2 2.2 3.1 4.7 4.4 6.8c1.4 2 2.6 3.6 3.7 5.4c1.2 1.8 2.4 4.1 3.2 5.6c0.7 1.5 1.1 2.3 1.3 3.5c0.2 1.2 0.1 2.4-0.2 3.6c-0.2 1.1-0.5 2-1.1 3c-0.7 1.1-1.6 2-2.9 3.1c-1.4 1-3.1 2.2-5.1 3.2c-2 1-4.3 1.9-6.8 2.7c-2.5 0.8-5.4 1.5-8.1 2.1c-2.8 0.5-5.7 1-8.3 1.2c-2.7 0.2-5.1 0.4-7.5 0.1c-2.4-0.2-4.7-0.9-7-1.5c-2.2-0.6-5.3-1.8-6.4-2.1" stroke="#70a0e4" stroke-width="1.8"/><path d="M485.5 178.7c-0.7 0.3-2.7 0.8-4.5 1.9c-1.8 1.2-4.8 3.1-6.4 5.1c-1.6 2-2.7 4.3-3.4 6.9c-0.8 2.6-1.4 5.8-1.3 8.6c0.1 2.8 1 5.8 1.8 8.3c0.9 2.4 1.9 4.2 3.2 6.4c1.2 2.2 3.1 4.8 4.4 6.8c1.4 2 2.5 3.6 3.7 5.4c1.1 1.9 2.4 4.1 3.2 5.6c0.7 1.5 1 2.3 1.2 3.4c0.2 1.2 0.1 2.4-0.1 3.5c-0.2 1.1-0.5 2-1.2 3c-0.6 1-1.5 1.9-2.8 3c-1.3 1-3 2.2-5 3.2c-2 0.9-4.3 1.9-6.8 2.7c-2.5 0.7-5.4 1.5-8.1 2c-2.7 0.5-5.7 0.8-8.3 1c-2.6 0.3-4.9 0.4-7.4 0.4c-2.5 0-5 0-7.3-0.1c-2.4-0.2-5.8-0.6-6.9-0.7" stroke="#b070e0" stroke-width="1.7"/><path d="M486.1 179.3c-0.7 0.4-2.6 1-4.3 2.2c-1.7 1.2-4.4 3-6 5c-1.5 1.9-2.5 4.1-3.2 6.6c-0.8 2.4-1.4 5.4-1.3 8.1c0.1 2.6 1 5.4 1.8 7.7c0.8 2.4 1.8 4.2 3 6.3c1.3 2.2 3 4.6 4.4 6.7c1.3 2 2.6 3.6 3.7 5.5c1.2 1.9 2.5 4.1 3.3 5.6c0.7 1.6 1.2 2.6 1.4 3.9c0.2 1.3 0.1 2.7-0.2 4c-0.2 1.2-0.6 2.4-1.3 3.5c-0.8 1.1-1.8 2.2-3.2 3.3c-1.4 1.1-3.2 2.3-5.2 3.3c-2.1 1.1-4.5 2-7.1 2.8c-2.5 0.9-5.4 1.6-8.2 2.1c-2.8 0.6-5.8 0.9-8.4 1.1c-2.7 0.3-5.2 0.4-7.7 0.3c-2.6 0-5.2-0.2-7.6-0.4c-2.4-0.3-5.6-0.8-6.8-1" stroke="#c078dc" stroke-width="1.7"/><path d="M486.7 180c-0.7 0.4-2.5 1.1-4.1 2.3c-1.6 1.3-4.1 3.1-5.5 4.9c-1.5 1.9-2.4 4-3.1 6.3c-0.7 2.4-1.3 5.1-1.2 7.6c0 2.5 0.9 5.1 1.6 7.3c0.8 2.2 1.8 4 3 6.1c1.2 2.1 2.9 4.5 4.3 6.5c1.3 2 2.6 3.8 3.8 5.7c1.2 1.8 2.4 4 3.3 5.7c0.8 1.7 1.3 2.8 1.5 4.3c0.3 1.5 0.1 3.1-0.1 4.5c-0.3 1.4-0.8 2.7-1.6 4c-0.8 1.3-2 2.4-3.5 3.6c-1.5 1.2-3.4 2.5-5.5 3.5c-2.1 1.1-4.6 2.1-7.2 2.9c-2.6 0.9-5.6 1.6-8.4 2.2c-2.9 0.5-5.9 0.9-8.6 1.1c-2.8 0.3-5.3 0.4-7.9 0.3c-2.7-0.1-5.4-0.5-7.8-0.8c-2.4-0.4-5.6-1.1-6.7-1.3" stroke="#e070d4" stroke-width="1.7"/><path d="M487.3 180.6c-0.7 0.4-2.5 1.4-4 2.6c-1.4 1.2-3.7 3-5 4.8c-1.3 1.8-2.2 3.9-2.9 6c-0.7 2.2-1.2 4.8-1.2 7.1c0.1 2.3 0.8 4.6 1.6 6.8c0.7 2.1 1.7 3.9 2.9 5.9c1.2 2.1 2.8 4.3 4.2 6.3c1.3 2.1 2.6 3.9 3.8 5.8c1.2 1.9 2.5 4.1 3.3 5.8c0.9 1.8 1.5 3.2 1.8 4.8c0.2 1.6 0.1 3.4-0.2 5c-0.3 1.5-0.9 3-1.8 4.5c-0.9 1.4-2.2 2.7-3.8 4c-1.5 1.2-3.5 2.5-5.7 3.6c-2.2 1.2-4.8 2.2-7.5 3c-2.7 0.9-5.7 1.6-8.5 2.2c-2.9 0.6-6 1-8.8 1.2c-2.8 0.3-5.5 0.4-8.2 0.2c-2.7-0.1-5.6-0.7-8-1.1c-2.4-0.5-5.5-1.3-6.6-1.6" stroke="#fa64c8" stroke-width="1.7"/><path d="M487.8 181.2c-0.6 0.5-2.3 1.6-3.7 2.9c-1.4 1.2-3.3 2.9-4.6 4.7c-1.2 1.7-2.1 3.7-2.7 5.7c-0.6 2.1-1.2 4.4-1.1 6.6c0 2.1 0.7 4.2 1.4 6.2c0.7 2 1.7 3.8 2.9 5.8c1.1 2 2.7 4.2 4 6.2c1.4 2 2.8 3.9 4 5.9c1.2 1.9 2.5 4 3.3 5.9c0.9 1.8 1.6 3.4 1.9 5.2c0.3 1.8 0.2 3.7-0.2 5.4c-0.3 1.8-0.9 3.5-1.9 5c-1.1 1.6-2.5 3-4.1 4.4c-1.7 1.4-3.8 2.7-6.1 3.8c-2.2 1.2-4.9 2.2-7.7 3.1c-2.7 0.9-5.7 1.6-8.7 2.2c-2.9 0.6-5.9 1.1-8.8 1.3c-2.9 0.2-5.7 0.4-8.5 0.2c-2.8-0.2-5.8-1-8.2-1.5c-2.5-0.6-5.4-1.5-6.5-1.8" stroke="#ff5cc0" stroke-width="1.7"/><path d="M488.4 181.9c-0.6 0.5-2.2 1.7-3.5 3c-1.3 1.3-3 3-4.1 4.6c-1.1 1.7-2 3.6-2.6 5.5c-0.6 1.9-1.1 4.1-1.1 6c0.1 2 0.7 3.9 1.4 5.8c0.7 1.9 1.6 3.7 2.7 5.6c1.2 2 2.7 4 4 6c1.3 2 2.8 4 4.1 6c1.2 2 2.4 4 3.3 6c0.9 1.9 1.8 3.8 2.1 5.7c0.3 2 0.1 4-0.3 5.9c-0.4 1.9-1 3.8-2.1 5.5c-1.1 1.7-2.7 3.3-4.4 4.7c-1.8 1.5-3.9 2.8-6.3 4c-2.4 1.2-5.1 2.3-7.9 3.2c-2.8 0.9-5.9 1.7-8.9 2.3c-2.9 0.6-6 1-9 1.3c-3 0.2-5.9 0.4-8.7 0.1c-2.9-0.2-6-1.2-8.5-1.8c-2.4-0.7-5.3-1.8-6.4-2.1" stroke="#ff5cc0" stroke-width="1.7"/><path d="M446.5 265.4c-1.3-0.3-4.6-1.3-7.7-1.9c-3-0.5-7-0.8-10.4-1.3c-3.5-0.4-7-1.1-10-1.4c-3-0.4-5.7-0.5-8.1-0.6c-2.3-0.1-4.7-0.1-6.2 0c-1.4 0.1-1.6 0.3-2.4 0.5c-0.8 0.3-1.6 0.6-2.5 1c-0.8 0.3-1.8 0.8-2.6 1.4c-0.8 0.6-1.4 1.1-2 2.3c-0.6 1.1-1.2 2.8-1.6 4.6c-0.3 1.8-0.5 3.9-0.3 6.1c0.1 2.2 0.4 4.4 1.2 7.2c0.9 2.8 2 6.5 3.6 9.7c1.6 3.1 3.3 6.4 5.9 9.4c2.5 2.9 6 5.8 9.5 8.1c3.5 2.4 7.5 4.7 11.5 6c4.1 1.3 8.6 1.7 12.8 1.9c4.2 0.2 8.7-0.1 12.5-0.8c3.9-0.8 7.2-2.1 10.5-3.6c3.2-1.5 6.4-3.3 9-5.2c2.6-1.9 4.3-4 6.5-6c2.1-2 4.1-4.4 6.5-6c2.4-1.7 5.1-2.9 7.9-3.9c2.8-1.1 5.6-1.9 8.7-2.3c3.1-0.5 6.7-0.7 9.9-0.6c3.3 0 6.8 0.4 9.7 1.1c2.8 0.7 5.3 1.9 7.5 3.3c2.3 1.3 4.3 2.8 6.1 4.5c1.8 1.7 3.4 3.6 4.8 5.5c1.4 2 2.5 4 3.5 5.9c1 2 1.8 3.9 2.4 5.8c0.6 1.9 1 3.9 1.2 5.7c0.3 1.8 0.4 3.6 0.3 5.4c-0.1 1.8-0.3 3.4-0.8 5.2c-0.5 1.7-1.4 3.8-2.1 5.4c-0.7 1.5-1.7 3.2-2 3.8" stroke="#7a4a30" stroke-width="2.9"/><path d="M446.5 265.4c-1.2-0.4-4.6-1.4-7.6-2c-3-0.7-6.9-1.2-10.3-1.9c-3.3-0.6-6.7-1.5-9.6-2c-3-0.6-5.7-1-8.1-1.3c-2.4-0.2-4.8-0.4-6.4-0.4c-1.7 0-2.3 0.2-3.4 0.5c-1.1 0.3-2.2 0.7-3.3 1.3c-1 0.6-2.2 1.3-3 2.2c-0.9 0.8-1.5 1.7-2.1 3.1c-0.6 1.3-1.2 3.2-1.4 5.1c-0.3 2-0.4 4.1-0.1 6.4c0.2 2.3 0.7 4.6 1.6 7.4c0.9 2.8 2.3 6.5 4 9.6c1.7 3.2 3.6 6.5 6.2 9.4c2.7 2.8 6.2 5.6 9.8 7.9c3.5 2.3 7.5 4.6 11.6 5.8c4.1 1.3 8.6 1.7 12.8 1.9c4.2 0.2 8.7-0.1 12.5-0.8c3.9-0.8 7.2-2.1 10.5-3.6c3.2-1.5 6.4-3.3 9-5.2c2.6-1.9 4.3-4 6.5-6c2.1-2 4.1-4.4 6.5-6c2.4-1.7 5.1-2.9 7.9-3.9c2.8-1.1 5.6-1.9 8.7-2.3c3.1-0.5 6.7-0.7 9.9-0.6c3.3 0 6.8 0.4 9.7 1.1c2.8 0.7 5.3 1.9 7.5 3.3c2.3 1.3 4.3 2.8 6.1 4.5c1.8 1.7 3.4 3.6 4.8 5.5c1.4 2 2.5 4 3.5 5.9c1 2 1.8 3.9 2.4 5.8c0.6 1.9 1 3.9 1.2 5.7c0.3 1.8 0.4 3.6 0.3 5.4c-0.1 1.8-0.3 3.4-0.8 5.2c-0.5 1.7-1.4 3.8-2.1 5.4c-0.7 1.5-1.7 3.2-2 3.8" stroke="#8c5c70" stroke-width="2.9"/><path d="M446.5 265.4c-1.2-0.4-4.6-1.5-7.5-2.2c-3-0.8-6.9-1.6-10.1-2.4c-3.2-0.8-6.4-1.9-9.3-2.6c-3-0.8-5.7-1.5-8.1-1.9c-2.5-0.5-4.9-0.7-6.7-0.8c-1.8-0.1-2.9 0-4.3 0.3c-1.4 0.4-2.8 1-4 1.8c-1.3 0.8-2.6 1.7-3.6 2.9c-1 1.1-1.6 2.3-2.2 3.9c-0.6 1.5-1 3.6-1.2 5.6c-0.2 2.1-0.2 4.3 0.2 6.7c0.3 2.4 0.9 4.8 1.9 7.6c1.1 2.9 2.6 6.5 4.4 9.6c1.9 3.2 3.9 6.4 6.7 9.2c2.7 2.9 6.3 5.6 10 7.8c3.6 2.3 7.6 4.4 11.7 5.7c4.1 1.2 8.6 1.7 12.8 1.8c4.2 0.2 8.7-0.1 12.5-0.8c3.9-0.8 7.2-2.1 10.5-3.6c3.2-1.5 6.4-3.3 9-5.2c2.6-1.9 4.3-4 6.5-6c2.1-2 4.1-4.4 6.5-6c2.4-1.7 5.1-2.9 7.9-3.9c2.8-1.1 5.6-1.9 8.7-2.3c3.1-0.5 6.7-0.7 9.9-0.6c3.3 0 6.8 0.4 9.7 1.1c2.8 0.7 5.3 1.9 7.5 3.3c2.3 1.3 4.3 2.8 6.1 4.5c1.8 1.7 3.4 3.6 4.8 5.5c1.4 2 2.5 4 3.5 5.9c1 2 1.8 3.9 2.4 5.8c0.6 1.9 1 3.9 1.2 5.7c0.3 1.8 0.4 3.6 0.3 5.4c-0.1 1.8-0.3 3.4-0.8 5.2c-0.5 1.7-1.4 3.8-2.1 5.4c-0.7 1.5-1.7 3.2-2 3.8" stroke="#a070b0" stroke-width="2.9"/><path d="M446.5 265.4c-1.2-0.4-4.6-1.5-7.5-2.4c-2.9-0.9-6.7-1.9-9.8-2.9c-3.2-1-6.2-2.3-9.1-3.2c-2.8-1-5.6-1.9-8.1-2.6c-2.5-0.6-4.9-1-6.9-1.2c-2-0.1-3.5-0.1-5.2 0.3c-1.7 0.4-3.4 1.2-4.8 2.2c-1.5 0.9-3 2.2-4.1 3.6c-1 1.3-1.7 2.8-2.3 4.6c-0.5 1.9-0.9 4-1 6.2c-0.1 2.2 0 4.6 0.5 7c0.4 2.5 1.1 5 2.3 7.9c1.2 2.9 2.8 6.4 4.8 9.5c1.9 3.1 4.1 6.3 7 9.1c2.9 2.8 6.6 5.5 10.2 7.7c3.7 2.1 7.8 4.2 11.9 5.4c4.1 1.2 8.6 1.7 12.8 1.8c4.3 0.2 8.7-0.1 12.5-0.8c3.9-0.8 7.2-2.1 10.5-3.6c3.2-1.5 6.4-3.3 9-5.2c2.6-1.9 4.3-4 6.5-6c2.1-2 4.1-4.4 6.5-6c2.4-1.7 5.1-2.9 7.9-3.9c2.8-1.1 5.6-1.9 8.7-2.3c3.1-0.5 6.7-0.7 9.9-0.6c3.3 0 6.8 0.4 9.7 1.1c2.8 0.7 5.3 1.9 7.5 3.3c2.3 1.3 4.3 2.8 6.1 4.5c1.8 1.7 3.4 3.6 4.8 5.5c1.4 2 2.5 4 3.5 5.9c1 2 1.8 3.9 2.4 5.8c0.6 1.9 1 3.9 1.2 5.7c0.3 1.8 0.4 3.6 0.3 5.4c-0.1 1.8-0.3 3.4-0.8 5.2c-0.5 1.7-1.4 3.8-2.1 5.4c-0.7 1.5-1.7 3.2-2 3.8" stroke="#b070e0" stroke-width="2.9"/><path d="M446.5 265.4c-1.2-0.5-4.6-1.6-7.4-2.6c-2.9-1-6.6-2.2-9.6-3.4c-3.1-1.3-6-2.7-8.8-3.9c-2.8-1.1-5.6-2.3-8.1-3.1c-2.6-0.8-5-1.4-7.2-1.6c-2.2-0.3-4.1-0.3-6.1 0.1c-1.9 0.5-3.9 1.5-5.6 2.6c-1.7 1.2-3.4 2.7-4.5 4.3c-1.2 1.7-1.9 3.5-2.4 5.5c-0.6 2.1-0.8 4.4-0.8 6.7c-0.1 2.3 0.1 4.8 0.6 7.3c0.6 2.6 1.4 5.2 2.7 8.1c1.3 2.9 3.1 6.4 5.2 9.5c2.1 3.1 4.5 6.3 7.5 9c3 2.8 6.7 5.3 10.4 7.5c3.8 2.1 7.9 4 12 5.2c4.1 1.2 8.6 1.7 12.8 1.8c4.3 0.2 8.7-0.1 12.5-0.8c3.9-0.8 7.2-2.1 10.5-3.6c3.2-1.5 6.4-3.3 9-5.2c2.6-1.9 4.3-4 6.5-6c2.1-2 4.1-4.4 6.5-6c2.4-1.7 5.1-2.9 7.9-3.9c2.8-1.1 5.6-1.9 8.7-2.3c3.1-0.5 6.7-0.7 9.9-0.6c3.3 0 6.8 0.4 9.7 1.1c2.8 0.7 5.3 1.9 7.5 3.3c2.3 1.3 4.3 2.8 6.1 4.5c1.8 1.7 3.4 3.6 4.8 5.5c1.4 2 2.5 4 3.5 5.9c1 2 1.8 3.9 2.4 5.8c0.6 1.9 1 3.9 1.2 5.7c0.3 1.8 0.4 3.6 0.3 5.4c-0.1 1.8-0.3 3.4-0.8 5.2c-0.5 1.7-1.4 3.8-2.1 5.4c-0.7 1.5-1.7 3.2-2 3.8" stroke="#d078d8" stroke-width="2.9"/><path d="M448.7 259c-1.2-0.5-4.5-1.8-7.3-3c-2.7-1.1-6.2-2.5-9.1-3.9c-2.9-1.3-5.4-2.7-8.2-4c-2.9-1.4-6.2-3-9.1-4.1c-2.9-1.1-5.3-1.8-8.3-2.4c-3.1-0.6-6.3-1.1-9.8-1.1c-3.6-0.1-7.5 0-11.5 1c-3.9 1-8.3 2.4-12.3 4.9c-4.1 2.6-8.6 6.4-11.9 10.3c-3.4 3.9-6.3 8.6-8 13.2c-1.7 4.6-2.3 9.3-2.2 14.6c0.2 5.3 1.7 11.6 3.1 17.1c1.5 5.5 2.4 10.1 5.6 15.7c3.2 5.7 8.3 13.4 13.6 18.4c5.4 4.9 11.7 8.5 18.4 11.6c6.8 3 14.7 5.5 22.1 6.6c7.4 1 15.5 0.7 22.4-0.2c7-0.8 13.2-2.6 19.2-4.9c6.1-2.3 12.5-6.2 17.3-9.1c4.8-3 7.5-5.7 11.4-8.7c3.9-3 9.7-8.1 12.1-9.5c2.5-1.4 1.7 0.2 2.8 1.1c1.1 0.8 2.9 2.5 3.9 4c1 1.6 1.5 3.8 2.3 5.2c0.8 1.5 2.3 2.6 2.5 3.6c0.3 0.9 0.2 2-1 2c-1.2 0-4.9-1.3-6.1-1.8c-1.1-0.5-0.3-0.4-0.6-1.2c-0.3-0.8-1.3-2.9-1.1-3.6c0.3-0.7 1.7 0 2.5-0.4c0.8-0.5 1.2-1.6 2.1-2.1c0.9-0.6 1.9-0.8 3.1-1.3c1.1-0.5 2.3-1.4 3.6-1.7c1.4-0.3 2.8-0.6 4.4-0.3c1.5 0.3 3.7 0.7 4.9 2.1c1.2 1.3 1.7 4.9 2 5.9" stroke="#123a98" stroke-width="3.4"/><path d="M448.7 259c-1.2-0.5-4.5-1.8-7.3-2.9c-2.7-1.1-6.3-2.5-9.2-3.9c-2.9-1.3-5.3-2.7-8.2-4c-2.9-1.3-6.1-3-9-4c-2.9-1.1-5.3-1.8-8.4-2.4c-3-0.5-6.2-1.1-9.7-1c-3.5 0-7.3 0.2-11.1 1.2c-3.9 1.1-8.1 2.5-11.9 5c-3.9 2.5-8.2 6.3-11.3 10.1c-3.2 3.8-5.9 8.3-7.5 12.8c-1.6 4.5-2.1 9-1.9 14.2c0.1 5.1 1.6 11.2 3 16.5c1.5 5.3 2.5 9.9 5.7 15.4c3.1 5.5 8 12.9 13.2 17.7c5.2 4.9 11.4 8.4 17.9 11.4c6.6 3 14.2 5.4 21.4 6.5c7.2 1.1 15.1 0.8 21.9 0c6.8-0.7 12.9-2.4 18.8-4.6c6-2.2 12.2-5.9 16.9-8.8c4.7-2.8 7.5-5.5 11.3-8.4c3.9-3 9.3-7.9 11.8-9.4c2.4-1.4 1.7 0 2.9 0.7c1.2 0.7 3 2.2 4.1 3.5c1.2 1.4 1.8 3.4 2.7 4.7c1 1.3 2.6 2.4 3 3.3c0.4 0.8 0.6 1.8-0.4 1.9c-0.9 0.1-4.3-1.1-5.2-1.5c-0.9-0.4-0.1-0.2-0.2-0.8c-0.2-0.7-1-2.5-0.7-3c0.3-0.5 1.7 0.2 2.5-0.1c0.7-0.3 1.2-1.2 2.1-1.6c0.8-0.4 1.8-0.4 2.9-0.8c1-0.3 2.2-1.1 3.4-1.3c1.2-0.2 2.6-0.3 4 0c1.4 0.4 3.4 0.9 4.5 2.2c1 1.4 1.4 4.9 1.7 5.9" stroke="#1650b0" stroke-width="3.4"/><path d="M448.7 259.1c-1.2-0.5-4.6-1.8-7.3-2.9c-2.8-1.2-6.3-2.6-9.2-3.9c-2.9-1.3-5.4-2.6-8.3-4c-2.8-1.3-6.1-2.9-9-4c-2.9-1-5.3-1.7-8.3-2.2c-3-0.6-6.2-1.1-9.6-1c-3.4 0.1-7.2 0.3-10.9 1.4c-3.7 1.1-7.8 2.6-11.5 5.1c-3.6 2.4-7.7 6.1-10.6 9.8c-3 3.8-5.5 8.1-7 12.5c-1.4 4.4-2 8.8-1.7 13.7c0.2 5 1.6 10.9 3 16c1.5 5.2 2.6 9.7 5.7 15c3 5.4 7.8 12.5 12.8 17.2c5.1 4.7 11.1 8.2 17.5 11.1c6.3 3 13.7 5.4 20.8 6.5c7 1.1 14.6 0.9 21.2 0.2c6.7-0.7 12.7-2.3 18.5-4.4c5.8-2.1 11.9-5.6 16.5-8.4c4.6-2.8 7.4-5.4 11.2-8.3c3.8-2.9 9-7.6 11.5-9.1c2.4-1.5 1.8-0.3 3.1 0.2c1.2 0.5 3.1 1.8 4.3 3c1.2 1.2 2 3 3 4.2c1.1 1.2 2.8 2.2 3.4 3c0.7 0.8 1 1.7 0.4 1.8c-0.7 0.1-3.7-0.9-4.4-1.2c-0.7-0.2 0.2 0 0.2-0.4c-0.1-0.5-0.8-2.1-0.4-2.5c0.4-0.3 1.8 0.5 2.6 0.4c0.7-0.1 1.2-0.9 2.1-1.1c0.8-0.3 1.7-0.2 2.7-0.4c1-0.2 2.1-0.8 3.2-0.9c1.1-0.1 2.4-0.1 3.6 0.4c1.3 0.4 3.1 1 4 2.3c0.9 1.4 1.2 4.7 1.5 5.7" stroke="#1a6cc8" stroke-width="3.4"/><path d="M448.7 259.1c-1.2-0.5-4.6-1.8-7.3-2.9c-2.8-1.1-6.3-2.5-9.2-3.8c-3-1.2-5.4-2.6-8.3-3.9c-2.9-1.4-6.1-2.9-9-4c-2.9-1-5.3-1.7-8.3-2.2c-3-0.5-6.2-1-9.5-0.9c-3.4 0.1-7 0.5-10.7 1.6c-3.6 1.1-7.4 2.7-11 5.1c-3.5 2.5-7.3 6.1-10 9.7c-2.8 3.6-5.2 7.9-6.5 12.1c-1.3 4.2-1.8 8.5-1.5 13.3c0.2 4.8 1.6 10.5 3.1 15.5c1.4 5 2.6 9.3 5.6 14.5c3 5.2 7.6 12.1 12.5 16.6c4.9 4.6 10.7 8 16.9 10.9c6.2 2.9 13.4 5.3 20.2 6.5c6.8 1.1 14.2 0.9 20.7 0.3c6.5-0.6 12.4-2.1 18.1-4.1c5.7-2 11.6-5.4 16.1-8c4.5-2.7 7.4-5.2 11.1-8.1c3.7-2.8 8.7-7.4 11.1-8.9c2.4-1.6 2-0.6 3.3-0.3c1.3 0.4 3.2 1.5 4.5 2.5c1.4 1.1 2.2 2.6 3.5 3.7c1.2 1 3 1.9 3.8 2.7c0.8 0.7 1.4 1.6 1 1.8c-0.4 0.1-3-0.8-3.5-0.9c-0.5-0.2 0.5 0.2 0.6-0.2c0-0.3-0.5-1.6 0-1.8c0.4-0.2 1.8 0.7 2.6 0.8c0.7 0 1.3-0.6 2-0.7c0.8 0 1.7 0.2 2.7 0.1c0.9-0.1 1.8-0.5 2.9-0.5c1 0.1 2.1 0.2 3.3 0.7c1.1 0.5 2.7 1.1 3.5 2.5c0.8 1.3 1 4.6 1.2 5.5" stroke="#1c90dc" stroke-width="3.4"/><path d="M448.7 259.2c-1.2-0.5-4.6-1.8-7.4-2.9c-2.7-1.1-6.3-2.5-9.2-3.7c-2.9-1.3-5.4-2.7-8.3-4c-2.9-1.3-6.1-2.9-9-3.9c-2.8-1-5.3-1.7-8.2-2.2c-3-0.5-6.2-0.9-9.4-0.8c-3.3 0.2-6.9 0.7-10.4 1.8c-3.5 1.2-7.2 2.7-10.6 5.2c-3.3 2.4-6.9 5.9-9.4 9.5c-2.6 3.5-4.8 7.6-6 11.7c-1.2 4.1-1.6 8.3-1.3 12.9c0.3 4.6 1.6 10.1 3.1 14.9c1.4 4.8 2.6 9.1 5.6 14.2c3 5 7.4 11.5 12.1 16c4.8 4.4 10.5 7.8 16.5 10.6c6 2.9 12.9 5.3 19.5 6.4c6.6 1.2 13.9 1 20.2 0.5c6.3-0.6 12.1-1.9 17.6-3.8c5.6-1.9 11.3-5.1 15.8-7.7c4.4-2.6 7.3-5 10.9-7.8c3.7-2.8 8.5-7.2 10.9-8.8c2.4-1.5 2.1-0.9 3.4-0.6c1.4 0.2 3.4 1.1 4.8 1.9c1.4 0.9 2.4 2.2 3.8 3.2c1.3 0.9 3.3 1.7 4.3 2.4c1 0.6 1.8 1.5 1.6 1.7c-0.2 0.2-2.4-0.5-2.7-0.6c-0.2-0.1 0.8 0.4 1 0.2c0.3-0.1-0.1-1.2 0.4-1.2c0.5 0 1.9 1 2.6 1.1c0.8 0.2 1.4-0.1 2.1-0.1c0.8 0.1 1.6 0.4 2.5 0.5c0.9 0.1 1.7-0.2 2.7 0c0.9 0.1 1.9 0.3 2.9 0.9c1 0.6 2.4 1.3 3 2.7c0.7 1.3 0.8 4.4 0.9 5.3" stroke="#1c78d4" stroke-width="3.4"/><path d="M448.7 259.2c-1.3-0.5-4.6-1.7-7.4-2.8c-2.7-1.1-6.3-2.5-9.2-3.7c-3-1.3-5.5-2.7-8.3-4c-2.9-1.3-6.2-2.8-9-3.8c-2.9-1-5.3-1.7-8.3-2.2c-2.9-0.5-6-0.9-9.3-0.6c-3.2 0.2-6.7 0.7-10.1 1.9c-3.3 1.2-6.9 2.8-10.1 5.2c-3.1 2.5-6.4 5.9-8.8 9.3c-2.4 3.5-4.4 7.4-5.5 11.4c-1.1 4-1.4 8-1.1 12.5c0.3 4.4 1.6 9.6 3.1 14.3c1.4 4.7 2.7 8.9 5.6 13.8c2.9 4.9 7.2 11.1 11.8 15.5c4.6 4.3 10.1 7.6 15.9 10.4c5.8 2.7 12.6 5.1 19 6.3c6.4 1.1 13.4 1.1 19.5 0.6c6.2-0.5 11.9-1.7 17.3-3.5c5.4-1.8 11-4.8 15.4-7.3c4.4-2.5 7.3-4.9 10.8-7.6c3.6-2.7 8.2-7 10.5-8.6c2.4-1.6 2.3-1.2 3.7-1.1c1.4 0 3.4 0.8 4.9 1.4c1.5 0.7 2.7 1.9 4.2 2.7c1.5 0.7 3.6 1.4 4.7 2.1c1.2 0.6 2.2 1.4 2.3 1.6c0.1 0.2-1.7-0.3-1.8-0.3c0 0.1 1.1 0.7 1.4 0.6c0.4 0 0.2-0.8 0.7-0.7c0.6 0.2 1.9 1.3 2.7 1.6c0.8 0.3 1.4 0.2 2.1 0.4c0.7 0.2 1.5 0.7 2.3 0.9c0.8 0.2 1.6 0.1 2.5 0.4c0.8 0.2 1.7 0.5 2.5 1.2c0.9 0.7 2.1 1.5 2.6 2.8c0.5 1.4 0.5 4.4 0.6 5.2" stroke="#1a62cc" stroke-width="3.4"/><path d="M448.7 259.2c-1.3-0.4-4.6-1.7-7.4-2.8c-2.8-1-6.3-2.4-9.3-3.6c-2.9-1.3-5.4-2.6-8.3-3.9c-2.9-1.3-6.1-2.9-9-3.8c-2.8-1-5.3-1.7-8.2-2.2c-2.9-0.4-6-0.8-9.2-0.5c-3.2 0.2-6.6 0.9-9.8 2.1c-3.3 1.2-6.7 2.9-9.7 5.3c-3 2.4-6 5.7-8.2 9.1c-2.2 3.3-4 7.2-5 11c-1 3.9-1.3 7.7-0.9 12c0.4 4.3 1.7 9.3 3.1 13.9c1.5 4.5 2.8 8.6 5.6 13.3c2.9 4.8 7 10.7 11.4 14.9c4.5 4.2 9.9 7.4 15.5 10.2c5.6 2.7 12.1 5.1 18.3 6.2c6.2 1.2 13 1.2 19 0.8c6-0.4 11.6-1.5 16.9-3.2c5.3-1.7 10.7-4.6 15-7c4.3-2.3 7.2-4.7 10.7-7.3c3.5-2.7 7.8-6.8 10.2-8.4c2.3-1.7 2.3-1.5 3.8-1.6c1.5-0.1 3.5 0.4 5.2 0.9c1.6 0.5 2.8 1.5 4.5 2.1c1.6 0.7 3.8 1.3 5.2 1.8c1.4 0.6 2.6 1.3 3 1.6c0.3 0.3-1.1-0.1-1 0.1c0.1 0.1 1.3 0.8 1.8 0.9c0.5 0.2 0.5-0.4 1.1-0.1c0.6 0.3 1.9 1.5 2.7 2c0.8 0.5 1.4 0.5 2.1 0.8c0.7 0.4 1.4 1 2.2 1.4c0.7 0.3 1.4 0.4 2.1 0.8c0.8 0.4 1.6 0.8 2.3 1.5c0.7 0.8 1.7 1.7 2.1 3c0.4 1.3 0.2 4.2 0.3 5.1" stroke="#5030b0" stroke-width="3.4"/><path d="M448.6 259.3c-1.2-0.5-4.6-1.7-7.3-2.8c-2.8-1.1-6.4-2.4-9.3-3.6c-2.9-1.3-5.5-2.6-8.4-3.9c-2.8-1.3-6.1-2.8-8.9-3.8c-2.9-0.9-5.3-1.6-8.2-2c-2.9-0.5-6-0.8-9.1-0.5c-3.1 0.3-6.5 1-9.6 2.3c-3.1 1.3-6.4 3-9.2 5.4c-2.8 2.3-5.6 5.6-7.6 8.8c-2 3.3-3.6 7-4.5 10.7c-0.9 3.7-1.1 7.5-0.7 11.6c0.4 4.2 1.7 8.9 3.1 13.3c1.5 4.4 2.9 8.4 5.6 13c2.8 4.5 6.8 10.2 11.1 14.3c4.3 4 9.5 7.2 14.9 9.9c5.5 2.7 11.7 5 17.7 6.2c6.1 1.2 12.6 1.3 18.4 0.9c5.9-0.3 11.3-1.3 16.5-2.9c5.2-1.6 10.5-4.3 14.7-6.6c4.2-2.3 7.2-4.6 10.6-7.2c3.4-2.5 7.5-6.5 9.8-8.2c2.4-1.7 2.5-1.7 4.1-2c1.5-0.2 3.6 0.1 5.3 0.4c1.7 0.4 3.1 1.1 4.9 1.6c1.7 0.5 4.1 1 5.7 1.5c1.5 0.5 3 1.2 3.6 1.5c0.6 0.3-0.5 0.1-0.1 0.4c0.3 0.3 1.6 1 2.2 1.3c0.6 0.3 0.7 0 1.4 0.5c0.7 0.5 2 1.7 2.8 2.4c0.8 0.6 1.4 0.8 2 1.3c0.7 0.5 1.4 1.2 2.1 1.7c0.7 0.5 1.3 0.8 1.9 1.3c0.7 0.5 1.3 1 1.9 1.8c0.6 0.9 1.4 1.8 1.6 3.2c0.3 1.3 0 4.1 0 4.9" stroke="#6a22a8" stroke-width="3.4"/><path d="M448.6 259.3c-1.2-0.4-4.6-1.7-7.4-2.7c-2.7-1.1-6.3-2.4-9.3-3.6c-2.9-1.3-5.4-2.6-8.3-3.9c-2.9-1.2-6.1-2.7-9-3.7c-2.8-0.9-5.3-1.6-8.2-2c-2.8-0.4-5.9-0.7-8.9-0.4c-3.1 0.4-6.3 1.2-9.4 2.5c-3 1.3-6.1 3.1-8.7 5.4c-2.6 2.4-5.2 5.5-7 8.7c-1.9 3.2-3.3 6.8-4 10.3c-0.7 3.6-0.9 7.2-0.5 11.2c0.5 4 1.7 8.5 3.1 12.7c1.5 4.2 2.9 8.2 5.6 12.6c2.8 4.4 6.5 9.8 10.7 13.7c4.2 3.9 9.2 7.1 14.5 9.7c5.3 2.6 11.3 4.9 17.1 6.2c5.8 1.2 12.1 1.3 17.8 1.1c5.7-0.3 11-1.2 16.1-2.7c5.1-1.5 10.2-4 14.3-6.2c4.1-2.2 7.1-4.5 10.5-7c3.3-2.5 7.2-6.3 9.5-8c2.3-1.8 2.6-2 4.2-2.4c1.6-0.5 3.7-0.3 5.5-0.2c1.8 0.2 3.4 0.7 5.3 1.1c1.9 0.4 4.4 0.8 6.1 1.2c1.7 0.5 3.5 1.1 4.3 1.4c0.8 0.4 0.2 0.3 0.8 0.7c0.5 0.4 1.9 1.3 2.6 1.7c0.7 0.5 1 0.4 1.8 1.1c0.7 0.6 2 2 2.8 2.7c0.8 0.8 1.4 1.2 2 1.9c0.7 0.6 1.3 1.5 1.9 2.1c0.6 0.7 1.2 1.1 1.7 1.7c0.5 0.6 1.1 1.2 1.5 2.2c0.5 0.9 1 1.9 1.2 3.2c0.1 1.4-0.2 4-0.3 4.8" stroke="#4a1c9c" stroke-width="3.4"/><path d="M448.6 259.4c-1.2-0.5-4.6-1.7-7.4-2.8c-2.8-1-6.3-2.3-9.3-3.5c-2.9-1.2-5.5-2.6-8.4-3.8c-2.9-1.3-6.1-2.8-8.9-3.7c-2.9-1-5.4-1.6-8.2-2c-2.8-0.4-5.9-0.7-8.9-0.3c-3 0.4-6.1 1.3-9 2.7c-2.9 1.3-5.9 3.2-8.3 5.5c-2.5 2.3-4.8 5.4-6.4 8.5c-1.7 3.1-2.9 6.5-3.5 9.9c-0.6 3.5-0.7 7-0.3 10.8c0.5 3.8 1.7 8.1 3.2 12.1c1.4 4.1 2.9 8 5.6 12.3c2.6 4.2 6.2 9.3 10.3 13.1c4 3.8 8.9 6.8 14 9.4c5 2.6 10.8 4.9 16.4 6.1c5.6 1.2 11.8 1.5 17.3 1.3c5.5-0.2 10.7-1 15.7-2.4c4.9-1.4 9.8-3.8 13.9-5.9c4-2.1 7.1-4.3 10.3-6.7c3.3-2.4 7-6.1 9.3-7.9c2.2-1.7 2.7-2.2 4.4-2.8c1.6-0.6 3.8-0.7 5.7-0.7c1.9 0 3.6 0.4 5.6 0.6c2 0.3 4.7 0.6 6.6 0.9c1.9 0.4 3.8 1 4.9 1.4c1.1 0.4 0.9 0.4 1.6 1c0.8 0.5 2.2 1.4 3.1 2c0.9 0.6 1.3 0.8 2.1 1.6c0.8 0.8 2.1 2.3 2.9 3.2c0.8 0.9 1.4 1.5 2 2.3c0.6 0.9 1.2 1.8 1.8 2.6c0.5 0.8 1 1.3 1.4 2.1c0.4 0.8 0.9 1.5 1.2 2.5c0.3 1 0.6 2.1 0.6 3.4c0.1 1.3-0.4 3.9-0.5 4.6" stroke="#162c98" stroke-width="3.4"/><path d="M448.6 259.4c-1.2-0.4-4.6-1.7-7.4-2.7c-2.8-1-6.4-2.3-9.3-3.5c-3-1.2-5.5-2.6-8.4-3.8c-2.9-1.2-6.1-2.7-9-3.6c-2.8-1-5.3-1.6-8.1-2c-2.8-0.3-5.9-0.6-8.8-0.2c-2.9 0.5-6 1.5-8.8 2.9c-2.7 1.4-5.5 3.2-7.8 5.5c-2.3 2.4-4.4 5.4-5.8 8.3c-1.5 3-2.5 6.3-3 9.7c-0.5 3.3-0.6 6.6 0 10.2c0.5 3.7 1.6 7.8 3.1 11.7c1.4 3.9 3 7.7 5.6 11.8c2.6 4.1 6 8.9 9.9 12.6c3.9 3.6 8.6 6.6 13.5 9.1c4.9 2.6 10.4 4.8 15.9 6.1c5.4 1.2 11.3 1.5 16.6 1.4c5.4-0.1 10.5-0.8 15.4-2.1c4.8-1.2 9.5-3.5 13.5-5.5c3.9-2 7-4.2 10.2-6.5c3.2-2.4 6.7-5.9 8.9-7.7c2.3-1.8 2.8-2.5 4.6-3.3c1.8-0.7 3.9-1 5.9-1.2c2-0.2 3.8 0 6 0.1c2.2 0.1 4.9 0.3 7 0.6c2.1 0.3 4.3 0.9 5.7 1.3c1.3 0.4 1.4 0.7 2.4 1.3c1 0.6 2.5 1.6 3.5 2.4c1 0.8 1.6 1.2 2.5 2.2c0.9 1 2 2.5 2.9 3.6c0.8 1 1.4 1.8 2 2.8c0.6 1 1.1 2.1 1.6 3c0.5 0.9 0.8 1.6 1.2 2.5c0.3 0.9 0.6 1.7 0.8 2.8c0.2 1 0.3 2.2 0.2 3.6c-0.1 1.3-0.7 3.7-0.8 4.5" stroke="#1a62cc" stroke-width="3.4"/><path d="M448.6 259.4c-1.2-0.4-4.6-1.6-7.4-2.6c-2.8-1-6.4-2.3-9.4-3.5c-2.9-1.2-5.5-2.5-8.4-3.8c-2.9-1.2-6.1-2.6-8.9-3.6c-2.9-0.9-5.4-1.5-8.1-1.9c-2.8-0.3-5.9-0.5-8.7 0c-2.9 0.5-5.9 1.5-8.5 3c-2.7 1.4-5.3 3.3-7.4 5.6c-2.1 2.3-3.9 5.2-5.2 8.1c-1.3 2.9-2.1 6.1-2.5 9.3c-0.4 3.1-0.4 6.3 0.2 9.8c0.5 3.5 1.6 7.3 3.1 11.1c1.4 3.7 3.1 7.5 5.6 11.4c2.5 3.9 5.8 8.5 9.6 12c3.8 3.5 8.3 6.5 13 9c4.7 2.4 10 4.7 15.2 5.9c5.2 1.3 10.9 1.7 16.1 1.6c5.1 0 10.2-0.6 14.9-1.8c4.7-1.1 9.3-3.2 13.2-5.1c3.9-2 7-4 10.1-6.3c3.1-2.3 6.3-5.7 8.6-7.5c2.2-1.9 2.9-2.8 4.7-3.7c1.9-1 4.1-1.4 6.2-1.8c2-0.3 4-0.4 6.3-0.4c2.3 0 5.2 0.1 7.5 0.3c2.3 0.3 4.7 0.7 6.3 1.2c1.6 0.5 2.1 0.9 3.3 1.6c1.2 0.7 2.8 1.9 3.9 2.8c1.1 0.9 1.8 1.6 2.8 2.8c1 1.1 2.1 2.7 3 3.9c0.8 1.3 1.4 2.2 2 3.4c0.5 1.1 1 2.3 1.4 3.4c0.4 1.1 0.7 1.9 1 2.9c0.2 1 0.4 2 0.4 3.1c0.1 1.1 0 2.4-0.2 3.7c-0.3 1.4-1 3.7-1.2 4.4" stroke="#1c90dc" stroke-width="3.4"/><path d="M448.6 259.5c-1.3-0.5-4.7-1.6-7.4-2.6c-2.8-1.1-6.4-2.3-9.4-3.5c-3-1.2-5.6-2.5-8.4-3.7c-2.9-1.3-6.1-2.7-9-3.6c-2.8-0.9-5.3-1.5-8.1-1.9c-2.8-0.3-5.7-0.5-8.5 0.1c-2.8 0.5-5.8 1.7-8.3 3.2c-2.5 1.5-5 3.4-6.9 5.7c-1.9 2.2-3.5 5.1-4.6 7.9c-1.1 2.8-1.7 5.8-2 8.9c-0.3 3-0.2 6.1 0.4 9.4c0.6 3.3 1.6 6.9 3.1 10.5c1.5 3.6 3.1 7.3 5.6 11.1c2.5 3.7 5.6 8 9.2 11.4c3.7 3.3 8 6.2 12.5 8.7c4.5 2.4 9.6 4.6 14.6 5.9c5.1 1.3 10.5 1.7 15.5 1.7c5 0.1 10-0.4 14.6-1.5c4.6-1 9-3 12.8-4.8c3.8-1.8 6.9-3.8 10-6.1c3-2.2 6-5.3 8.2-7.3c2.2-1.9 3.1-3 5-4.1c1.9-1.1 4.1-1.7 6.3-2.3c2.2-0.5 4.3-0.8 6.7-0.9c2.5-0.2 5.5-0.2 8 0c2.4 0.2 5.1 0.6 6.9 1.1c1.9 0.5 2.8 1.1 4.2 1.9c1.4 0.9 3 2.1 4.3 3.2c1.2 1.1 2.1 2 3.1 3.3c1.1 1.3 2.2 3 3 4.4c0.9 1.4 1.5 2.5 2 3.8c0.6 1.3 1 2.7 1.4 3.9c0.3 1.2 0.5 2.2 0.7 3.3c0.1 1.2 0.2 2.2 0.1 3.4c-0.1 1.2-0.4 2.6-0.8 3.9c-0.3 1.4-1.1 3.5-1.4 4.2" stroke="#22a4e2" stroke-width="3.4"/><path d="M448.6 259.5c-1.3-0.4-4.7-1.6-7.5-2.6c-2.8-1-6.4-2.2-9.4-3.4c-2.9-1.2-5.5-2.5-8.4-3.7c-2.9-1.2-6.1-2.6-8.9-3.5c-2.9-0.9-5.4-1.6-8.1-1.8c-2.8-0.3-5.7-0.5-8.5 0.1c-2.7 0.6-5.5 1.9-8 3.4c-2.4 1.5-4.7 3.5-6.4 5.7c-1.8 2.3-3.1 5-4 7.7c-0.9 2.7-1.4 5.7-1.5 8.6c-0.2 2.9 0 5.8 0.6 9c0.6 3.1 1.7 6.5 3.1 9.9c1.5 3.5 3.2 7.1 5.6 10.7c2.4 3.6 5.4 7.6 8.9 10.8c3.5 3.2 7.7 6.1 12 8.5c4.3 2.4 9.2 4.6 14 5.9c4.8 1.3 10 1.7 14.9 1.9c4.8 0.1 9.7-0.3 14.2-1.3c4.4-0.9 8.7-2.7 12.4-4.4c3.7-1.7 6.9-3.7 9.8-5.9c3-2.1 5.8-5.1 8-7.1c2.2-1.9 3.2-3.4 5.1-4.6c2-1.2 4.3-2.1 6.5-2.8c2.3-0.7 4.5-1.2 7.1-1.4c2.6-0.3 5.8-0.4 8.4-0.3c2.7 0.1 5.5 0.5 7.6 1c2.1 0.6 3.4 1.3 5 2.3c1.7 0.9 3.4 2.3 4.8 3.5c1.3 1.2 2.4 2.5 3.5 3.9c1.1 1.4 2.2 3.3 3 4.8c0.9 1.5 1.5 2.9 2 4.3c0.5 1.4 0.9 2.9 1.2 4.3c0.3 1.3 0.4 2.5 0.4 3.8c0.1 1.2 0 2.3-0.2 3.6c-0.2 1.3-0.7 2.7-1.2 4.1c-0.5 1.3-1.4 3.4-1.7 4" stroke="#20b8e8" stroke-width="3.4"/><path d="M448.5 259.6c-1.2-0.5-4.6-1.6-7.4-2.6c-2.8-1-6.4-2.2-9.4-3.4c-3-1.2-5.6-2.5-8.5-3.7c-2.9-1.2-6.1-2.5-8.9-3.4c-2.8-0.9-5.3-1.6-8-1.8c-2.8-0.3-5.7-0.4-8.4 0.2c-2.7 0.7-5.4 2-7.7 3.6c-2.3 1.5-4.5 3.6-6 5.8c-1.6 2.2-2.7 4.9-3.4 7.5c-0.7 2.6-1 5.4-1 8.2c0 2.8 0.2 5.6 0.8 8.5c0.7 3 1.7 6.2 3.1 9.5c1.5 3.2 3.3 6.8 5.6 10.2c2.4 3.5 5.2 7.2 8.5 10.3c3.4 3.1 7.4 5.9 11.5 8.2c4.2 2.3 8.8 4.5 13.4 5.8c4.6 1.3 9.7 1.9 14.4 2.1c4.6 0.2 9.4-0.1 13.7-1c4.3-0.8 8.4-2.4 12.1-4.1c3.6-1.6 6.8-3.5 9.7-5.6c2.9-2.1 5.5-4.9 7.6-6.9c2.2-2 3.4-3.7 5.4-5.1c2-1.4 4.3-2.4 6.7-3.3c2.4-0.9 4.7-1.5 7.4-2c2.7-0.4 6-0.6 8.9-0.5c2.8 0.1 5.9 0.4 8.3 1c2.3 0.5 4 1.4 5.8 2.5c1.9 1.1 3.6 2.5 5.1 3.9c1.5 1.4 2.8 2.9 3.9 4.5c1.2 1.6 2.3 3.5 3.1 5.2c0.9 1.6 1.5 3.2 2 4.8c0.5 1.5 0.8 3.2 1 4.7c0.2 1.4 0.3 2.8 0.2 4.2c0 1.3-0.2 2.6-0.6 3.9c-0.3 1.4-1 2.9-1.7 4.3c-0.6 1.3-1.6 3.2-1.9 3.9" stroke="#40c0e8" stroke-width="3.4"/><path d="M447.7 261.9c-1.2-0.4-4.6-1.6-7.4-2.6c-2.8-1-6.5-2.2-9.5-3.4c-3-1.2-5.7-2.5-8.6-3.7c-2.8-1.2-5.9-2.5-8.6-3.4c-2.7-0.8-5.1-1.4-7.7-1.7c-2.5-0.2-5-0.3-7.4 0.2c-2.4 0.6-4.9 1.8-6.9 3.2c-2.1 1.4-4 3.2-5.4 5.2c-1.4 2-2.4 4.3-3 6.7c-0.7 2.4-0.9 5-0.9 7.6c-0.1 2.6 0.1 5.2 0.7 8.1c0.6 2.8 1.6 5.7 3 8.8c1.4 3.2 3.1 6.7 5.4 10c2.3 3.3 4.9 6.8 8.1 9.8c3.2 2.9 7.1 5.6 11.1 7.9c4 2.2 8.4 4.3 12.8 5.6c4.4 1.2 9.2 1.7 13.7 1.9c4.5 0.2 9.2-0.1 13.3-0.9c4.1-0.8 7.9-2.3 11.4-3.9c3.5-1.5 6.7-3.4 9.5-5.4c2.7-2 4.9-4.6 7.1-6.6c2.2-2 3.7-3.9 5.8-5.4c2.2-1.5 4.7-2.6 7.2-3.6c2.5-0.9 5.1-1.6 7.9-2.1c2.9-0.4 6.3-0.6 9.3-0.6c3.1 0.1 6.3 0.4 8.9 1.1c2.5 0.6 4.5 1.6 6.5 2.8c2 1.2 3.9 2.7 5.5 4.2c1.6 1.5 3 3.1 4.3 4.9c1.2 1.7 2.3 3.6 3.2 5.4c0.9 1.8 1.6 3.5 2.1 5.2c0.6 1.7 1 3.5 1.2 5.1c0.2 1.6 0.3 3.2 0.2 4.7c-0.1 1.5-0.3 2.9-0.7 4.4c-0.4 1.6-1.2 3.3-1.8 4.7c-0.7 1.5-1.7 3.3-2 3.9" stroke="#f868c8" stroke-width="2.5"/><path d="M447.1 263.8c-1.3-0.5-4.6-1.6-7.5-2.6c-2.8-1-6.5-2.2-9.5-3.4c-3-1.2-5.8-2.7-8.7-3.8c-2.8-1.2-5.7-2.4-8.3-3.2c-2.7-0.9-5.1-1.5-7.4-1.7c-2.4-0.3-4.6-0.4-6.8 0.1c-2.1 0.6-4.3 1.7-6.2 2.9c-1.9 1.3-3.6 3-4.9 4.7c-1.3 1.8-2.1 3.9-2.7 6.1c-0.6 2.2-0.8 4.6-0.9 7.1c0 2.5 0.2 5 0.8 7.7c0.6 2.7 1.4 5.4 2.8 8.4c1.3 3 3.1 6.5 5.3 9.7c2.1 3.2 4.6 6.6 7.7 9.4c3.1 2.8 6.9 5.5 10.8 7.7c3.8 2.1 8.1 4.1 12.3 5.4c4.3 1.2 8.9 1.7 13.3 1.8c4.3 0.2 8.9-0.1 12.8-0.8c4-0.8 7.6-2.2 10.9-3.8c3.4-1.5 6.6-3.4 9.2-5.3c2.7-1.9 4.7-4.2 6.8-6.2c2.2-2 3.9-4.2 6.2-5.8c2.3-1.6 5-2.7 7.6-3.7c2.7-1 5.3-1.8 8.3-2.2c3-0.5 6.5-0.7 9.7-0.6c3.1 0 6.5 0.4 9.2 1.1c2.8 0.6 5 1.8 7.2 3c2.1 1.3 4 2.8 5.7 4.4c1.7 1.6 3.3 3.4 4.6 5.2c1.3 1.9 2.4 3.9 3.4 5.7c0.9 1.9 1.7 3.7 2.2 5.5c0.6 1.9 1 3.7 1.2 5.4c0.3 1.8 0.3 3.5 0.3 5.1c-0.1 1.7-0.3 3.2-0.8 4.8c-0.4 1.7-1.3 3.6-2 5.1c-0.6 1.5-1.6 3.2-1.9 3.9" stroke="#ff5cc0" stroke-width="2.5"/></g></svg><svg class="a" style="left:285px;top:109.500px" width="344" height="344" viewBox="285 109.500 344 344"><rect x="286.500" y="111" width="340.200" height="340" fill="none" stroke="#444" stroke-width="1"/><rect x="286.500" y="111" width="340.200" height="340" fill="none" stroke="#b0b0b0" stroke-width="1" stroke-dasharray="1.500 1.800"/></svg>
<svg class="a" style="left:133.1px;top:81.1px;" width="7.2" height="7.2" viewBox="0 0 14 14"><path d="M7 1v12M1 7h12" stroke="#e9e9e9" stroke-width="1.200"/><path d="M7 0l2 2.600H5zM7 14l2-2.600H5zM0 7l2.600-2v4zM14 7l-2.600-2v4z" fill="#e9e9e9"/></svg>
<svg class="a" style="left:133.1px;top:90.1px;" width="7.2" height="7.2" viewBox="0 0 14 14"><rect x="1.500" y="2" width="11" height="10" fill="none" stroke="#d9d9d9" stroke-width="1.300" stroke-dasharray="2 1.300"/></svg>
<svg class="a" style="left:140px;top:96.5px;" width="1.2" height="1.2" viewBox="0 0 4 4"><path d="M4 0v4H0z" fill="#a8a8a8"/></svg>
<svg class="a" style="left:133.1px;top:99.2px;" width="7.2" height="7.2" viewBox="0 0 14 14"><path d="M2 2h3M9 2h3M2 2v3M12 2v3M2 9v3h3M12 9v3H9" fill="none" stroke="#d9d9d9" stroke-width="1.200"/><path d="M5 5l5 4-2.500.3L6 11.500z" fill="#d9d9d9"/></svg>
<svg class="a" style="left:140px;top:105.6px;" width="1.2" height="1.2" viewBox="0 0 4 4"><path d="M4 0v4H0z" fill="#a8a8a8"/></svg>
<svg class="a" style="left:133.1px;top:108.4px;" width="7.2" height="7.2" viewBox="0 0 14 14"><path d="M2 12.500L9 5" stroke="#e9e9e9" stroke-width="2.200" stroke-linecap="round"/><path d="M11 1v4M9 3h4M12.500 6.500v2M11.500 7.500h2" stroke="#e9e9e9" stroke-width="1"/></svg>
<svg class="a" style="left:140px;top:114.8px;" width="1.2" height="1.2" viewBox="0 0 4 4"><path d="M4 0v4H0z" fill="#a8a8a8"/></svg>
<svg class="a" style="left:133.1px;top:117.4px;" width="7.2" height="7.2" viewBox="0 0 14 14"><path d="M3.500 0v10.500H14M0 3.500h10.500V14" fill="none" stroke="#e9e9e9" stroke-width="1.500"/></svg>
<svg class="a" style="left:140px;top:123.8px;" width="1.2" height="1.2" viewBox="0 0 4 4"><path d="M4 0v4H0z" fill="#a8a8a8"/></svg>
<svg class="a" style="left:133.1px;top:126.4px;" width="7.2" height="7.2" viewBox="0 0 14 14"><rect x="1.500" y="2.500" width="11" height="9" fill="none" stroke="#d9d9d9" stroke-width="1.400"/><path d="M1.500 2.500l11 9M12.500 2.500l-11 9" stroke="#d9d9d9" stroke-width="1.100"/></svg>
<svg class="a" style="left:140px;top:132.8px;" width="1.2" height="1.2" viewBox="0 0 4 4"><path d="M4 0v4H0z" fill="#a8a8a8"/></svg>
<svg class="a" style="left:133.1px;top:135.4px;" width="7.2" height="7.2" viewBox="0 0 14 14"><path d="M2 12l6.500-6.500" stroke="#e9e9e9" stroke-width="1.800" stroke-linecap="round"/><path d="M8 3l3 3M9 4.500L11.500 2a1.400 1.400 0 0 1 2 2L11 6.500" stroke="#e9e9e9" stroke-width="1.800" fill="none"/></svg>
<svg class="a" style="left:140px;top:141.8px;" width="1.2" height="1.2" viewBox="0 0 4 4"><path d="M4 0v4H0z" fill="#a8a8a8"/></svg>
<svg class="a" style="left:133.1px;top:144.4px;" width="7.2" height="7.2" viewBox="0 0 14 14"><rect x="5" y="-1" width="4.600" height="15" rx="2.300" transform="rotate(45 7 7)" fill="#e9e9e9"/></svg>
<svg class="a" style="left:140px;top:150.8px;" width="1.2" height="1.2" viewBox="0 0 4 4"><path d="M4 0v4H0z" fill="#a8a8a8"/></svg>
<div class="a" style="left:132px;top:152.6px;width:9.6px;height:8.8px;background:#2b2b2b;border-radius:.8px"></div>
<svg class="a" style="left:133.1px;top:153.4px;" width="7.2" height="7.2" viewBox="0 0 14 14"><path d="M1.500 7c1.500-.6 2.600.3 3 2.200.3 1.500 1 2.300 2 2.300-1.600 1-3.600.6-4.300-1-.5-1.200-.2-2.600-.7-3.500z" fill="#e9e9e9"/><path d="M6.500 9.500L13 2" stroke="#e9e9e9" stroke-width="2" stroke-linecap="round"/></svg>
<svg class="a" style="left:140px;top:159.8px;" width="1.2" height="1.2" viewBox="0 0 4 4"><path d="M4 0v4H0z" fill="#a8a8a8"/></svg>
<svg class="a" style="left:133.1px;top:162.4px;" width="7.2" height="7.2" viewBox="0 0 14 14"><path d="M5 1.500h4l-.8 4.500h3.300v3h-9V6h3.300zM2 10.500h10v2H2z" fill="#e9e9e9"/></svg>
<svg class="a" style="left:140px;top:168.8px;" width="1.2" height="1.2" viewBox="0 0 4 4"><path d="M4 0v4H0z" fill="#a8a8a8"/></svg>
<svg class="a" style="left:133.1px;top:171.4px;" width="7.2" height="7.2" viewBox="0 0 14 14"><path d="M2 12.500L9.500 5" stroke="#e9e9e9" stroke-width="1.800" stroke-linecap="round"/><path d="M4 2.500a4 4 0 0 1 6.500 1" fill="none" stroke="#e9e9e9" stroke-width="1.100"/><path d="M11.500 1.500v3h-3z" fill="#e9e9e9"/></svg>
<svg class="a" style="left:140px;top:177.8px;" width="1.2" height="1.2" viewBox="0 0 4 4"><path d="M4 0v4H0z" fill="#a8a8a8"/></svg>
<svg class="a" style="left:133.1px;top:180.4px;" width="7.2" height="7.2" viewBox="0 0 14 14"><path d="M7.500 2.500l5 4-5 6H4l-2.500-2z" fill="#e9e9e9"/><path d="M2 12.500h9" stroke="#e9e9e9" stroke-width="1"/></svg>
<svg class="a" style="left:140px;top:186.8px;" width="1.2" height="1.2" viewBox="0 0 4 4"><path d="M4 0v4H0z" fill="#a8a8a8"/></svg>
<svg class="a" style="left:133.1px;top:189.4px;" width="7.2" height="7.2" viewBox="0 0 14 14"><rect x="1.500" y="2.500" width="11" height="9" fill="none" stroke="#e9e9e9" stroke-width="1.200"/><rect x="1.500" y="2.500" width="6" height="9" fill="#e9e9e9"/></svg>
<svg class="a" style="left:140px;top:195.8px;" width="1.2" height="1.2" viewBox="0 0 4 4"><path d="M4 0v4H0z" fill="#a8a8a8"/></svg>
<svg class="a" style="left:133.1px;top:198.6px;" width="7.2" height="7.2" viewBox="0 0 14 14"><path d="M7 1.500c2.500 3.200 4 5.300 4 7.300a4 4 0 0 1-8 0c0-2 1.500-4.100 4-7.300z" fill="#e9e9e9"/></svg>
<svg class="a" style="left:140px;top:205px;" width="1.2" height="1.2" viewBox="0 0 4 4"><path d="M4 0v4H0z" fill="#a8a8a8"/></svg>
<svg class="a" style="left:133.1px;top:207.9px;" width="7.2" height="7.2" viewBox="0 0 14 14"><circle cx="8.500" cy="5" r="3.600" fill="#e9e9e9"/><path d="M6 7.500L2 12.500" stroke="#e9e9e9" stroke-width="1.800" stroke-linecap="round"/></svg>
<svg class="a" style="left:140px;top:214.3px;" width="1.2" height="1.2" viewBox="0 0 4 4"><path d="M4 0v4H0z" fill="#a8a8a8"/></svg>
<svg class="a" style="left:133.1px;top:217.2px;" width="7.2" height="7.2" viewBox="0 0 14 14"><path d="M3 12.500l1-5 5.500-5 3 3-5 5.500z" fill="none" stroke="#d9d9d9" stroke-width="1.300"/><circle cx="7.500" cy="7.500" r="1.100" fill="#d9d9d9"/></svg>
<svg class="a" style="left:140px;top:223.6px;" width="1.2" height="1.2" viewBox="0 0 4 4"><path d="M4 0v4H0z" fill="#a8a8a8"/></svg>
<svg class="a" style="left:133.1px;top:226.4px;" width="7.2" height="7.2" viewBox="0 0 14 14"><path d="M2.500 2h9v2.500h-1.200V3.600H8v7.800h1.500V13h-5v-1.600H6V3.600H3.700v.9H2.500z" fill="#e9e9e9"/></svg>
<svg class="a" style="left:140px;top:232.8px;" width="1.2" height="1.2" viewBox="0 0 4 4"><path d="M4 0v4H0z" fill="#a8a8a8"/></svg>
<svg class="a" style="left:133.1px;top:235.6px;" width="7.2" height="7.2" viewBox="0 0 14 14"><path d="M4 1.500l6.500 7-3 .2 1.600 3.600-1.500.7L6 9.500 4 11.500z" fill="none" stroke="#d9d9d9" stroke-width="1.100"/></svg>
<svg class="a" style="left:140px;top:242px;" width="1.2" height="1.2" viewBox="0 0 4 4"><path d="M4 0v4H0z" fill="#a8a8a8"/></svg>
<svg class="a" style="left:133.1px;top:244.4px;" width="7.2" height="7.2" viewBox="0 0 14 14"><rect x="1.500" y="3" width="11" height="8.500" fill="none" stroke="#d9d9d9" stroke-width="1.500"/></svg>
<svg class="a" style="left:140px;top:250.8px;" width="1.2" height="1.2" viewBox="0 0 4 4"><path d="M4 0v4H0z" fill="#a8a8a8"/></svg>
<svg class="a" style="left:133.1px;top:253.4px;" width="7.2" height="7.2" viewBox="0 0 14 14"><path d="M4 7V3.500a1 1 0 0 1 2 0V2.500a1 1 0 0 1 2 0v1a1 1 0 0 1 2 0V5a1 1 0 0 1 2 0v4.500c0 2-1.500 3.500-4 3.500s-3.500-1-5-3.500L2 7.500c-.5-1 .8-1.700 1.400-.8z" fill="#e9e9e9"/></svg>
<svg class="a" style="left:140px;top:259.8px;" width="1.2" height="1.2" viewBox="0 0 4 4"><path d="M4 0v4H0z" fill="#a8a8a8"/></svg>
<svg class="a" style="left:133.1px;top:262.4px;" width="7.2" height="7.2" viewBox="0 0 14 14"><circle cx="5.800" cy="5.800" r="3.800" fill="none" stroke="#e9e9e9" stroke-width="1.600"/><path d="M8.800 8.800L12.800 12.800" stroke="#e9e9e9" stroke-width="2"/></svg>
<svg class="a" style="left:133.1px;top:271.9px;" width="7.2" height="7.2" viewBox="0 0 14 14"><circle cx="3" cy="7" r="1.100" fill="#e9e9e9"/><circle cx="7" cy="7" r="1.100" fill="#e9e9e9"/><circle cx="11" cy="7" r="1.100" fill="#e9e9e9"/></svg>
<svg class="a" style="left:131.8px;top:282.2px;" width="3.2" height="3" viewBox="0 0 8 8"><rect x=".5" y=".5" width="4.500" height="4.500" fill="#111" stroke="#ddd" stroke-width=".8"/><rect x="3" y="3" width="4.500" height="4.500" fill="#eee"/></svg>
<svg class="a" style="left:137.6px;top:282px;" width="3.8" height="3.4" viewBox="0 0 8 8"><path d="M1.500 2.500h4v4" fill="none" stroke="#ddd" stroke-width="1"/><path d="M0 2.500L2.200.8v3.400zM5.500 8L3.800 5.800h3.400z" fill="#ddd"/></svg>
<div class="a" style="left:135.4px;top:290.8px;width:5.6px;height:5.6px;background:#f4f4f4;border:.5px solid #8a8a8a"></div>
<div class="a" style="left:131.8px;top:287.4px;width:5.8px;height:5.8px;background:#000;border:.6px solid #e6e6e6"></div>
<svg class="a" style="left:133.4px;top:301.2px;" width="6.6" height="5.6" viewBox="0 0 12 10"><rect x=".8" y=".8" width="10.400" height="8.400" fill="none" stroke="#bdbdbd" stroke-width="1.200"/><circle cx="6" cy="5" r="2.200" fill="none" stroke="#bdbdbd" stroke-width="1" stroke-dasharray="1.200 .8"/></svg>
<svg class="a" style="left:133.4px;top:310px;" width="6.6" height="6" viewBox="0 0 12 10"><rect x="2.500" y=".8" width="8.700" height="6.400" fill="none" stroke="#bdbdbd" stroke-width="1.200"/><rect x=".8" y="2.800" width="8.700" height="6.400" fill="#535353" stroke="#bdbdbd" stroke-width="1.200"/></svg>
<svg class="a" style="left:130px;top:50px;will-change:opacity" width="767" height="432" viewBox="130 50 767 432" font-family="Liberation Sans, sans-serif" text-rendering="geometricPrecision"></svg>
<div class="a" style="left:763.4px;top:70px;width:6.4px;height:412px;background:#4a4a4a;"></div>
<div class="a" style="left:763.2px;top:70px;width:0.5px;height:412px;background:#3c3c3c;"></div>
<div class="a" style="left:769.5px;top:70px;width:0.5px;height:412px;background:#3a3a3a;"></div>
<div class="a" style="left:770px;top:70px;width:127px;height:412px;background:#535353;"></div>
<div class="a" style="left:770px;top:70px;width:127px;height:3.4px;background:#4b4b4b;"></div>
<div class="a" style="left:770px;top:73.4px;width:127px;height:10.2px;background:#424242;"></div>
<div class="a" style="left:770px;top:73.4px;width:19.4px;height:10.4px;background:#535353;"></div>
<svg class="a" style="left:890.2px;top:77.2px;" width="4.4" height="3.6" viewBox="0 0 10 8"><path d="M0 1h10M0 4h10M0 7h10" stroke="#c9c9c9" stroke-width="1.100"/></svg>
<svg class="a" style="left:806.4px;top:87.6px;" width="5" height="5" viewBox="0 0 10 10"><path d="M8.500 5a3.500 3.500 0 1 1-1.200-2.600" fill="none" stroke="#e8e8e8" stroke-width="1.500"/><path d="M9.500 .8v3.200H6.300z" fill="#e8e8e8"/></svg>
<div class="a" style="left:814.8px;top:87.6px;width:18.4px;height:5.2px;background:#454545;border-radius:.6px"></div>
<svg class="a" style="left:838px;top:89.6px;" width="6.8" height="6.4" viewBox="0 0 14 13"><rect x=".5" y="1.500" width="12" height="11" fill="#efefef"/><path d="M3.500 10L11 2" stroke="#535353" stroke-width="2.200"/><path d="M10 .5l3 3" stroke="#efefef" stroke-width="1.600"/></svg>
<div class="a" style="left:772px;top:96.5px;width:59px;height:0.5px;background:#7d7d7d;"></div>
<svg class="a" style="left:822.4px;top:97.6px;" width="5" height="3.8" viewBox="0 0 10 8"><path d="M5 0l5 8H0z" fill="#e9e9e9"/></svg>
<svg class="a" style="left:771.6px;top:103.4px;" width="4.2" height="4.8" viewBox="0 0 10 11"><circle cx="4" cy="4" r="2.800" fill="none" stroke="#d0d0d0" stroke-width="1.300"/><path d="M6 6.300L9.300 10" stroke="#d0d0d0" stroke-width="1.500"/></svg>
<div class="a" style="left:776.6px;top:103.6px;width:71.4px;height:5px;background:#454545;border-radius:.6px"></div>
<svg class="a" style="left:770.4px;top:110.8px;" width="78" height="11" viewBox="0 0 156 22"><g transform="scale(1 1.100)"><path d="M9 1.500v17M.5 10h17" stroke="#fff" stroke-width="3.200"/><circle cx="31" cy="10" r="8" fill="none" stroke="#fff" stroke-width="2.200" stroke-dasharray="1.500 .7"/><circle cx="31" cy="10" r="4.600" fill="none" stroke="#fff" stroke-width="2.400" stroke-dasharray="1.300 .6"/><path d="M45 10c0-4 3-6.500 7-6.500 3 0 5 1 6.500 3 3 0 5 2 4.500 5-.4 2.500-3 3.500-5 3-1.500 2-5 2.500-8 1.500-3-1-5-3-5-6z" fill="#fff"/><path d="M68 2.2h20" stroke="#fff" stroke-width="1.700"/><path d="M68 6.1h20" stroke="#fff" stroke-width="1.700"/><path d="M68 10h20" stroke="#fff" stroke-width="1.700"/><path d="M68 13.9h20" stroke="#fff" stroke-width="1.700"/><path d="M68 17.8h20" stroke="#fff" stroke-width="1.700"/><circle cx="99.500" cy="10" r="3.200" fill="#fff" opacity=".55"/><circle cx="99.500" cy="10" r="1.800" fill="#fff"/><circle cx="127.7" cy="11.4" r="1.500" fill="#fff"/><path d="M123.0 10.4L126.9 11.2" stroke="#fff" stroke-width=".8"/><circle cx="124.8" cy="15.7" r="1.500" fill="#fff"/><path d="M122.1 11.7L124.3 15.0" stroke="#fff" stroke-width=".8"/><circle cx="119.6" cy="16.7" r="1.500" fill="#fff"/><path d="M120.6 12.0L119.8 15.9" stroke="#fff" stroke-width=".8"/><circle cx="115.3" cy="13.8" r="1.500" fill="#fff"/><path d="M119.3 11.1L116.0 13.3" stroke="#fff" stroke-width=".8"/><circle cx="114.3" cy="8.6" r="1.500" fill="#fff"/><path d="M119.0 9.6L115.1 8.8" stroke="#fff" stroke-width=".8"/><circle cx="117.2" cy="4.3" r="1.500" fill="#fff"/><path d="M119.9 8.3L117.7 5.0" stroke="#fff" stroke-width=".8"/><circle cx="122.4" cy="3.3" r="1.500" fill="#fff"/><path d="M121.4 8.0L122.2 4.1" stroke="#fff" stroke-width=".8"/><circle cx="126.7" cy="6.2" r="1.500" fill="#fff"/><path d="M122.7 8.9L126.0 6.7" stroke="#fff" stroke-width=".8"/><circle cx="121" cy="10" r="1.700" fill="#fff"/></g></svg>
<div class="a" style="left:770px;top:122.8px;width:121.4px;height:80px;background:#454545;"></div>
<div class="a" style="left:891.4px;top:122.8px;width:5.6px;height:348.2px;background:#4a4a4a;"></div>
<div class="a" style="left:892px;top:157px;width:4.4px;height:313px;background:#6b6b6b;border-radius:.6px"></div>
<svg class="a" style="left:772.6px;top:125.8px;" width="1.8" height="2.6" viewBox="0 0 6 8"><path d="M1 1l3.500 3L1 7" fill="none" stroke="#d8d8d8" stroke-width="1.700"/></svg>
<svg class="a" style="left:776.8px;top:125px;" width="5.2" height="4.2" viewBox="0 0 12 10"><path d="M.3 .8h4.200l1 1.500h6.200V9.600H.3z" fill="#f4f4f4"/></svg>
<div class="a" style="left:770px;top:132.2px;width:121.4px;height:0.3px;background:#4d4d4d;"></div>
<svg class="a" style="left:772.6px;top:135.93px;" width="1.8" height="2.6" viewBox="0 0 6 8"><path d="M1 1l3.500 3L1 7" fill="none" stroke="#d8d8d8" stroke-width="1.700"/></svg>
<svg class="a" style="left:776.8px;top:135.13px;" width="5.2" height="4.2" viewBox="0 0 12 10"><path d="M.3 .8h4.200l1 1.500h6.200V9.600H.3z" fill="#f4f4f4"/></svg>
<div class="a" style="left:770px;top:142.33px;width:121.4px;height:0.3px;background:#4d4d4d;"></div>
<svg class="a" style="left:772.6px;top:146.06px;" width="1.8" height="2.6" viewBox="0 0 6 8"><path d="M1 1l3.500 3L1 7" fill="none" stroke="#d8d8d8" stroke-width="1.700"/></svg>
<svg class="a" style="left:776.8px;top:145.26px;" width="5.2" height="4.2" viewBox="0 0 12 10"><path d="M.3 .8h4.200l1 1.500h6.200V9.600H.3z" fill="#f4f4f4"/></svg>
<div class="a" style="left:770px;top:152.46px;width:121.4px;height:0.3px;background:#4d4d4d;"></div>
<svg class="a" style="left:772.6px;top:156.19px;" width="1.8" height="2.6" viewBox="0 0 6 8"><path d="M1 1l3.500 3L1 7" fill="none" stroke="#d8d8d8" stroke-width="1.700"/></svg>
<svg class="a" style="left:776.8px;top:155.39px;" width="5.2" height="4.2" viewBox="0 0 12 10"><path d="M.3 .8h4.200l1 1.500h6.200V9.600H.3z" fill="#f4f4f4"/></svg>
<div class="a" style="left:770px;top:162.59px;width:121.4px;height:0.3px;background:#4d4d4d;"></div>
<svg class="a" style="left:772.6px;top:166.32px;" width="1.8" height="2.6" viewBox="0 0 6 8"><path d="M1 1l3.500 3L1 7" fill="none" stroke="#d8d8d8" stroke-width="1.700"/></svg>
<svg class="a" style="left:776.8px;top:165.52px;" width="5.2" height="4.2" viewBox="0 0 12 10"><path d="M.3 .8h4.200l1 1.500h6.200V9.600H.3z" fill="#f4f4f4"/></svg>
<div class="a" style="left:770px;top:172.72px;width:121.4px;height:0.3px;background:#4d4d4d;"></div>
<svg class="a" style="left:772.6px;top:176.45px;" width="1.8" height="2.6" viewBox="0 0 6 8"><path d="M1 1l3.500 3L1 7" fill="none" stroke="#d8d8d8" stroke-width="1.700"/></svg>
<svg class="a" style="left:776.8px;top:175.65px;" width="5.2" height="4.2" viewBox="0 0 12 10"><path d="M.3 .8h4.200l1 1.500h6.200V9.600H.3z" fill="#f4f4f4"/></svg>
<div class="a" style="left:770px;top:182.85px;width:121.4px;height:0.3px;background:#4d4d4d;"></div>
<svg class="a" style="left:772.6px;top:186.58px;" width="1.8" height="2.6" viewBox="0 0 6 8"><path d="M1 1l3.500 3L1 7" fill="none" stroke="#d8d8d8" stroke-width="1.700"/></svg>
<svg class="a" style="left:776.8px;top:185.78px;" width="5.2" height="4.2" viewBox="0 0 12 10"><path d="M.3 .8h4.200l1 1.500h6.200V9.600H.3z" fill="#f4f4f4"/></svg>
<div class="a" style="left:770px;top:192.98px;width:121.4px;height:0.3px;background:#4d4d4d;"></div>
<svg class="a" style="left:772.2px;top:197.11px;" width="2.4" height="1.8" viewBox="0 0 8 6"><path d="M1 1l3 3.500L7 1" fill="none" stroke="#c4c4c4" stroke-width="1.300"/></svg>
<svg class="a" style="left:776.8px;top:195.91px;" width="5.2" height="4.2" viewBox="0 0 12 10"><path d="M.5 1h4l1 1.500h6V9.500H.5z" fill="none" stroke="#f0f0f0" stroke-width="1.300"/><path d="M.5 5.500h11v4H.5z" fill="#f0f0f0"/></svg>
<div class="a" style="left:770px;top:203.11px;width:121.4px;height:0.3px;background:#4d4d4d;"></div>
<div class="a" style="left:770px;top:202.8px;width:121.4px;height:268.2px;background:#535353;"></div>
<div class="a" style="left:771.2px;top:203px;width:0.5px;height:268px;background:#494949;"></div>
<div class="a" style="left:804.8px;top:203px;width:0.5px;height:268px;background:#494949;"></div>
<div class="a" style="left:838.2px;top:203px;width:0.5px;height:268px;background:#494949;"></div>
<div class="a" style="left:871.8px;top:203px;width:0.5px;height:268px;background:#494949;"></div>
<div class="a" style="left:771.2px;top:203px;width:101.1px;height:0.5px;background:#494949;"></div>
<div class="a" style="left:771.2px;top:225.35px;width:101.1px;height:0.5px;background:#494949;"></div>
<div class="a" style="left:771.2px;top:247.7px;width:101.1px;height:0.5px;background:#494949;"></div>
<div class="a" style="left:771.2px;top:270.05px;width:101.1px;height:0.5px;background:#494949;"></div>
<div class="a" style="left:771.2px;top:292.4px;width:101.1px;height:0.5px;background:#494949;"></div>
<div class="a" style="left:771.2px;top:314.75px;width:101.1px;height:0.5px;background:#494949;"></div>
<div class="a" style="left:771.2px;top:337.1px;width:101.1px;height:0.5px;background:#494949;"></div>
<div class="a" style="left:771.2px;top:359.45px;width:101.1px;height:0.5px;background:#494949;"></div>
<div class="a" style="left:771.2px;top:381.8px;width:101.1px;height:0.5px;background:#494949;"></div>
<div class="a" style="left:771.2px;top:404.15px;width:101.1px;height:0.5px;background:#494949;"></div>
<div class="a" style="left:771.2px;top:426.5px;width:101.1px;height:0.5px;background:#494949;"></div>
<div class="a" style="left:771.2px;top:448.85px;width:101.1px;height:0.5px;background:#494949;"></div>
<div class="a" style="left:770px;top:471px;width:127px;height:11px;background:#535353;"></div>
<div class="a" style="left:770px;top:470.8px;width:127px;height:0.5px;background:#454545;"></div>
<div class="a" style="left:772px;top:475.4px;width:73px;height:0.5px;background:#7d7d7d;"></div>
<svg class="a" style="left:842.2px;top:476.4px;" width="4.8" height="3.6" viewBox="0 0 10 8"><path d="M5 0l5 8H0z" fill="#e9e9e9"/></svg>
<svg class="a" style="left:861.8px;top:474.6px;" width="5.2" height="4.4" viewBox="0 0 12 10"><path d="M.3 .8h4.200l1 1.500h6.200V9.600H.3z" fill="#e6e6e6"/></svg>
<svg class="a" style="left:872px;top:474.4px;" width="4.8" height="4.8" viewBox="0 0 10 10"><rect x=".8" y=".8" width="8.400" height="8.400" fill="none" stroke="#d6d6d6" stroke-width="1.200"/><path d="M5 .8v8.400" stroke="#d6d6d6" stroke-width="1"/></svg>
<svg class="a" style="left:882px;top:474.2px;" width="4.2" height="5.2" viewBox="0 0 9 11"><path d="M0 2h9M3 2V.6h3V2M1.200 3.300h6.600V10.500H1.200z" fill="#d6d6d6" stroke="#d6d6d6" stroke-width=".8"/></svg>
<svg class="a" style="left:130px;top:50px;will-change:opacity" width="767" height="432" viewBox="130 50 767 432" font-family="Liberation Sans, sans-serif" text-rendering="geometricPrecision"><text x="891.4" y="73" font-size="3.2" fill="#a5a5a5">»</text><text x="772.8" y="80" font-size="4" fill="#f4f4f4" font-weight="bold">Brushes</text><text x="772.4" y="92" font-size="3.7" fill="#bdbdbd">Size:</text><text x="816.2" y="92" font-size="3.7" fill="#d6d6d6">100 px</text><text x="779.4" y="107" font-size="3.6" fill="#7c7c7c">Search Brushes</text><text x="837.4" y="118" font-size="3" fill="#e4e4e4" font-weight="bold">MIXER</text><text x="892.6" y="126" font-size="3" fill="#8a8a8a">▴</text><text x="785" y="129" font-size="3.8" fill="#dedede">Special Effects Brushes</text><text x="785" y="139" font-size="3.8" fill="#dedede">megapack</text><text x="785" y="149" font-size="3.8" fill="#dedede">ae Subtle Grunge Brushes Vol 1</text><text x="785" y="159" font-size="3.8" fill="#dedede">wp_discount_media_brushes</text><text x="785" y="169" font-size="3.8" fill="#dedede">ae Torn Edges 36</text><text x="785" y="179" font-size="3.8" fill="#dedede">Edge Brushes</text><text x="785" y="189" font-size="3.8" fill="#dedede">impressionist</text><text x="785" y="199" font-size="3.8" fill="#dedede">Mixer HQ</text></svg>
<svg class="a" style="left:770px;top:203px" width="121" height="268" viewBox="770 203 121 268">
<g transform="translate(788 214.0) scale(1 0.95)"><path d="M9.0 0.0L10.9 1.4L10.3 2.8L8.5 3.5L8.5 4.9L7.6 5.9L7.1 7.2L6.2 8.4L4.1 7.5L2.9 7.8L2.2 10.2L0.7 9.3L-0.7 10.2L-1.8 8.0L-3.3 8.8L-4.9 9.0L-5.3 7.2L-7.7 7.8L-8.6 6.7L-7.4 4.3L-8.0 3.3L-9.7 2.6L-11.1 1.5L-9.7 0.0L-9.1 -1.2L-9.4 -2.5L-8.0 -3.3L-7.9 -4.6L-7.6 -5.9L-6.8 -6.9L-5.3 -7.2L-4.3 -7.8L-3.1 -8.2L-2.0 -9.2L-0.6 -8.9L0.6 -8.2L2.2 -10.2L3.4 -9.1L4.8 -8.8L5.3 -7.1L7.8 -7.9L8.5 -6.6L7.6 -4.4L8.7 -3.6L10.2 -2.7L10.5 -1.4z" fill="#fff"/><path d="M8.7 0.0L8.3 2.7L5.9 4.3L4.3 5.9L2.6 8.1L0.0 8.4L-2.6 7.9L-4.5 6.2L-6.6 4.8L-7.8 2.5L-8.1 0.0L-7.1 -2.3L-6.4 -4.6L-4.6 -6.3L-2.6 -7.9L-0.0 -8.8L2.7 -8.3L4.7 -6.5L6.4 -4.7L7.3 -2.4z" fill="#fff"/></g>
<g transform="translate(821.5 214.0) scale(1 0.95)"><ellipse cx="0" cy="0" rx="10.500" ry="2.700" fill="#fff"/></g>
<g transform="translate(855 214.0) scale(1 0.95)"><path d="M8.6 2.7L4.8 2.7L7.0 6.1L3.4 4.5L4.1 9.0L1.0 4.3L0.1 8.5L-1.2 6.0L-3.6 8.3L-2.8 3.9L-7.9 7.3L-4.6 2.7L-9.8 3.3L-5.3 0.6L-9.9 -0.9L-4.4 -1.4L-8.6 -4.8L-4.7 -4.1L-5.8 -7.7L-2.5 -5.4L-2.2 -9.7L-0.1 -4.4L2.0 -10.0L2.2 -5.2L5.3 -7.5L3.2 -3.0L9.0 -5.3L5.1 -1.7L10.0 -1.2L6.2 0.6z" fill="#fff"/><path d="M5.2 0.0L4.7 1.9L3.8 3.8L2.0 4.7L0.0 5.0L-2.1 5.0L-4.2 4.2L-5.4 2.2L-5.8 0.0L-4.8 -2.0L-3.9 -3.9L-2.0 -4.9L-0.0 -5.1L1.9 -4.7L3.7 -3.7L5.5 -2.3z" fill="#fff"/></g>
<g transform="translate(788 236.3) scale(1 0.95)"><path d="M9.7 -1.5L10.1 -0.3L10.1 1.0L10.1 2.4L8.9 3.4L8.4 4.8L5.5 4.4L5.2 5.9L4.5 7.5L2.7 7.4L1.3 8.3L-0.3 6.7L-1.8 7.4L-3.0 6.7L-4.7 6.9L-6.0 6.4L-5.9 4.7L-7.2 4.2L-8.0 3.4L-10.2 2.9L-10.1 1.5L-8.5 0.2L-10.1 -1.0L-7.9 -1.9L-8.5 -3.3L-6.6 -3.8L-5.5 -4.4L-5.8 -6.6L-3.6 -6.0L-2.4 -6.5L-1.3 -8.5L0.4 -8.4L1.7 -7.0L3.7 -8.3L4.7 -6.9L6.2 -6.6L6.3 -5.0L8.9 -5.2L9.1 -3.9L10.4 -2.9z" fill="#fff"/><path d="M6 -2l5 1-4 3z" fill="#fff"/></g>
<g transform="translate(821.5 236.3) scale(1 0.95)"><g transform="translate(1 .5)"><path d="M3 6L-4.4 10.2" stroke="#fff" stroke-width="2.100" stroke-linecap="round"/><path d="M3 6L-7.2 8.6" stroke="#fff" stroke-width="2.100" stroke-linecap="round"/><path d="M3 6L-7.5 5.7" stroke="#fff" stroke-width="2.100" stroke-linecap="round"/><path d="M3 6L-7.0 2.8" stroke="#fff" stroke-width="2.100" stroke-linecap="round"/><path d="M3 6L-5.8 0.2" stroke="#fff" stroke-width="2.100" stroke-linecap="round"/><path d="M3 6L-3.9 -1.9" stroke="#fff" stroke-width="2.100" stroke-linecap="round"/><path d="M3 6L-1.4 -3.5" stroke="#fff" stroke-width="2.100" stroke-linecap="round"/><path d="M3 6L1.3 -4.4" stroke="#fff" stroke-width="2.100" stroke-linecap="round"/><path d="M3 6L4.2 -4.4" stroke="#fff" stroke-width="2.100" stroke-linecap="round"/><path d="M3 6L7.0 -3.7" stroke="#fff" stroke-width="2.100" stroke-linecap="round"/><path d="M3 6L9.5 -2.2" stroke="#fff" stroke-width="2.100" stroke-linecap="round"/><path d="M3 6L11.5 -0.1" stroke="#fff" stroke-width="2.100" stroke-linecap="round"/><path d="M3 6L11.0 3.1" stroke="#fff" stroke-width="2.100" stroke-linecap="round"/></g></g>
<g transform="translate(855 236.3) scale(1 0.95)"><path d="M9.3 5.1L6.1 6.1L4.5 8.3L1.4 6.4L-0.5 7.6L-2.8 7.6L-5.6 7.5L-6.8 5.1L-8.5 3.2L-8.5 0.6L-8.5 -1.8L-7.6 -4.1L-7.3 -7.3L-3.4 -6.3L-2.1 -9.4L0.6 -8.1L2.9 -7.8L4.6 -6.1L8.5 -6.4L6.2 -2.3L10.6 -0.8L8.0 1.7z" fill="#fff"/><path d="M5.7 0.0L5.7 3.8L2.8 5.6L0.0 7.3L-2.8 5.6L-4.9 3.3L-6.6 0.0L-4.9 -3.3L-3.1 -6.2L-0.0 -6.9L3.0 -6.0L5.2 -3.5z" fill="#fff"/></g>
<g transform="translate(788 258.7) scale(1 0.95)"><path d="M9.3 0.0L6.8 0.9L7.5 2.1L8.4 3.6L6.0 3.6L5.7 4.6L7.5 8.1L3.0 4.3L4.1 8.4L2.3 7.3L1.0 6.8L0.0 6.5L-1.5 9.8L-2.0 6.5L-4.4 9.1L-3.2 4.6L-5.4 5.9L-4.3 3.5L-8.0 4.9L-8.6 3.7L-9.5 2.6L-8.7 1.2L-9.0 0.0L-8.6 -1.2L-7.3 -2.0L-5.9 -2.5L-8.7 -5.3L-6.5 -5.3L-6.0 -6.5L-3.0 -4.4L-3.5 -7.2L-1.7 -5.5L-1.2 -7.9L-0.0 -8.4L1.2 -7.5L2.6 -8.4L4.7 -9.7L2.9 -4.2L5.9 -6.4L5.6 -4.6L6.1 -3.7L6.5 -2.8L11.0 -3.0L5.6 -0.8z" fill="#fff"/><path d="M5.6 0.0L4.9 2.4L3.5 4.4L1.2 5.0L-1.3 5.7L-3.7 4.6L-5.1 2.5L-5.1 0.0L-5.0 -2.4L-3.3 -4.2L-1.2 -5.1L1.3 -5.8L3.8 -4.7L4.5 -2.2z" fill="#fff"/></g>
<g transform="translate(821.5 258.7) scale(1 0.95)"><path d="M10.2 0.3L10.8 0.6L12.7 1.1L9.5 1.2L9.2 1.4L8.9 1.8L6.2 1.5L6.7 2.1L6.0 2.4L5.2 2.7L2.4 1.8L1.7 2.1L0.4 1.8L-0.9 2.8L-2.3 2.6L-2.4 1.6L-5.8 2.6L-7.3 2.4L-7.4 1.8L-8.2 1.5L-6.8 0.9L-6.5 0.6L-10.0 0.6L-7.5 0.2L-8.5 -0.0L-8.9 -0.3L-7.5 -0.4L-9.9 -0.9L-9.4 -1.1L-11.0 -1.7L-8.5 -1.7L-8.2 -2.0L-6.6 -2.0L-6.1 -2.4L-4.3 -2.2L-2.8 -2.1L-2.5 -3.1L-0.8 -3.1L0.9 -2.9L2.3 -2.6L2.9 -1.9L3.8 -1.7L5.0 -1.6L5.0 -1.2L8.9 -1.6L8.0 -1.1L11.2 -1.1L9.1 -0.6L13.0 -0.4L12.6 0.0z" fill="#fff"/></g>
<g transform="translate(855 258.7) scale(1 0.95)"><path d="M11.6 0.0L10.0 0.4L12.3 1.0L7.0 0.8L8.3 1.4L7.3 1.6L8.3 2.3L7.7 2.6L8.0 3.4L5.2 2.8L5.2 3.7L3.3 3.3L2.2 3.3L1.0 3.0L0.0 3.4L-1.3 3.9L-2.1 3.2L-3.6 3.5L-4.1 2.9L-5.4 3.0L-6.8 2.9L-6.2 2.1L-10.6 2.9L-5.7 1.2L-8.5 1.4L-10.8 1.3L-11.5 0.9L-7.0 0.3L-14.3 0.0L-11.5 -0.4L-9.5 -0.7L-8.3 -1.0L-8.9 -1.5L-7.0 -1.5L-9.7 -2.7L-5.3 -1.8L-8.0 -3.4L-3.7 -2.0L-4.4 -3.1L-3.6 -3.5L-2.5 -3.8L-1.0 -3.0L-0.0 -4.2L1.0 -3.1L2.5 -3.7L2.2 -2.2L5.6 -4.0L6.2 -3.4L8.9 -3.8L7.1 -2.4L8.6 -2.4L7.2 -1.6L11.5 -1.9L9.6 -1.1L9.5 -0.7L7.8 -0.3z" fill="#fff"/></g>
<g transform="translate(788 281.1) scale(1 0.95)"><path d="M-10 -2.500L9.500 -6.500 10 2 6 3.500 7 5.500 -9.500 7.500 -10.500 3z" fill="#fff"/><path d="M1.7 0.0L1.6 1.6L0.0 2.2L-1.7 1.7L-1.6 0.0L-1.2 -1.2L-0.0 -1.6L1.2 -1.2z" fill="#fff"/></g>
<g transform="translate(821.5 281.1) scale(1 0.95)"><path d="M2.3 5.0L0.4 4.7L-1.5 4.2L-3.7 3.5L-6.0 2.6L-7.8 1.4L-8.6 0.1L-8.4 -1.4L-7.6 -3.0L-6.7 -4.7L-5.9 -6.0L-4.9 -6.8L-3.3 -7.0L-1.1 -6.6L1.3 -5.9L3.4 -5.2L5.0 -4.5L6.3 -3.5L7.6 -2.1L8.6 -0.2L9.1 1.8L8.4 3.5L6.7 4.6L4.4 5.1L2.3 5.0z" fill="none" stroke="#e8e8e8" stroke-width="0.5" opacity="1"/><path d="M1.4 -6.7L3.4 -6.6L4.6 -6.0L5.2 -4.9L5.6 -3.4L6.1 -1.8L6.4 -0.2L6.2 1.1L5.1 2.1L3.1 2.8L0.9 3.2L-1.1 3.5L-2.9 3.6L-4.6 3.5L-6.5 3.0L-8.4 2.1L-9.6 0.7L-9.7 -1.0L-8.8 -2.8L-7.4 -4.2L-6.0 -5.2L-4.6 -5.8L-2.9 -6.2L-0.9 -6.5L1.4 -6.7z" fill="none" stroke="#e8e8e8" stroke-width="0.5" opacity="1"/><path d="M-7.8 -1.6L-7.0 -3.2L-5.9 -4.4L-4.7 -5.3L-3.5 -5.9L-2.1 -6.5L-0.5 -7.0L1.1 -7.1L2.5 -6.5L3.4 -5.1L4.0 -3.2L4.4 -1.2L4.7 0.4L4.7 1.7L4.1 2.6L2.9 3.5L1.4 4.3L-0.1 5.0L-1.3 5.3L-2.4 5.1L-3.7 4.5L-5.3 3.4L-6.8 1.9L-7.8 0.2L-7.8 -1.6z" fill="none" stroke="#e8e8e8" stroke-width="0.5" opacity="1"/><path d="M9.1 -3.0L9.9 -1.1L9.6 0.7L8.1 2.2L6.0 3.3L3.7 4.0L1.6 4.4L-0.5 4.7L-2.8 4.8L-5.2 4.6L-7.3 3.8L-8.3 2.3L-8.3 0.3L-7.7 -1.9L-6.9 -3.8L-6.1 -5.2L-4.9 -6.1L-3.1 -6.7L-0.7 -7.2L1.8 -7.6L3.8 -7.7L5.2 -7.3L6.4 -6.3L7.7 -4.9L9.1 -3.0z" fill="none" stroke="#e8e8e8" stroke-width="0.5" opacity="1"/><path d="M-6.4 -2.8L-6.1 -4.9L-5.1 -6.5L-3.6 -7.3L-1.8 -7.5L-0.1 -7.3L1.3 -6.9L2.7 -6.4L4.1 -5.6L5.5 -4.5L6.4 -2.9L6.3 -1.1L5.5 0.8L4.1 2.6L2.8 4.0L1.8 5.0L0.7 5.4L-0.7 5.3L-2.3 4.8L-4.0 4.2L-5.2 3.5L-5.9 2.6L-6.2 1.3L-6.4 -0.6L-6.4 -2.8z" fill="none" stroke="#e8e8e8" stroke-width="0.5" opacity="1"/></g>
<g transform="translate(855 281.1) scale(1 0.95)"><path d="M6.5 -4.3L7.6 -3.2L8.5 -2.0L8.6 -0.8L7.9 0.4L6.5 1.5L5.0 2.3L3.6 2.9L2.2 3.4L0.6 3.8L-1.1 4.0L-2.7 3.8L-3.7 2.9L-4.0 1.5L-3.9 -0.1L-3.5 -1.6L-3.0 -2.7L-2.3 -3.4L-1.2 -4.1L0.4 -4.8L2.1 -5.4L3.5 -5.8L4.6 -5.7L5.5 -5.2L6.5 -4.3z" fill="none" stroke="#e8e8e8" stroke-width="0.5" opacity="1"/><path d="M-6.0 -4.0L-4.5 -4.8L-2.9 -5.2L-1.2 -5.5L0.9 -5.7L2.9 -5.4L4.3 -4.6L5.1 -2.9L5.3 -0.7L5.3 1.7L5.4 3.9L5.2 5.5L4.5 6.7L2.9 7.4L0.9 7.9L-1.0 8.3L-2.6 8.3L-3.9 8.0L-5.4 7.1L-7.0 5.6L-8.5 3.6L-9.1 1.3L-8.8 -0.9L-7.6 -2.8L-6.0 -4.0z" fill="none" stroke="#e8e8e8" stroke-width="0.5" opacity="1"/><path d="M-7.8 0.2L-6.0 -1.7L-4.1 -3.2L-2.2 -4.4L-0.1 -5.4L2.3 -6.4L4.9 -7.2L7.3 -7.3L8.8 -6.4L9.6 -4.6L9.9 -2.3L10.1 -0.2L10.2 1.5L9.7 2.9L8.2 4.1L5.9 5.4L3.4 6.7L1.2 7.5L-0.5 7.9L-2.3 7.8L-4.3 7.1L-6.6 6.0L-8.2 4.4L-8.7 2.4L-7.8 0.2z" fill="none" stroke="#e8e8e8" stroke-width="0.5" opacity="1"/><path d="M5.0 -2.5L5.6 -1.4L5.9 0.1L6.3 1.9L6.6 3.7L6.1 5.0L4.6 5.8L2.5 6.2L0.1 6.2L-1.9 6.0L-3.8 5.8L-5.7 5.4L-7.7 4.6L-9.4 3.4L-10.3 1.8L-10.0 0.1L-8.8 -1.5L-7.2 -2.8L-5.8 -3.6L-4.4 -4.0L-2.7 -4.1L-0.5 -3.9L1.9 -3.7L3.8 -3.2L5.0 -2.5z" fill="none" stroke="#e8e8e8" stroke-width="0.5" opacity="1"/><path d="M7.9 -2.1L8.5 0.3L9.0 2.8L8.8 5.1L7.6 6.7L5.5 7.5L2.9 7.8L0.5 7.7L-1.5 7.4L-3.6 7.0L-5.9 6.2L-8.0 4.9L-9.4 3.0L-9.5 0.7L-8.5 -1.6L-6.9 -3.7L-5.4 -5.3L-4.0 -6.2L-2.4 -6.6L-0.2 -6.5L2.4 -6.2L4.7 -5.8L6.4 -5.0L7.4 -3.9L7.9 -2.1z" fill="none" stroke="#e8e8e8" stroke-width="0.5" opacity="1"/></g>
<g transform="translate(788 303.4) scale(1 0.95)"><path d="M6.7 -2.0L7.7 -1.2L8.7 -0.3L9.2 0.5L8.5 1.3L6.5 2.0L3.6 2.5L0.7 2.8L-1.9 3.0L-4.4 3.2L-7.1 3.2L-9.9 3.1L-12.2 2.7L-13.2 1.9L-12.8 1.0L-11.4 -0.1L-9.8 -0.9L-8.3 -1.6L-6.6 -2.0L-4.3 -2.2L-1.3 -2.5L1.8 -2.7L4.2 -2.7L5.7 -2.5L6.7 -2.0z" fill="none" stroke="#bdbdbd" stroke-width="0.4" opacity="0.6"/><path d="M-7.6 -1.0L-7.2 -1.6L-6.0 -2.0L-4.2 -2.4L-2.4 -2.6L-0.8 -2.7L0.9 -2.7L2.7 -2.8L4.6 -2.7L6.1 -2.4L6.8 -2.0L6.7 -1.3L6.0 -0.7L5.3 -0.0L4.6 0.4L3.7 0.7L2.3 0.9L0.4 1.0L-1.5 1.1L-3.2 1.1L-4.3 1.0L-5.2 0.7L-6.1 0.2L-7.1 -0.3L-7.6 -1.0z" fill="none" stroke="#bdbdbd" stroke-width="0.4" opacity="0.6"/><path d="M6.5 2.2L6.0 2.9L4.8 3.2L3.1 3.2L1.3 2.9L-0.3 2.6L-1.8 2.2L-3.5 1.8L-5.2 1.1L-6.6 0.4L-7.3 -0.4L-7.0 -1.2L-6.2 -1.9L-5.3 -2.5L-4.5 -2.9L-3.6 -3.1L-2.3 -2.9L-0.5 -2.6L1.4 -2.1L2.9 -1.7L4.0 -1.2L4.8 -0.6L5.4 0.2L6.1 1.2L6.5 2.2z" fill="none" stroke="#bdbdbd" stroke-width="0.4" opacity="0.6"/><path d="M-4.2 2.2L-4.9 1.7L-5.2 1.0L-5.5 0.1L-5.7 -0.8L-5.7 -1.6L-5.0 -2.2L-3.6 -2.4L-1.8 -2.3L0.0 -2.2L1.6 -2.0L3.0 -1.7L4.6 -1.3L6.1 -0.7L7.3 0.1L7.6 1.0L7.0 1.8L5.9 2.5L4.6 3.0L3.5 3.2L2.3 3.3L0.7 3.1L-1.1 2.9L-2.9 2.6L-4.2 2.2z" fill="none" stroke="#bdbdbd" stroke-width="0.4" opacity="0.6"/><path d="M6.7 0.7L7.4 1.8L7.4 2.6L6.5 3.2L4.7 3.3L2.5 3.2L0.4 2.9L-1.5 2.7L-3.3 2.3L-5.4 1.8L-7.4 1.1L-8.7 0.3L-9.0 -0.5L-8.3 -1.3L-7.2 -2.0L-6.0 -2.5L-4.9 -2.8L-3.6 -2.8L-1.7 -2.6L0.5 -2.2L2.7 -1.8L4.3 -1.4L5.3 -0.9L6.0 -0.2L6.7 0.7z" fill="none" stroke="#bdbdbd" stroke-width="0.4" opacity="0.6"/></g>
<g transform="translate(821.5 303.4) scale(1 0.95)"><path d="M0.1 -2.8L2.5 -2.4L5.3 -1.9L8.1 -1.3L10.2 -0.7L11.2 -0.3L11.2 0.2L10.9 0.7L10.7 1.1L10.3 1.5L9.2 1.6L7.2 1.4L4.4 1.0L1.5 0.5L-0.9 0.1L-2.9 -0.3L-4.8 -0.8L-6.9 -1.5L-8.6 -2.3L-9.3 -2.9L-8.6 -3.3L-6.7 -3.4L-4.3 -3.3L-2.0 -3.1L0.1 -2.8z" fill="none" stroke="#bdbdbd" stroke-width="0.4" opacity="0.6"/><path d="M9.3 4.0L6.9 3.6L4.4 3.1L2.2 2.6L-0.0 2.0L-2.5 1.3L-5.1 0.5L-7.4 -0.3L-8.7 -1.0L-8.7 -1.5L-7.9 -1.8L-7.0 -2.1L-6.2 -2.3L-5.2 -2.3L-3.5 -2.0L-1.0 -1.3L1.8 -0.6L4.2 0.1L6.0 0.7L7.4 1.2L8.8 2.0L10.2 2.8L11.1 3.6L10.8 4.0L9.3 4.0z" fill="none" stroke="#bdbdbd" stroke-width="0.4" opacity="0.6"/><path d="M-9.7 -2.7L-10.2 -3.9L-10.6 -5.0L-10.3 -5.6L-8.9 -5.5L-6.5 -4.7L-3.9 -3.6L-1.4 -2.5L0.7 -1.4L2.9 -0.2L5.3 1.1L7.4 2.6L8.7 3.9L8.6 4.7L7.4 5.0L5.7 5.0L4.1 4.8L2.6 4.4L0.9 3.7L-1.5 2.7L-4.2 1.3L-6.6 0.1L-8.2 -1.0L-9.1 -1.8L-9.7 -2.7z" fill="none" stroke="#bdbdbd" stroke-width="0.4" opacity="0.6"/><path d="M1.7 -3.0L3.9 -2.4L6.2 -1.7L8.1 -1.0L9.1 -0.5L9.2 0.0L9.0 0.5L8.8 1.1L8.6 1.5L8.0 1.7L6.5 1.6L4.3 1.1L2.0 0.5L-0.1 -0.1L-1.7 -0.6L-3.3 -1.1L-5.0 -1.9L-6.5 -2.7L-7.3 -3.5L-6.9 -4.0L-5.5 -4.1L-3.6 -4.0L-1.8 -3.8L-0.1 -3.4L1.7 -3.0z" fill="none" stroke="#bdbdbd" stroke-width="0.4" opacity="0.6"/><path d="M3.2 -1.9L4.3 -1.9L4.8 -1.6L5.2 -1.1L5.6 -0.6L5.9 -0.1L5.7 0.4L4.6 0.8L2.8 1.2L0.8 1.6L-0.9 1.8L-2.5 2.0L-4.1 2.1L-5.8 2.1L-7.4 2.0L-8.4 1.6L-8.4 1.0L-7.5 0.3L-6.3 -0.3L-5.0 -0.7L-3.8 -1.1L-2.4 -1.3L-0.5 -1.6L1.5 -1.8L3.2 -1.9z" fill="none" stroke="#bdbdbd" stroke-width="0.4" opacity="0.6"/><path d="M8.4 -5.5L9.2 -5.5L10.1 -5.3L11.1 -5.1L11.5 -4.7L10.8 -3.9L8.9 -2.8L6.3 -1.6L3.6 -0.4L1.2 0.6L-1.0 1.6L-3.5 2.5L-6.0 3.3L-8.1 3.8L-9.0 3.6L-8.6 2.8L-7.4 1.7L-5.9 0.6L-4.4 -0.3L-2.8 -1.2L-0.6 -2.1L2.2 -3.3L4.9 -4.5L7.1 -5.2L8.4 -5.5z" fill="none" stroke="#bdbdbd" stroke-width="0.4" opacity="0.6"/></g>
<g transform="translate(855 303.4) scale(1 0.95)"><path d="M-10.0 -0.0L10.0 0.8" stroke="#d8d8d8" stroke-width=".45"/><path d="M-9.3 -3.0L8.8 3.7" stroke="#d8d8d8" stroke-width=".45"/><path d="M-7.2 -5.6L6.4 6.1" stroke="#d8d8d8" stroke-width=".45"/><path d="M-6.2 -6.3L5.3 6.8" stroke="#d8d8d8" stroke-width=".45"/><path d="M-2.7 -7.7L1.8 7.9" stroke="#d8d8d8" stroke-width=".45"/><path d="M-1.4 -7.9L0.4 8.0" stroke="#d8d8d8" stroke-width=".45"/><path d="M2.4 -7.8L-3.4 7.5" stroke="#d8d8d8" stroke-width=".45"/><path d="M5.9 -6.5L-6.7 6.0" stroke="#d8d8d8" stroke-width=".45"/><path d="M6.9 -5.8L-7.6 5.2" stroke="#d8d8d8" stroke-width=".45"/><path d="M9.1 -3.3L-9.5 2.5" stroke="#d8d8d8" stroke-width=".45"/><path d="M9.6 -2.3L-9.8 1.5" stroke="#d8d8d8" stroke-width=".45"/></g>
<g transform="translate(788 325.8) scale(1 0.95)"><rect x="-9.8" y="-9.2" width="2.600" height="2.600" rx=".4" fill="#fff"/><rect x="-9.8" y="-4.7" width="2.600" height="2.600" rx=".4" fill="#fff"/><rect x="-9.8" y="-0.2" width="2.600" height="2.600" rx=".4" fill="#fff"/><rect x="-9.8" y="4.3" width="2.600" height="2.600" rx=".4" fill="#fff"/><rect x="-9.8" y="8.8" width="2.600" height="2.600" rx=".4" fill="#fff"/><rect x="-5.2" y="-9.2" width="2.600" height="2.600" rx=".4" fill="#fff"/><rect x="-5.2" y="-4.7" width="2.600" height="2.600" rx=".4" fill="#fff"/><rect x="-5.2" y="-0.2" width="2.600" height="2.600" rx=".4" fill="#fff"/><rect x="-5.2" y="4.3" width="2.600" height="2.600" rx=".4" fill="#fff"/><rect x="-5.2" y="8.8" width="2.600" height="2.600" rx=".4" fill="#fff"/><rect x="-0.6" y="-9.2" width="2.600" height="2.600" rx=".4" fill="#fff"/><rect x="-0.6" y="-4.7" width="2.600" height="2.600" rx=".4" fill="#fff"/><rect x="-0.6" y="-0.2" width="2.600" height="2.600" rx=".4" fill="#fff"/><rect x="-0.6" y="4.3" width="2.600" height="2.600" rx=".4" fill="#fff"/><rect x="-0.6" y="8.8" width="2.600" height="2.600" rx=".4" fill="#fff"/><rect x="4.0" y="-9.2" width="2.600" height="2.600" rx=".4" fill="#fff"/><rect x="4.0" y="-4.7" width="2.600" height="2.600" rx=".4" fill="#fff"/><rect x="4.0" y="-0.2" width="2.600" height="2.600" rx=".4" fill="#fff"/><rect x="4.0" y="4.3" width="2.600" height="2.600" rx=".4" fill="#fff"/><rect x="4.0" y="8.8" width="2.600" height="2.600" rx=".4" fill="#fff"/><rect x="8.6" y="-9.2" width="2.600" height="2.600" rx=".4" fill="#fff"/><rect x="8.6" y="-4.7" width="2.600" height="2.600" rx=".4" fill="#fff"/><rect x="8.6" y="-0.2" width="2.600" height="2.600" rx=".4" fill="#fff"/><rect x="8.6" y="4.3" width="2.600" height="2.600" rx=".4" fill="#fff"/><rect x="8.6" y="8.8" width="2.600" height="2.600" rx=".4" fill="#fff"/></g>
<g transform="translate(821.5 325.8) scale(1 0.95)"><circle cx="-4.3" cy="-7.8" r="1.350" fill="#fff"/><circle cx="0.0" cy="-7.8" r="1.350" fill="#fff"/><circle cx="4.3" cy="-7.8" r="1.350" fill="#fff"/><circle cx="-6.4" cy="-3.9" r="1.350" fill="#fff"/><circle cx="-2.1" cy="-3.9" r="1.350" fill="#fff"/><circle cx="2.1" cy="-3.9" r="1.350" fill="#fff"/><circle cx="6.4" cy="-3.9" r="1.350" fill="#fff"/><circle cx="-8.6" cy="0.0" r="1.350" fill="#fff"/><circle cx="-4.3" cy="0.0" r="1.350" fill="#fff"/><circle cx="0.0" cy="0.0" r="1.350" fill="#fff"/><circle cx="4.3" cy="0.0" r="1.350" fill="#fff"/><circle cx="8.6" cy="0.0" r="1.350" fill="#fff"/><circle cx="-6.4" cy="3.9" r="1.350" fill="#fff"/><circle cx="-2.1" cy="3.9" r="1.350" fill="#fff"/><circle cx="2.1" cy="3.9" r="1.350" fill="#fff"/><circle cx="6.4" cy="3.9" r="1.350" fill="#fff"/><circle cx="-4.3" cy="7.8" r="1.350" fill="#fff"/><circle cx="0.0" cy="7.8" r="1.350" fill="#fff"/><circle cx="4.3" cy="7.8" r="1.350" fill="#fff"/></g>
<g transform="translate(855 325.8) scale(1 0.95)"><circle cx="-4.2" cy="-7.5" r="0.70" fill="#fff"/><circle cx="0.4" cy="-7.5" r="0.90" fill="#fff"/><circle cx="4.5" cy="-7.3" r="0.70" fill="#fff"/><circle cx="-6.6" cy="-3.5" r="1.70" fill="#fff"/><circle cx="-2.1" cy="-3.8" r="0.70" fill="#fff"/><circle cx="2.4" cy="-4.0" r="0.90" fill="#fff"/><circle cx="6.9" cy="-3.6" r="0.90" fill="#fff"/><circle cx="-8.3" cy="-0.5" r="1.70" fill="#fff"/><circle cx="-4.7" cy="-0.6" r="0.70" fill="#fff"/><circle cx="-0.3" cy="-0.3" r="0.90" fill="#fff"/><circle cx="4.7" cy="-0.3" r="0.90" fill="#fff"/><circle cx="8.6" cy="0.2" r="0.90" fill="#fff"/><circle cx="-6.8" cy="4.5" r="0.90" fill="#fff"/><circle cx="-1.6" cy="4.4" r="1.30" fill="#fff"/><circle cx="1.6" cy="3.8" r="0.90" fill="#fff"/><circle cx="6.2" cy="3.7" r="0.70" fill="#fff"/><circle cx="-4.2" cy="8.0" r="0.70" fill="#fff"/><circle cx="-0.2" cy="8.2" r="1.70" fill="#fff"/><circle cx="4.5" cy="7.4" r="1.70" fill="#fff"/></g>
<g transform="translate(788 348.1) scale(1 0.95)"><circle cx="9.3" cy="0.0" r="1.05" fill="#fff"/><circle cx="8.7" cy="3.2" r="1.05" fill="#fff"/><circle cx="7.1" cy="6.0" r="1.05" fill="#fff"/><circle cx="4.7" cy="8.1" r="1.05" fill="#fff"/><circle cx="1.6" cy="9.2" r="1.05" fill="#fff"/><circle cx="-1.6" cy="9.2" r="1.05" fill="#fff"/><circle cx="-4.6" cy="8.1" r="1.05" fill="#fff"/><circle cx="-7.1" cy="6.0" r="1.05" fill="#fff"/><circle cx="-8.7" cy="3.2" r="1.05" fill="#fff"/><circle cx="-9.3" cy="0.0" r="1.05" fill="#fff"/><circle cx="-8.7" cy="-3.2" r="1.05" fill="#fff"/><circle cx="-7.1" cy="-6.0" r="1.05" fill="#fff"/><circle cx="-4.7" cy="-8.1" r="1.05" fill="#fff"/><circle cx="-1.6" cy="-9.2" r="1.05" fill="#fff"/><circle cx="1.6" cy="-9.2" r="1.05" fill="#fff"/><circle cx="4.6" cy="-8.1" r="1.05" fill="#fff"/><circle cx="7.1" cy="-6.0" r="1.05" fill="#fff"/><circle cx="8.7" cy="-3.2" r="1.05" fill="#fff"/><circle cx="6.8" cy="0.0" r="1.05" fill="#fff"/><circle cx="6.1" cy="3.0" r="1.05" fill="#fff"/><circle cx="4.2" cy="5.3" r="1.05" fill="#fff"/><circle cx="1.5" cy="6.6" r="1.05" fill="#fff"/><circle cx="-1.5" cy="6.6" r="1.05" fill="#fff"/><circle cx="-4.2" cy="5.3" r="1.05" fill="#fff"/><circle cx="-6.1" cy="3.0" r="1.05" fill="#fff"/><circle cx="-6.8" cy="0.0" r="1.05" fill="#fff"/><circle cx="-6.1" cy="-3.0" r="1.05" fill="#fff"/><circle cx="-4.2" cy="-5.3" r="1.05" fill="#fff"/><circle cx="-1.5" cy="-6.6" r="1.05" fill="#fff"/><circle cx="1.5" cy="-6.6" r="1.05" fill="#fff"/><circle cx="4.2" cy="-5.3" r="1.05" fill="#fff"/><circle cx="6.1" cy="-3.0" r="1.05" fill="#fff"/><circle cx="4.4" cy="0.0" r="0.85" fill="#fff"/><circle cx="3.6" cy="2.6" r="0.85" fill="#fff"/><circle cx="1.4" cy="4.2" r="0.85" fill="#fff"/><circle cx="-1.4" cy="4.2" r="0.85" fill="#fff"/><circle cx="-3.6" cy="2.6" r="0.85" fill="#fff"/><circle cx="-4.4" cy="0.0" r="0.85" fill="#fff"/><circle cx="-3.6" cy="-2.6" r="0.85" fill="#fff"/><circle cx="-1.4" cy="-4.2" r="0.85" fill="#fff"/><circle cx="1.4" cy="-4.2" r="0.85" fill="#fff"/><circle cx="3.6" cy="-2.6" r="0.85" fill="#fff"/></g>
<g transform="translate(821.5 348.1) scale(1 0.95)"><circle cx="7.5" cy="0.0" r="2.100" fill="#fff"/><circle cx="5.3" cy="5.3" r="2.100" fill="#fff"/><circle cx="0.0" cy="7.5" r="2.100" fill="#fff"/><circle cx="-5.3" cy="5.3" r="2.100" fill="#fff"/><circle cx="-7.5" cy="0.0" r="2.100" fill="#fff"/><circle cx="-5.3" cy="-5.3" r="2.100" fill="#fff"/><circle cx="-0.0" cy="-7.5" r="2.100" fill="#fff"/><circle cx="5.3" cy="-5.3" r="2.100" fill="#fff"/><circle cx="0" cy="0" r="2" fill="#fff"/></g>
<g transform="translate(855 348.1) scale(1 0.95)"><rect x="-9.8" y="-8.5" width="1.200" height="4.200" fill="#fff"/><rect x="-9.8" y="-2.7" width="1.200" height="4.200" fill="#fff"/><rect x="-9.8" y="3.1" width="1.200" height="4.200" fill="#fff"/><rect x="-7.0" y="-6.7" width="1.200" height="4.200" fill="#fff"/><rect x="-7.0" y="-0.9" width="1.200" height="4.200" fill="#fff"/><rect x="-7.0" y="4.9" width="1.200" height="4.200" fill="#fff"/><rect x="-4.2" y="-8.5" width="1.200" height="4.200" fill="#fff"/><rect x="-4.2" y="-2.7" width="1.200" height="4.200" fill="#fff"/><rect x="-4.2" y="3.1" width="1.200" height="4.200" fill="#fff"/><rect x="-1.4" y="-6.7" width="1.200" height="4.200" fill="#fff"/><rect x="-1.4" y="-0.9" width="1.200" height="4.200" fill="#fff"/><rect x="-1.4" y="4.9" width="1.200" height="4.200" fill="#fff"/><rect x="1.4" y="-8.5" width="1.200" height="4.200" fill="#fff"/><rect x="1.4" y="-2.7" width="1.200" height="4.200" fill="#fff"/><rect x="1.4" y="3.1" width="1.200" height="4.200" fill="#fff"/><rect x="4.2" y="-6.7" width="1.200" height="4.200" fill="#fff"/><rect x="4.2" y="-0.9" width="1.200" height="4.200" fill="#fff"/><rect x="4.2" y="4.9" width="1.200" height="4.200" fill="#fff"/><rect x="7.0" y="-8.5" width="1.200" height="4.200" fill="#fff"/><rect x="7.0" y="-2.7" width="1.200" height="4.200" fill="#fff"/><rect x="7.0" y="3.1" width="1.200" height="4.200" fill="#fff"/><rect x="9.8" y="-6.7" width="1.200" height="4.200" fill="#fff"/><rect x="9.8" y="-0.9" width="1.200" height="4.200" fill="#fff"/><rect x="9.8" y="4.9" width="1.200" height="4.200" fill="#fff"/></g>
<g transform="translate(788 370.5) scale(1 0.95)"><rect x="-10.50" y="-2" width="1.400" height="4" fill="#fff"/><rect x="-7.85" y="-2" width="1.400" height="4" fill="#fff"/><rect x="-5.20" y="-2" width="1.400" height="4" fill="#fff"/><rect x="-2.55" y="-2" width="1.400" height="4" fill="#fff"/><rect x="0.10" y="-2" width="1.400" height="4" fill="#fff"/><rect x="2.75" y="-2" width="1.400" height="4" fill="#fff"/><rect x="5.40" y="-2" width="1.400" height="4" fill="#fff"/><rect x="8.05" y="-2" width="1.400" height="4" fill="#fff"/><rect x="10.70" y="-2" width="1.400" height="4" fill="#fff"/></g>
<g transform="translate(821.5 370.5) scale(1 0.95)"><path d="M0.0 0.0L10.0 1.0" stroke="#fff" stroke-width="0.75"/><path d="M0.0 0.0L8.5 5.2" stroke="#fff" stroke-width="0.75"/><path d="M0.0 0.0L5.4 8.4" stroke="#fff" stroke-width="0.75"/><path d="M0.0 0.0L1.2 9.9" stroke="#fff" stroke-width="0.75"/><path d="M-0.0 0.0L-3.2 9.5" stroke="#fff" stroke-width="0.75"/><path d="M-0.0 0.0L-7.0 7.2" stroke="#fff" stroke-width="0.75"/><path d="M-0.0 0.0L-9.4 3.4" stroke="#fff" stroke-width="0.75"/><path d="M-0.0 -0.0L-10.0 -1.0" stroke="#fff" stroke-width="0.75"/><path d="M-0.0 -0.0L-8.5 -5.2" stroke="#fff" stroke-width="0.75"/><path d="M-0.0 -0.0L-5.4 -8.4" stroke="#fff" stroke-width="0.75"/><path d="M-0.0 -0.0L-1.2 -9.9" stroke="#fff" stroke-width="0.75"/><path d="M0.0 -0.0L3.2 -9.5" stroke="#fff" stroke-width="0.75"/><path d="M0.0 -0.0L7.0 -7.2" stroke="#fff" stroke-width="0.75"/><path d="M0.0 -0.0L9.4 -3.4" stroke="#fff" stroke-width="0.75"/><circle cx="0" cy="0" r="1.200" fill="#fff"/></g>
<g transform="translate(855 370.5) scale(1 0.95)"><path d="M10.2 0.0L7.9 1.0L9.9 2.4L7.5 2.8L9.0 4.7L6.6 4.5L7.6 6.8L5.3 6.0L5.8 8.4L3.7 7.1L3.6 9.5L1.9 7.8L1.2 10.1L-0.0 8.0L-1.2 10.1L-1.9 7.8L-3.6 9.5L-3.7 7.1L-5.8 8.4L-5.3 6.0L-7.6 6.8L-6.6 4.5L-9.0 4.7L-7.5 2.8L-9.9 2.4L-7.9 1.0L-10.2 -0.0L-7.9 -1.0L-9.9 -2.4L-7.5 -2.8L-9.0 -4.7L-6.6 -4.5L-7.6 -6.8L-5.3 -6.0L-5.8 -8.4L-3.7 -7.1L-3.6 -9.5L-1.9 -7.8L-1.2 -10.1L-0.0 -8.0L1.2 -10.1L1.9 -7.8L3.6 -9.5L3.7 -7.1L5.8 -8.4L5.3 -6.0L7.6 -6.8L6.6 -4.5L9.0 -4.7L7.5 -2.8L9.9 -2.4L7.9 -1.0z" fill="#fff"/></g>
<g transform="translate(788 392.8) scale(1 0.95)"><rect x="-8.500" y="-8.500" width="17" height="17" fill="#fff"/><rect x="-7.6" y="-10.200" width="2.200" height="2" fill="#fff"/><rect x="-7.6" y="8.200" width="2.200" height="2" fill="#fff"/><rect x="-10.200" y="-7.6" width="2" height="2.200" fill="#fff"/><rect x="8.200" y="-7.6" width="2" height="2.200" fill="#fff"/><rect x="-3.2" y="-10.200" width="2.200" height="2" fill="#fff"/><rect x="-3.2" y="8.200" width="2.200" height="2" fill="#fff"/><rect x="-10.200" y="-3.2" width="2" height="2.200" fill="#fff"/><rect x="8.200" y="-3.2" width="2" height="2.200" fill="#fff"/><rect x="1.2" y="-10.200" width="2.200" height="2" fill="#fff"/><rect x="1.2" y="8.200" width="2.200" height="2" fill="#fff"/><rect x="-10.200" y="1.2" width="2" height="2.200" fill="#fff"/><rect x="8.200" y="1.2" width="2" height="2.200" fill="#fff"/><rect x="5.6" y="-10.200" width="2.200" height="2" fill="#fff"/><rect x="5.6" y="8.200" width="2.200" height="2" fill="#fff"/><rect x="-10.200" y="5.6" width="2" height="2.200" fill="#fff"/><rect x="8.200" y="5.6" width="2" height="2.200" fill="#fff"/></g>
<g transform="translate(821.5 392.8) scale(1 0.95)"><path d="M1.5 0.0L10.3 0.0" stroke="#fff" stroke-width="1.8"/><path d="M1.4 0.6L9.5 3.9" stroke="#fff" stroke-width="1.8"/><path d="M1.1 1.1L7.3 7.3" stroke="#fff" stroke-width="1.8"/><path d="M0.6 1.4L3.9 9.5" stroke="#fff" stroke-width="1.8"/><path d="M0.0 1.5L0.0 10.3" stroke="#fff" stroke-width="1.8"/><path d="M-0.6 1.4L-3.9 9.5" stroke="#fff" stroke-width="1.8"/><path d="M-1.1 1.1L-7.3 7.3" stroke="#fff" stroke-width="1.8"/><path d="M-1.4 0.6L-9.5 3.9" stroke="#fff" stroke-width="1.8"/><path d="M-1.5 0.0L-10.3 0.0" stroke="#fff" stroke-width="1.8"/><path d="M-1.4 -0.6L-9.5 -3.9" stroke="#fff" stroke-width="1.8"/><path d="M-1.1 -1.1L-7.3 -7.3" stroke="#fff" stroke-width="1.8"/><path d="M-0.6 -1.4L-3.9 -9.5" stroke="#fff" stroke-width="1.8"/><path d="M-0.0 -1.5L-0.0 -10.3" stroke="#fff" stroke-width="1.8"/><path d="M0.6 -1.4L3.9 -9.5" stroke="#fff" stroke-width="1.8"/><path d="M1.1 -1.1L7.3 -7.3" stroke="#fff" stroke-width="1.8"/><path d="M1.4 -0.6L9.5 -3.9" stroke="#fff" stroke-width="1.8"/><circle cx="0" cy="0" r="3.200" fill="#fff"/></g>
<g transform="translate(855 392.8) scale(1 0.95)"><path d="M10.2 1.0L7.1 2.7L8.4 6.0L4.8 5.9L4.2 9.4L1.2 7.5L-1.0 10.2L-2.7 7.1L-6.0 8.4L-5.9 4.8L-9.4 4.2L-7.5 1.2L-10.2 -1.0L-7.1 -2.7L-8.4 -6.0L-4.8 -5.9L-4.2 -9.4L-1.2 -7.5L1.0 -10.2L2.7 -7.1L6.0 -8.4L5.9 -4.8L9.4 -4.2L7.5 -1.2z" fill="#fff"/></g>
<g transform="translate(788 415.1) scale(1 0.95)"><path d="M-10.5 -2.4L-10.2 -2.2L-9.9 -1.6L-9.6 -1.1L-9.3 -0.9L-9.0 -1.1L-8.8 -1.6L-8.5 -2.2L-8.2 -2.4L-7.9 -2.2L-7.6 -1.7L-7.3 -1.1L-7.0 -0.9L-6.7 -1.1L-6.4 -1.6L-6.1 -2.2L-5.8 -2.4L-5.5 -2.2L-5.2 -1.7L-5.0 -1.1L-4.7 -0.9L-4.4 -1.1L-4.1 -1.6L-3.8 -2.2L-3.5 -2.4L-3.2 -2.2L-2.9 -1.6L-2.6 -1.1L-2.3 -0.9L-2.0 -1.1L-1.8 -1.6L-1.5 -2.2L-1.2 -2.4L-0.9 -2.2L-0.6 -1.6L-0.3 -1.1L0.0 -0.9L0.3 -1.1L0.6 -1.6L0.9 -2.2L1.2 -2.4L1.5 -2.2L1.8 -1.6L2.0 -1.1L2.3 -0.9L2.6 -1.1L2.9 -1.6L3.2 -2.2L3.5 -2.4L3.8 -2.2L4.1 -1.6L4.4 -1.1L4.7 -0.9L5.0 -1.1L5.2 -1.6L5.5 -2.2L5.8 -2.4L6.1 -2.2L6.4 -1.6L6.7 -1.1L7.0 -0.9L7.3 -1.1L7.6 -1.6L7.9 -2.2L8.2 -2.4L8.5 -2.2L8.8 -1.7L9.0 -1.1L9.3 -0.9L9.6 -1.1L9.9 -1.6L10.2 -2.2L10.5 -2.4L10.5 2.4L10.2 2.2L9.9 1.6L9.6 1.1L9.3 0.9L9.0 1.1L8.8 1.7L8.5 2.2L8.2 2.4L7.9 2.2L7.6 1.6L7.3 1.1L7.0 0.9L6.7 1.1L6.4 1.6L6.1 2.2L5.8 2.4L5.5 2.2L5.2 1.6L5.0 1.1L4.7 0.9L4.4 1.1L4.1 1.6L3.8 2.2L3.5 2.4L3.2 2.2L2.9 1.6L2.6 1.1L2.3 0.9L2.0 1.1L1.8 1.6L1.5 2.2L1.2 2.4L0.9 2.2L0.6 1.6L0.3 1.1L0.0 0.9L-0.3 1.1L-0.6 1.6L-0.9 2.2L-1.2 2.4L-1.5 2.2L-1.8 1.6L-2.0 1.1L-2.3 0.9L-2.6 1.1L-2.9 1.6L-3.2 2.2L-3.5 2.4L-3.8 2.2L-4.1 1.6L-4.4 1.1L-4.7 0.9L-5.0 1.1L-5.2 1.7L-5.5 2.2L-5.8 2.4L-6.1 2.2L-6.4 1.6L-6.7 1.1L-7.0 0.9L-7.3 1.1L-7.6 1.7L-7.9 2.2L-8.2 2.4L-8.5 2.2L-8.8 1.6L-9.0 1.1L-9.3 0.9L-9.6 1.1L-9.9 1.6L-10.2 2.2L-10.5 2.4z" fill="#fff"/></g>
<g transform="translate(821.5 415.1) scale(1 0.95)"><path d="M-10.5 -2.4L-10.3 -2.3L-10.0 -1.9L-9.8 -1.6L-9.5 -1.5L-9.3 -1.6L-9.1 -1.9L-8.8 -2.3L-8.6 -2.4L-8.4 -2.3L-8.1 -2.0L-7.9 -1.6L-7.6 -1.5L-7.4 -1.6L-7.2 -1.9L-6.9 -2.3L-6.7 -2.4L-6.4 -2.3L-6.2 -2.0L-6.0 -1.6L-5.7 -1.5L-5.5 -1.6L-5.2 -1.9L-5.0 -2.3L-4.8 -2.4L-4.5 -2.3L-4.3 -1.9L-4.1 -1.6L-3.8 -1.5L-3.6 -1.6L-3.3 -1.9L-3.1 -2.3L-2.9 -2.4L-2.6 -2.3L-2.4 -1.9L-2.1 -1.6L-1.9 -1.5L-1.7 -1.6L-1.4 -1.9L-1.2 -2.3L-1.0 -2.4L-0.7 -2.3L-0.5 -1.9L-0.2 -1.6L0.0 -1.5L0.2 -1.6L0.5 -1.9L0.7 -2.3L1.0 -2.4L1.2 -2.3L1.4 -1.9L1.7 -1.6L1.9 -1.5L2.1 -1.6L2.4 -1.9L2.6 -2.3L2.9 -2.4L3.1 -2.3L3.3 -1.9L3.6 -1.6L3.8 -1.5L4.1 -1.6L4.3 -1.9L4.5 -2.3L4.8 -2.4L5.0 -2.3L5.2 -2.0L5.5 -1.6L5.7 -1.5L6.0 -1.6L6.2 -1.9L6.4 -2.3L6.7 -2.4L6.9 -2.3L7.2 -2.0L7.4 -1.6L7.6 -1.5L7.9 -1.6L8.1 -1.9L8.4 -2.3L8.6 -2.4L8.8 -2.3L9.1 -2.0L9.3 -1.6L9.5 -1.5L9.8 -1.6L10.0 -1.9L10.3 -2.3L10.5 -2.4L10.5 2.4L10.3 2.3L10.0 1.9L9.8 1.6L9.5 1.5L9.3 1.6L9.1 2.0L8.8 2.3L8.6 2.4L8.4 2.3L8.1 1.9L7.9 1.6L7.6 1.5L7.4 1.6L7.2 2.0L6.9 2.3L6.7 2.4L6.4 2.3L6.2 1.9L6.0 1.6L5.7 1.5L5.5 1.6L5.2 2.0L5.0 2.3L4.8 2.4L4.5 2.3L4.3 1.9L4.1 1.6L3.8 1.5L3.6 1.6L3.3 1.9L3.1 2.3L2.9 2.4L2.6 2.3L2.4 1.9L2.1 1.6L1.9 1.5L1.7 1.6L1.4 1.9L1.2 2.3L1.0 2.4L0.7 2.3L0.5 1.9L0.2 1.6L0.0 1.5L-0.2 1.6L-0.5 1.9L-0.7 2.3L-1.0 2.4L-1.2 2.3L-1.4 1.9L-1.7 1.6L-1.9 1.5L-2.1 1.6L-2.4 1.9L-2.6 2.3L-2.9 2.4L-3.1 2.3L-3.3 1.9L-3.6 1.6L-3.8 1.5L-4.1 1.6L-4.3 1.9L-4.5 2.3L-4.8 2.4L-5.0 2.3L-5.2 1.9L-5.5 1.6L-5.7 1.5L-6.0 1.6L-6.2 2.0L-6.4 2.3L-6.7 2.4L-6.9 2.3L-7.2 1.9L-7.4 1.6L-7.6 1.5L-7.9 1.6L-8.1 2.0L-8.4 2.3L-8.6 2.4L-8.8 2.3L-9.1 1.9L-9.3 1.6L-9.5 1.5L-9.8 1.6L-10.0 1.9L-10.3 2.3L-10.5 2.4z" fill="#fff"/></g>
<g transform="translate(855 415.1) scale(1 0.95)"><rect x="-10.40" y="-1.2" width="1.150" height="2.4" fill="#fff"/><rect x="-9.30" y="-2.0" width="1.150" height="4.0" fill="#fff"/><rect x="-8.20" y="-2.6" width="1.150" height="5.2" fill="#fff"/><rect x="-7.10" y="-1.8" width="1.150" height="3.6" fill="#fff"/><rect x="-6.00" y="-3.2" width="1.150" height="6.4" fill="#fff"/><rect x="-4.90" y="-4.2" width="1.150" height="8.4" fill="#fff"/><rect x="-3.80" y="-3.0" width="1.150" height="6.0" fill="#fff"/><rect x="-2.70" y="-5.0" width="1.150" height="10.0" fill="#fff"/><rect x="-1.60" y="-4.0" width="1.150" height="8.0" fill="#fff"/><rect x="-0.50" y="-5.2" width="1.150" height="10.4" fill="#fff"/><rect x="0.60" y="-4.4" width="1.150" height="8.8" fill="#fff"/><rect x="1.70" y="-3.0" width="1.150" height="6.0" fill="#fff"/><rect x="2.80" y="-4.2" width="1.150" height="8.4" fill="#fff"/><rect x="3.90" y="-2.6" width="1.150" height="5.2" fill="#fff"/><rect x="5.00" y="-3.2" width="1.150" height="6.4" fill="#fff"/><rect x="6.10" y="-1.8" width="1.150" height="3.6" fill="#fff"/><rect x="7.20" y="-2.4" width="1.150" height="4.8" fill="#fff"/><rect x="8.30" y="-1.4" width="1.150" height="2.8" fill="#fff"/><rect x="9.40" y="-1.0" width="1.150" height="2.0" fill="#fff"/></g>
<g transform="translate(788 437.5) scale(1 0.95)"><path d="M-10 -9.500h4.500a5.500 5.500 0 0 0 11 0H10v19H5.500a5.500 5.500 0 0 0-11 0H-10z" fill="#fff"/></g>
<g transform="translate(821.5 437.5) scale(1 0.95)"><path d="M-10.500 -5a2.620 2.200 0 0 0 5.250 0a2.620 2.200 0 0 0 5.250 0a2.620 2.200 0 0 0 5.250 0a2.620 2.200 0 0 0 5.250 0v10a2.620 2.200 0 0 0 -5.250 0a2.620 2.200 0 0 0 -5.250 0a2.620 2.200 0 0 0 -5.250 0a2.620 2.200 0 0 0 -5.250 0z" fill="#fff"/></g>
<g transform="translate(855 437.5) scale(1 0.95)"><path d="M0.0 0.0L6.6 2.0" stroke="#fff" stroke-width="0.65"/><circle cx="6.6" cy="2.0" r="1.100" fill="#fff"/><path d="M0.0 0.0L5.6 6.1" stroke="#fff" stroke-width="0.65"/><path d="M0.0 0.0L1.7 7.3" stroke="#fff" stroke-width="0.65"/><circle cx="1.7" cy="7.3" r="1.100" fill="#fff"/><path d="M-0.0 0.0L-2.5 8.2" stroke="#fff" stroke-width="0.65"/><path d="M-0.0 0.0L-6.3 5.9" stroke="#fff" stroke-width="0.65"/><circle cx="-6.3" cy="5.9" r="1.100" fill="#fff"/><path d="M-0.0 0.0L-6.0 1.4" stroke="#fff" stroke-width="0.65"/><path d="M-0.0 -0.0L-5.7 -1.8" stroke="#fff" stroke-width="0.65"/><circle cx="-5.7" cy="-1.8" r="1.100" fill="#fff"/><path d="M-0.0 -0.0L-6.5 -7.0" stroke="#fff" stroke-width="0.65"/><path d="M-0.0 -0.0L-1.6 -6.8" stroke="#fff" stroke-width="0.65"/><circle cx="-1.6" cy="-6.8" r="1.100" fill="#fff"/><path d="M0.0 -0.0L2.0 -6.6" stroke="#fff" stroke-width="0.65"/><path d="M0.0 -0.0L7.5 -7.0" stroke="#fff" stroke-width="0.65"/><circle cx="7.5" cy="-7.0" r="1.100" fill="#fff"/><path d="M0.0 -0.0L7.8 -1.8" stroke="#fff" stroke-width="0.65"/><circle cx="0" cy="0" r="1.100" fill="#fff"/></g>
<g transform="translate(788 459.9) scale(1 0.95)"><path d="M-10 -10h5a5 5 0 0 0 10 0h5v5a5 5 0 0 0 0 10v5h-5a5 5 0 0 0-10 0h-5v-5a5 5 0 0 0 0-10z" fill="#fff"/></g>
<g transform="translate(821.5 459.9) scale(1 0.95)"><path d="M-44 0L-32-10.6A15.2 15.2 0 1 0-10.6-32L0-44 10.6-32A15.2 15.2 0 1 0 32-10.6L44 0 32 10.6A15.2 15.2 0 1 0 10.6 32L0 44-10.6 32A15.2 15.2 0 1 0-32 10.6z" fill="#fff" transform="scale(.245)"/></g>
<g transform="translate(855 459.9) scale(1 0.95)"><rect x="-10.500" y="-10.0" width="21" height="1.700" fill="#fff"/><rect x="-10.500" y="-5.3" width="19" height="1.700" fill="#fff"/><rect x="-10.500" y="-0.6" width="21" height="1.700" fill="#fff"/><rect x="-10.500" y="4.1" width="18" height="1.700" fill="#fff"/><rect x="-10.500" y="8.8" width="21" height="1.700" fill="#fff"/></g>
<rect x="810.300" y="450.600" width="33.400" height="20.200" fill="none" stroke="#3fa9d6" stroke-width=".8"/>
</svg>
</div>
 </div>
 <div id="player" class="a">
<svg class="a" style="left:31.0px;top:14.7px" width="24.0" height="28.5" viewBox="0 0 24 28.500"><path d="M0 0L24 14.250 0 28.500z" fill="#3b78d4"/></svg>
<div class="a" style="left:81px;top:28.100px;width:234px;height:1.600px;background:#3b78d4"></div>
<div class="a" style="left:315px;top:28.100px;width:330.700px;height:1.600px;background:#808080"></div>
<div class="a" style="left:309.500px;top:23.700px;width:10.400px;height:10.400px;border-radius:50%;background:#3b78d4"></div>
<svg class="a" style="left:659.0px;top:21.0px" width="18.5" height="15.5" viewBox="0 0 18.500 15.500"><path d="M0 4.800h4.500L12 0v15.500L4.500 10.700H0z" fill="#3b78d4"/><path d="M14.200 4.200a5 5 0 0 1 0 7.100" fill="none" stroke="#3b78d4" stroke-width="1.500" stroke-linecap="round"/></svg>
<svg class="a" style="left:686.4px;top:21.0px" width="16.0" height="16.0" viewBox="0 0 16 16"><path d="M15.60 6.77L15.60 9.23L13.54 9.35L12.87 10.96L14.24 12.51L12.51 14.24L10.96 12.87L9.35 13.54L9.23 15.60L6.77 15.60L6.65 13.54L5.04 12.87L3.49 14.24L1.76 12.51L3.13 10.96L2.46 9.35L0.40 9.23L0.40 6.77L2.46 6.65L3.13 5.04L1.76 3.49L3.49 1.76L5.04 3.13L6.65 2.46L6.77 0.40L9.23 0.40L9.35 2.46L10.96 3.13L12.51 1.76L14.24 3.49L12.87 5.04L13.54 6.65zM8 5a3 3 0 1 0 .01 0z" fill="#3b78d4" fill-rule="evenodd"/></svg>
<svg class="a" style="left:712.2px;top:22.0px" width="14.8" height="13.8" viewBox="0 0 14.800 13.800"><path d="M.9 4.600V.9h3.900M10 .9h3.900v3.700M13.900 9.200v3.700H10M4.800 12.900H.9V9.200" fill="none" stroke="#3b78d4" stroke-width="1.800"/></svg>
<svg class="a" style="left:737.2px;top:22.0px" width="14.8" height="13.8" viewBox="0 0 14.800 13.800"><path d="M0 4.700h4.900V0M9.900 0v4.700h4.900M14.800 9.100H9.900v4.700M4.900 13.800V9.100H0" fill="none" stroke="#3b78d4" stroke-width="1.800"/></svg>
 </div>
</div>

<div id="title" class="a">demo <span style="letter-spacing:8.6px">video</span></div>
<div id="desc" class="a"><span id="l1" style="letter-spacing:.19px">The demo video includes instructions for installation and usage of</span><br><span id="l2" style="letter-spacing:.03px">the brushes, color load swatches and the smart BUILDER .psd file.</span></div>
</body>
</html>
